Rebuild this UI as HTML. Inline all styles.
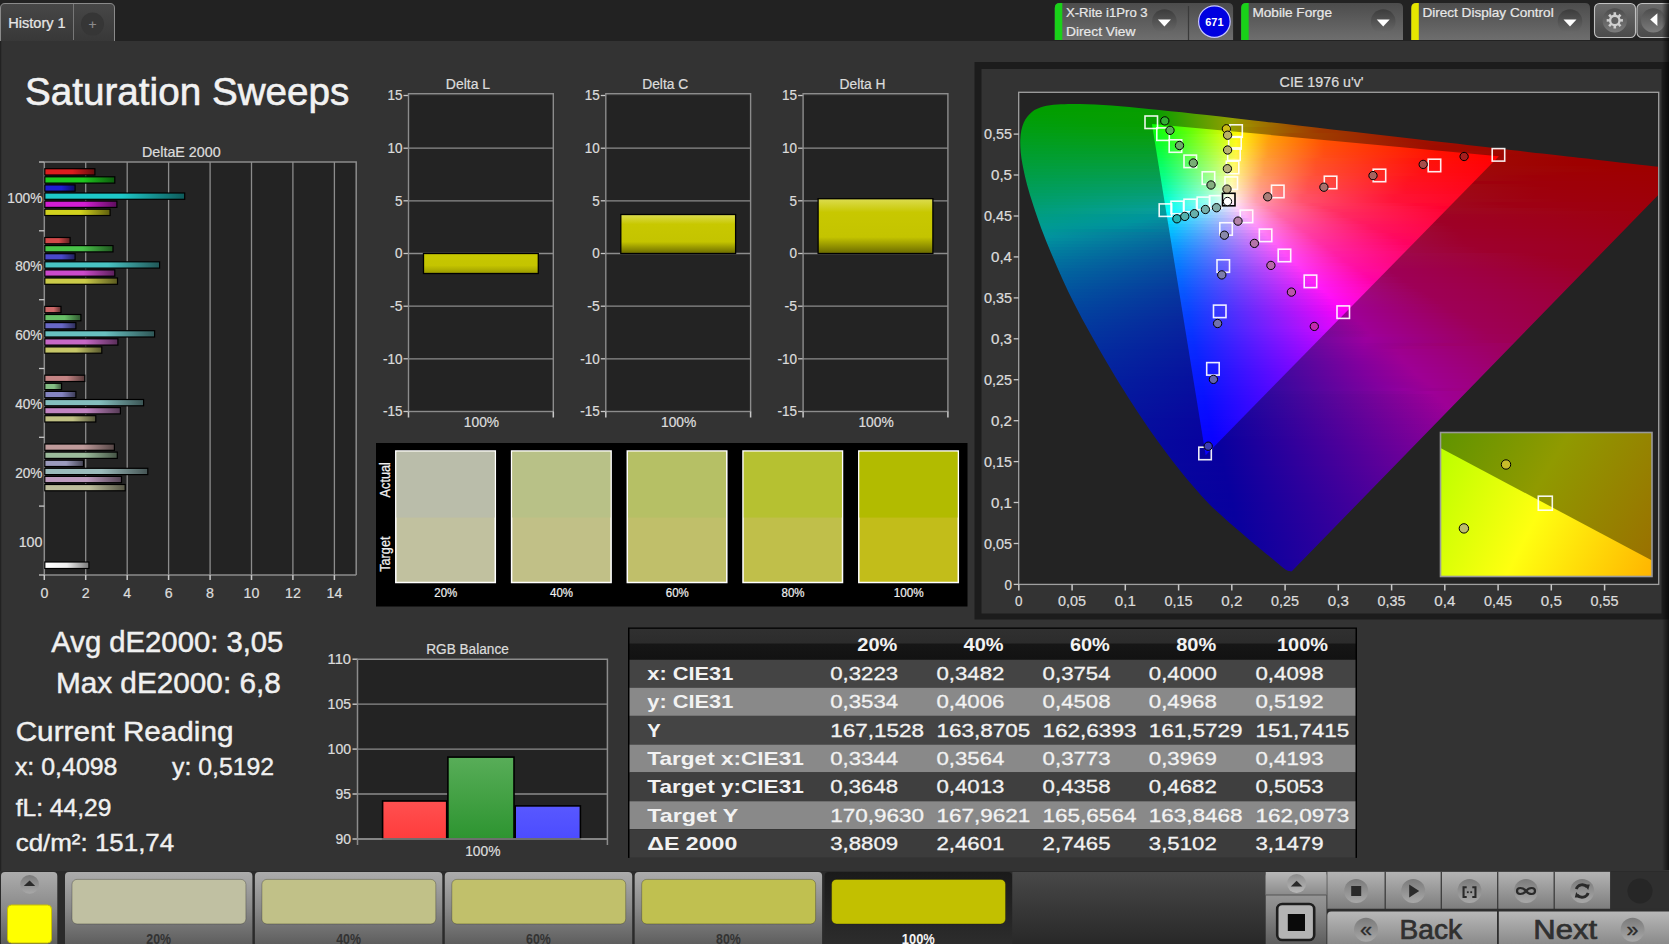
<!DOCTYPE html><html><head><meta charset="utf-8"><style>
html,body{margin:0;padding:0;background:#333;overflow:hidden}
svg{display:block;font-family:"Liberation Sans", sans-serif}
</style></head><body><svg width="1669" height="944" viewBox="0 0 1669 944"><rect x="0" y="0" width="1669" height="944" fill="#333333"/><rect x="0" y="0" width="1669" height="41" fill="#222222"/><rect x="0" y="41" width="1.2" height="830" fill="#222222"/><defs><linearGradient id="tabg" x1="0" y1="0" x2="0" y2="1"><stop offset="0" stop-color="#474747"/><stop offset="1" stop-color="#383838"/></linearGradient><radialGradient id="plusg" cx="0.5" cy="0.4" r="0.6"><stop offset="0" stop-color="#3a3a3a"/><stop offset="1" stop-color="#404040"/></radialGradient></defs><path d="M0.5 41 V8 Q0.5 3.5 5 3.5 H110 Q114.5 3.5 114.5 8 V41 Z" fill="url(#tabg)"/><path d="M0.5 41 V8 Q0.5 3.5 5 3.5 H110 Q114.5 3.5 114.5 8 V41" fill="none" stroke="#8a8a8a" stroke-width="1"/><line x1="73.5" y1="4" x2="73.5" y2="40" stroke="#777" stroke-width="1"/><circle cx="92.5" cy="24" r="11.5" fill="#363636"/><text x="88.5" y="28.5" font-size="13.0" textLength="8.0" lengthAdjust="spacingAndGlyphs" fill="#8a8a8a" stroke="#8a8a8a" stroke-width="0.21">+</text><text x="8.3" y="27.6" font-size="14.2" textLength="57.4" lengthAdjust="spacingAndGlyphs" fill="#e6e6e6" stroke="#e6e6e6" stroke-width="0.23">History 1</text><defs><linearGradient id="wg" x1="0" y1="0" x2="0" y2="1"><stop offset="0" stop-color="#4c4c4c"/><stop offset="1" stop-color="#6e6e6e"/></linearGradient><radialGradient id="ddg" cx="0.5" cy="0.5" r="0.5"><stop offset="0" stop-color="#5a5a5a"/><stop offset="0.8" stop-color="#555"/><stop offset="1" stop-color="#4a4a4a"/></radialGradient><linearGradient id="ddg2" x1="0" y1="0" x2="0" y2="1"><stop offset="0" stop-color="#3c3c3c"/><stop offset="1" stop-color="#6a6a6a"/></linearGradient></defs><path d="M1054.8 40 V8 Q1054.8 3 1059.8 3 H1228.1 Q1233.1 3 1233.1 8 V40 Z" fill="url(#wg)"/><path d="M1054.8 40 V8 Q1054.8 3 1059.8 3 H1062.3 V40 Z" fill="#19d119"/><line x1="1188.5" y1="6" x2="1188.5" y2="40" stroke="#3a3a3a" stroke-width="1.2"/><circle cx="1164.4" cy="21.5" r="12.3" fill="url(#ddg2)"/><path d="M1157.9 19.5 H1170.9 L1164.4 26.5 Z" fill="#fff"/><circle cx="1214.4" cy="21.6" r="15.8" fill="#0000e0" stroke="#c8c8ff" stroke-width="1.2"/><text x="1205.2" y="25.8" font-size="11.4" textLength="18.3" lengthAdjust="spacingAndGlyphs" fill="#ffffff" font-weight="bold">671</text><text x="1065.9" y="17.1" font-size="12.4" textLength="81.8" lengthAdjust="spacingAndGlyphs" fill="#e8e8e8" stroke="#e8e8e8" stroke-width="0.20">X-Rite i1Pro 3</text><text x="1066.0" y="35.7" font-size="12.4" textLength="69.5" lengthAdjust="spacingAndGlyphs" fill="#e8e8e8" stroke="#e8e8e8" stroke-width="0.20">Direct View</text><path d="M1241.2 40 V8 Q1241.2 3 1246.2 3 H1398 Q1403 3 1403 8 V40 Z" fill="url(#wg)"/><path d="M1241.2 40 V8 Q1241.2 3 1246.2 3 H1248.7 V40 Z" fill="#19d119"/><circle cx="1383.2" cy="21.5" r="12.3" fill="url(#ddg2)"/><path d="M1376.7 19.5 H1389.7 L1383.2 26.5 Z" fill="#fff"/><text x="1252.4" y="16.8" font-size="12.4" textLength="79.6" lengthAdjust="spacingAndGlyphs" fill="#e8e8e8" stroke="#e8e8e8" stroke-width="0.20">Mobile Forge</text><path d="M1411.3 40 V8 Q1411.3 3 1416.3 3 H1585 Q1590 3 1590 8 V40 Z" fill="url(#wg)"/><path d="M1411.3 40 V8 Q1411.3 3 1416.3 3 H1418.8 V40 Z" fill="#e6e600"/><circle cx="1570" cy="21.5" r="12.3" fill="url(#ddg2)"/><path d="M1563.5 19.5 H1576.5 L1570 26.5 Z" fill="#fff"/><text x="1422.4" y="16.6" font-size="12.4" textLength="131.3" lengthAdjust="spacingAndGlyphs" fill="#e8e8e8" stroke="#e8e8e8" stroke-width="0.20">Direct Display Control</text><defs><linearGradient id="gbg" x1="0" y1="0" x2="0" y2="1"><stop offset="0" stop-color="#6a6a6a"/><stop offset="1" stop-color="#4a4a4a"/></linearGradient><linearGradient id="gcirc" x1="0" y1="0" x2="0" y2="1"><stop offset="0" stop-color="#4c4c4c"/><stop offset="1" stop-color="#7c7c7c"/></linearGradient></defs><rect x="1594.5" y="3.5" width="41" height="34" rx="5" fill="url(#gbg)" stroke="#c0c0c0" stroke-width="1.1"/><circle cx="1614.8" cy="20.4" r="12.2" fill="url(#gcirc)"/><path d="M1620.58 19.19 L1622.89 19.05 L1622.89 21.75 L1620.58 21.61 L1619.74 23.63 L1621.47 25.17 L1619.57 27.07 L1618.03 25.34 L1616.01 26.18 L1616.15 28.49 L1613.45 28.49 L1613.59 26.18 L1611.57 25.34 L1610.03 27.07 L1608.13 25.17 L1609.86 23.63 L1609.02 21.61 L1606.71 21.75 L1606.71 19.05 L1609.02 19.19 L1609.86 17.17 L1608.13 15.63 L1610.03 13.73 L1611.57 15.46 L1613.59 14.62 L1613.45 12.31 L1616.15 12.31 L1616.01 14.62 L1618.03 15.46 L1619.57 13.73 L1621.47 15.63 L1619.74 17.17Z" fill="#d0d0d0"/><circle cx="1614.8" cy="20.4" r="3.5" fill="#606060"/><rect x="1637" y="3.5" width="40" height="34" rx="5" fill="url(#gbg)" stroke="#c0c0c0" stroke-width="1.1"/><circle cx="1653.3" cy="20.4" r="12.2" fill="url(#gcirc)"/><path d="M1650.2 19.6 L1657.4 13.2 V26 Z" fill="#fff"/><defs><linearGradient id="redge" x1="0" y1="0" x2="1" y2="0"><stop offset="0" stop-color="#000" stop-opacity="0"/><stop offset="1" stop-color="#000" stop-opacity="0.65"/></linearGradient></defs><text x="25.0" y="105.3" font-size="39.6" textLength="324.4" lengthAdjust="spacingAndGlyphs" fill="#f2f2f2" stroke="#f2f2f2" stroke-width="0.63">Saturation Sweeps</text><rect x="44.3" y="162" width="311.7" height="413" fill="#232323"/><line x1="85.7" y1="162" x2="85.7" y2="575" stroke="#8c8c8c" stroke-width="1.3"/><line x1="127.2" y1="162" x2="127.2" y2="575" stroke="#8c8c8c" stroke-width="1.3"/><line x1="168.6" y1="162" x2="168.6" y2="575" stroke="#8c8c8c" stroke-width="1.3"/><line x1="210.1" y1="162" x2="210.1" y2="575" stroke="#8c8c8c" stroke-width="1.3"/><line x1="251.5" y1="162" x2="251.5" y2="575" stroke="#8c8c8c" stroke-width="1.3"/><line x1="292.9" y1="162" x2="292.9" y2="575" stroke="#8c8c8c" stroke-width="1.3"/><line x1="334.4" y1="162" x2="334.4" y2="575" stroke="#8c8c8c" stroke-width="1.3"/><path d="M44.3 162 H356.2 V575" fill="none" stroke="#8c8c8c" stroke-width="1.5"/><path d="M44.3 162 V575 H356.2" fill="none" stroke="#8c8c8c" stroke-width="1.5"/><line x1="39" y1="162.0" x2="44.3" y2="162.0" stroke="#c8c8c8" stroke-width="1.3"/><line x1="39" y1="230.8" x2="44.3" y2="230.8" stroke="#c8c8c8" stroke-width="1.3"/><line x1="39" y1="299.7" x2="44.3" y2="299.7" stroke="#c8c8c8" stroke-width="1.3"/><line x1="39" y1="368.5" x2="44.3" y2="368.5" stroke="#c8c8c8" stroke-width="1.3"/><line x1="39" y1="437.3" x2="44.3" y2="437.3" stroke="#c8c8c8" stroke-width="1.3"/><line x1="39" y1="506.1" x2="44.3" y2="506.1" stroke="#c8c8c8" stroke-width="1.3"/><line x1="39" y1="575.0" x2="44.3" y2="575.0" stroke="#c8c8c8" stroke-width="1.3"/><line x1="44.3" y1="575" x2="44.3" y2="580" stroke="#c8c8c8" stroke-width="1.5"/><text x="40.4" y="597.5" font-size="14.2" textLength="7.9" lengthAdjust="spacingAndGlyphs" fill="#dcdcdc" stroke="#dcdcdc" stroke-width="0.23">0</text><line x1="85.7" y1="575" x2="85.7" y2="580" stroke="#c8c8c8" stroke-width="1.5"/><text x="81.8" y="597.5" font-size="14.2" textLength="7.9" lengthAdjust="spacingAndGlyphs" fill="#dcdcdc" stroke="#dcdcdc" stroke-width="0.23">2</text><line x1="127.2" y1="575" x2="127.2" y2="580" stroke="#c8c8c8" stroke-width="1.5"/><text x="123.2" y="597.5" font-size="14.2" textLength="7.9" lengthAdjust="spacingAndGlyphs" fill="#dcdcdc" stroke="#dcdcdc" stroke-width="0.23">4</text><line x1="168.6" y1="575" x2="168.6" y2="580" stroke="#c8c8c8" stroke-width="1.5"/><text x="164.7" y="597.5" font-size="14.2" textLength="7.9" lengthAdjust="spacingAndGlyphs" fill="#dcdcdc" stroke="#dcdcdc" stroke-width="0.23">6</text><line x1="210.1" y1="575" x2="210.1" y2="580" stroke="#c8c8c8" stroke-width="1.5"/><text x="206.1" y="597.5" font-size="14.2" textLength="7.9" lengthAdjust="spacingAndGlyphs" fill="#dcdcdc" stroke="#dcdcdc" stroke-width="0.23">8</text><line x1="251.5" y1="575" x2="251.5" y2="580" stroke="#c8c8c8" stroke-width="1.5"/><text x="243.6" y="597.5" font-size="14.2" textLength="15.8" lengthAdjust="spacingAndGlyphs" fill="#dcdcdc" stroke="#dcdcdc" stroke-width="0.23">10</text><line x1="292.9" y1="575" x2="292.9" y2="580" stroke="#c8c8c8" stroke-width="1.5"/><text x="285.1" y="597.5" font-size="14.2" textLength="15.8" lengthAdjust="spacingAndGlyphs" fill="#dcdcdc" stroke="#dcdcdc" stroke-width="0.23">12</text><line x1="334.4" y1="575" x2="334.4" y2="580" stroke="#c8c8c8" stroke-width="1.5"/><text x="326.5" y="597.5" font-size="14.2" textLength="15.8" lengthAdjust="spacingAndGlyphs" fill="#dcdcdc" stroke="#dcdcdc" stroke-width="0.23">14</text><text x="142.0" y="157.0" font-size="14.2" textLength="78.6" lengthAdjust="spacingAndGlyphs" fill="#dcdcdc" stroke="#dcdcdc" stroke-width="0.23">DeltaE 2000</text><text x="7.3" y="202.6" font-size="15.3" textLength="35.2" lengthAdjust="spacingAndGlyphs" fill="#dcdcdc" stroke="#dcdcdc" stroke-width="0.24">100%</text><text x="15.2" y="271.4" font-size="15.3" textLength="27.3" lengthAdjust="spacingAndGlyphs" fill="#dcdcdc" stroke="#dcdcdc" stroke-width="0.24">80%</text><text x="15.2" y="340.3" font-size="15.3" textLength="27.3" lengthAdjust="spacingAndGlyphs" fill="#dcdcdc" stroke="#dcdcdc" stroke-width="0.24">60%</text><text x="15.2" y="409.1" font-size="15.3" textLength="27.3" lengthAdjust="spacingAndGlyphs" fill="#dcdcdc" stroke="#dcdcdc" stroke-width="0.24">40%</text><text x="15.2" y="477.9" font-size="15.3" textLength="27.3" lengthAdjust="spacingAndGlyphs" fill="#dcdcdc" stroke="#dcdcdc" stroke-width="0.24">20%</text><text x="18.7" y="546.8" font-size="15.3" textLength="23.8" lengthAdjust="spacingAndGlyphs" fill="#dcdcdc" stroke="#dcdcdc" stroke-width="0.24">100</text><rect x="44.8" y="168.7" width="50.1" height="6.3" fill="url(#db0)" stroke="#000" stroke-width="1.2"/><rect x="44.8" y="176.8" width="70.0" height="6.3" fill="url(#db1)" stroke="#000" stroke-width="1.2"/><rect x="44.8" y="184.9" width="30.3" height="6.3" fill="url(#db2)" stroke="#000" stroke-width="1.2"/><rect x="44.8" y="193.0" width="139.9" height="6.3" fill="url(#db3)" stroke="#000" stroke-width="1.2"/><rect x="44.8" y="201.1" width="72.1" height="6.3" fill="url(#db4)" stroke="#000" stroke-width="1.2"/><rect x="44.8" y="209.2" width="65.3" height="6.3" fill="url(#db5)" stroke="#000" stroke-width="1.2"/><rect x="44.8" y="237.5" width="25.3" height="6.3" fill="url(#db6)" stroke="#000" stroke-width="1.2"/><rect x="44.8" y="245.6" width="68.2" height="6.3" fill="url(#db7)" stroke="#000" stroke-width="1.2"/><rect x="44.8" y="253.7" width="30.3" height="6.3" fill="url(#db8)" stroke="#000" stroke-width="1.2"/><rect x="44.8" y="261.8" width="114.8" height="6.3" fill="url(#db9)" stroke="#000" stroke-width="1.2"/><rect x="44.8" y="269.9" width="70.0" height="6.3" fill="url(#db10)" stroke="#000" stroke-width="1.2"/><rect x="44.8" y="278.0" width="72.7" height="6.3" fill="url(#db11)" stroke="#000" stroke-width="1.2"/><rect x="44.8" y="306.4" width="16.2" height="6.3" fill="url(#db12)" stroke="#000" stroke-width="1.2"/><rect x="44.8" y="314.5" width="36.1" height="6.3" fill="url(#db13)" stroke="#000" stroke-width="1.2"/><rect x="44.8" y="322.6" width="31.1" height="6.3" fill="url(#db14)" stroke="#000" stroke-width="1.2"/><rect x="44.8" y="330.7" width="109.8" height="6.3" fill="url(#db15)" stroke="#000" stroke-width="1.2"/><rect x="44.8" y="338.8" width="73.1" height="6.3" fill="url(#db16)" stroke="#000" stroke-width="1.2"/><rect x="44.8" y="346.9" width="57.0" height="6.3" fill="url(#db17)" stroke="#000" stroke-width="1.2"/><rect x="44.8" y="375.2" width="40.0" height="6.3" fill="url(#db18)" stroke="#000" stroke-width="1.2"/><rect x="44.8" y="383.3" width="16.8" height="6.3" fill="url(#db19)" stroke="#000" stroke-width="1.2"/><rect x="44.8" y="391.4" width="31.1" height="6.3" fill="url(#db20)" stroke="#000" stroke-width="1.2"/><rect x="44.8" y="399.5" width="98.8" height="6.3" fill="url(#db21)" stroke="#000" stroke-width="1.2"/><rect x="44.8" y="407.6" width="75.6" height="6.3" fill="url(#db22)" stroke="#000" stroke-width="1.2"/><rect x="44.8" y="415.7" width="51.0" height="6.3" fill="url(#db23)" stroke="#000" stroke-width="1.2"/><rect x="44.8" y="444.0" width="69.6" height="6.3" fill="url(#db24)" stroke="#000" stroke-width="1.2"/><rect x="44.8" y="452.1" width="72.5" height="6.3" fill="url(#db25)" stroke="#000" stroke-width="1.2"/><rect x="44.8" y="460.2" width="38.7" height="6.3" fill="url(#db26)" stroke="#000" stroke-width="1.2"/><rect x="44.8" y="468.3" width="103.0" height="6.3" fill="url(#db27)" stroke="#000" stroke-width="1.2"/><rect x="44.8" y="476.4" width="76.7" height="6.3" fill="url(#db28)" stroke="#000" stroke-width="1.2"/><rect x="44.8" y="484.5" width="80.4" height="6.3" fill="url(#db29)" stroke="#000" stroke-width="1.2"/><rect x="44.8" y="562" width="44.1" height="6.5" fill="url(#dbw)" stroke="#000" stroke-width="1.2"/><defs><linearGradient id="db0" x1="0" x2="1" y1="0" y2="0"><stop offset="0" stop-color="rgb(220, 30, 30)"/><stop offset="0.55" stop-color="rgb(220, 30, 30)"/><stop offset="1" stop-color="rgb(99, 13, 13)"/></linearGradient><linearGradient id="db1" x1="0" x2="1" y1="0" y2="0"><stop offset="0" stop-color="rgb(30, 200, 30)"/><stop offset="0.55" stop-color="rgb(30, 200, 30)"/><stop offset="1" stop-color="rgb(13, 90, 13)"/></linearGradient><linearGradient id="db2" x1="0" x2="1" y1="0" y2="0"><stop offset="0" stop-color="rgb(30, 30, 210)"/><stop offset="0.55" stop-color="rgb(30, 30, 210)"/><stop offset="1" stop-color="rgb(13, 13, 94)"/></linearGradient><linearGradient id="db3" x1="0" x2="1" y1="0" y2="0"><stop offset="0" stop-color="rgb(30, 200, 200)"/><stop offset="0.55" stop-color="rgb(30, 200, 200)"/><stop offset="1" stop-color="rgb(13, 90, 90)"/></linearGradient><linearGradient id="db4" x1="0" x2="1" y1="0" y2="0"><stop offset="0" stop-color="rgb(210, 30, 210)"/><stop offset="0.55" stop-color="rgb(210, 30, 210)"/><stop offset="1" stop-color="rgb(94, 13, 94)"/></linearGradient><linearGradient id="db5" x1="0" x2="1" y1="0" y2="0"><stop offset="0" stop-color="rgb(210, 210, 30)"/><stop offset="0.55" stop-color="rgb(210, 210, 30)"/><stop offset="1" stop-color="rgb(94, 94, 13)"/></linearGradient><linearGradient id="db6" x1="0" x2="1" y1="0" y2="0"><stop offset="0" stop-color="rgb(210, 73, 73)"/><stop offset="0.55" stop-color="rgb(210, 73, 73)"/><stop offset="1" stop-color="rgb(94, 32, 32)"/></linearGradient><linearGradient id="db7" x1="0" x2="1" y1="0" y2="0"><stop offset="0" stop-color="rgb(73, 195, 73)"/><stop offset="0.55" stop-color="rgb(73, 195, 73)"/><stop offset="1" stop-color="rgb(32, 87, 32)"/></linearGradient><linearGradient id="db8" x1="0" x2="1" y1="0" y2="0"><stop offset="0" stop-color="rgb(73, 73, 203)"/><stop offset="0.55" stop-color="rgb(73, 73, 203)"/><stop offset="1" stop-color="rgb(32, 32, 91)"/></linearGradient><linearGradient id="db9" x1="0" x2="1" y1="0" y2="0"><stop offset="0" stop-color="rgb(73, 195, 195)"/><stop offset="0.55" stop-color="rgb(73, 195, 195)"/><stop offset="1" stop-color="rgb(32, 87, 87)"/></linearGradient><linearGradient id="db10" x1="0" x2="1" y1="0" y2="0"><stop offset="0" stop-color="rgb(203, 73, 203)"/><stop offset="0.55" stop-color="rgb(203, 73, 203)"/><stop offset="1" stop-color="rgb(91, 32, 91)"/></linearGradient><linearGradient id="db11" x1="0" x2="1" y1="0" y2="0"><stop offset="0" stop-color="rgb(203, 203, 73)"/><stop offset="0.55" stop-color="rgb(203, 203, 73)"/><stop offset="1" stop-color="rgb(91, 91, 32)"/></linearGradient><linearGradient id="db12" x1="0" x2="1" y1="0" y2="0"><stop offset="0" stop-color="rgb(203, 104, 104)"/><stop offset="0.55" stop-color="rgb(203, 104, 104)"/><stop offset="1" stop-color="rgb(91, 46, 46)"/></linearGradient><linearGradient id="db13" x1="0" x2="1" y1="0" y2="0"><stop offset="0" stop-color="rgb(104, 192, 104)"/><stop offset="0.55" stop-color="rgb(104, 192, 104)"/><stop offset="1" stop-color="rgb(46, 86, 46)"/></linearGradient><linearGradient id="db14" x1="0" x2="1" y1="0" y2="0"><stop offset="0" stop-color="rgb(104, 104, 198)"/><stop offset="0.55" stop-color="rgb(104, 104, 198)"/><stop offset="1" stop-color="rgb(46, 46, 89)"/></linearGradient><linearGradient id="db15" x1="0" x2="1" y1="0" y2="0"><stop offset="0" stop-color="rgb(104, 192, 192)"/><stop offset="0.55" stop-color="rgb(104, 192, 192)"/><stop offset="1" stop-color="rgb(46, 86, 86)"/></linearGradient><linearGradient id="db16" x1="0" x2="1" y1="0" y2="0"><stop offset="0" stop-color="rgb(198, 104, 198)"/><stop offset="0.55" stop-color="rgb(198, 104, 198)"/><stop offset="1" stop-color="rgb(89, 46, 89)"/></linearGradient><linearGradient id="db17" x1="0" x2="1" y1="0" y2="0"><stop offset="0" stop-color="rgb(198, 198, 104)"/><stop offset="0.55" stop-color="rgb(198, 198, 104)"/><stop offset="1" stop-color="rgb(89, 89, 46)"/></linearGradient><linearGradient id="db18" x1="0" x2="1" y1="0" y2="0"><stop offset="0" stop-color="rgb(196, 132, 132)"/><stop offset="0.55" stop-color="rgb(196, 132, 132)"/><stop offset="1" stop-color="rgb(88, 59, 59)"/></linearGradient><linearGradient id="db19" x1="0" x2="1" y1="0" y2="0"><stop offset="0" stop-color="rgb(132, 190, 132)"/><stop offset="0.55" stop-color="rgb(132, 190, 132)"/><stop offset="1" stop-color="rgb(59, 85, 59)"/></linearGradient><linearGradient id="db20" x1="0" x2="1" y1="0" y2="0"><stop offset="0" stop-color="rgb(132, 132, 193)"/><stop offset="0.55" stop-color="rgb(132, 132, 193)"/><stop offset="1" stop-color="rgb(59, 59, 86)"/></linearGradient><linearGradient id="db21" x1="0" x2="1" y1="0" y2="0"><stop offset="0" stop-color="rgb(132, 190, 190)"/><stop offset="0.55" stop-color="rgb(132, 190, 190)"/><stop offset="1" stop-color="rgb(59, 85, 85)"/></linearGradient><linearGradient id="db22" x1="0" x2="1" y1="0" y2="0"><stop offset="0" stop-color="rgb(193, 132, 193)"/><stop offset="0.55" stop-color="rgb(193, 132, 193)"/><stop offset="1" stop-color="rgb(86, 59, 86)"/></linearGradient><linearGradient id="db23" x1="0" x2="1" y1="0" y2="0"><stop offset="0" stop-color="rgb(193, 193, 132)"/><stop offset="0.55" stop-color="rgb(193, 193, 132)"/><stop offset="1" stop-color="rgb(86, 86, 59)"/></linearGradient><linearGradient id="db24" x1="0" x2="1" y1="0" y2="0"><stop offset="0" stop-color="rgb(191, 155, 155)"/><stop offset="0.55" stop-color="rgb(191, 155, 155)"/><stop offset="1" stop-color="rgb(85, 69, 69)"/></linearGradient><linearGradient id="db25" x1="0" x2="1" y1="0" y2="0"><stop offset="0" stop-color="rgb(155, 187, 155)"/><stop offset="0.55" stop-color="rgb(155, 187, 155)"/><stop offset="1" stop-color="rgb(69, 84, 69)"/></linearGradient><linearGradient id="db26" x1="0" x2="1" y1="0" y2="0"><stop offset="0" stop-color="rgb(155, 155, 189)"/><stop offset="0.55" stop-color="rgb(155, 155, 189)"/><stop offset="1" stop-color="rgb(69, 69, 85)"/></linearGradient><linearGradient id="db27" x1="0" x2="1" y1="0" y2="0"><stop offset="0" stop-color="rgb(155, 187, 187)"/><stop offset="0.55" stop-color="rgb(155, 187, 187)"/><stop offset="1" stop-color="rgb(69, 84, 84)"/></linearGradient><linearGradient id="db28" x1="0" x2="1" y1="0" y2="0"><stop offset="0" stop-color="rgb(189, 155, 189)"/><stop offset="0.55" stop-color="rgb(189, 155, 189)"/><stop offset="1" stop-color="rgb(85, 69, 85)"/></linearGradient><linearGradient id="db29" x1="0" x2="1" y1="0" y2="0"><stop offset="0" stop-color="rgb(189, 189, 155)"/><stop offset="0.55" stop-color="rgb(189, 189, 155)"/><stop offset="1" stop-color="rgb(85, 85, 69)"/></linearGradient><linearGradient id="dbw" x1="0" x2="1" y1="0" y2="0"><stop offset="0" stop-color="#fff"/><stop offset="0.5" stop-color="#eee"/><stop offset="1" stop-color="#777"/></linearGradient></defs><defs><linearGradient id="ybar" x1="0" y1="0" x2="0" y2="1"><stop offset="0" stop-color="#dcdc50"/><stop offset="0.25" stop-color="#c8c800"/><stop offset="0.7" stop-color="#c4c400"/><stop offset="1" stop-color="#6a6a00"/></linearGradient><linearGradient id="ybarL" x1="0" y1="0" x2="0" y2="1"><stop offset="0" stop-color="#c8c800"/><stop offset="0.6" stop-color="#c4c400"/><stop offset="1" stop-color="#9a9a00"/></linearGradient></defs><rect x="408.5" y="95.5" width="144.79999999999995" height="316.0" fill="#232323"/><line x1="408.5" y1="358.8" x2="553.3" y2="358.8" stroke="#8c8c8c" stroke-width="1.3"/><line x1="403.5" y1="358.8" x2="408.5" y2="358.8" stroke="#c8c8c8" stroke-width="1.3"/><line x1="408.5" y1="306.2" x2="553.3" y2="306.2" stroke="#8c8c8c" stroke-width="1.3"/><line x1="403.5" y1="306.2" x2="408.5" y2="306.2" stroke="#c8c8c8" stroke-width="1.3"/><line x1="408.5" y1="253.5" x2="553.3" y2="253.5" stroke="#8c8c8c" stroke-width="1.3"/><line x1="403.5" y1="253.5" x2="408.5" y2="253.5" stroke="#c8c8c8" stroke-width="1.3"/><line x1="408.5" y1="200.8" x2="553.3" y2="200.8" stroke="#8c8c8c" stroke-width="1.3"/><line x1="403.5" y1="200.8" x2="408.5" y2="200.8" stroke="#c8c8c8" stroke-width="1.3"/><line x1="408.5" y1="148.2" x2="553.3" y2="148.2" stroke="#8c8c8c" stroke-width="1.3"/><line x1="403.5" y1="148.2" x2="408.5" y2="148.2" stroke="#c8c8c8" stroke-width="1.3"/><line x1="403.5" y1="95.5" x2="408.5" y2="95.5" stroke="#c8c8c8" stroke-width="1.3"/><line x1="403.5" y1="411.5" x2="408.5" y2="411.5" stroke="#c8c8c8" stroke-width="1.3"/><rect x="408.5" y="93.7" width="144.79999999999995" height="317.8" fill="none" stroke="#8c8c8c" stroke-width="1.4"/><line x1="408.5" y1="411.5" x2="408.5" y2="417.5" stroke="#c8c8c8" stroke-width="1.5"/><line x1="553.3" y1="411.5" x2="553.3" y2="417.5" stroke="#c8c8c8" stroke-width="1.5"/><text x="383.0" y="416.3" font-size="14.0" textLength="19.5" lengthAdjust="spacingAndGlyphs" fill="#dcdcdc" stroke="#dcdcdc" stroke-width="0.22">-15</text><text x="383.0" y="363.6" font-size="14.0" textLength="19.5" lengthAdjust="spacingAndGlyphs" fill="#dcdcdc" stroke="#dcdcdc" stroke-width="0.22">-10</text><text x="390.0" y="311.0" font-size="14.0" textLength="12.5" lengthAdjust="spacingAndGlyphs" fill="#dcdcdc" stroke="#dcdcdc" stroke-width="0.22">-5</text><text x="395.0" y="258.3" font-size="14.0" textLength="7.5" lengthAdjust="spacingAndGlyphs" fill="#dcdcdc" stroke="#dcdcdc" stroke-width="0.22">0</text><text x="395.0" y="205.6" font-size="14.0" textLength="7.5" lengthAdjust="spacingAndGlyphs" fill="#dcdcdc" stroke="#dcdcdc" stroke-width="0.22">5</text><text x="387.5" y="153.0" font-size="14.0" textLength="15.0" lengthAdjust="spacingAndGlyphs" fill="#dcdcdc" stroke="#dcdcdc" stroke-width="0.22">10</text><text x="387.5" y="100.3" font-size="14.0" textLength="15.0" lengthAdjust="spacingAndGlyphs" fill="#dcdcdc" stroke="#dcdcdc" stroke-width="0.22">15</text><text x="445.8" y="88.9" font-size="14.0" textLength="44.3" lengthAdjust="spacingAndGlyphs" fill="#dcdcdc" stroke="#dcdcdc" stroke-width="0.22">Delta L</text><text x="463.8" y="426.9" font-size="14.0" textLength="35.3" lengthAdjust="spacingAndGlyphs" fill="#dcdcdc" stroke="#dcdcdc" stroke-width="0.22">100%</text><rect x="423.5" y="253.5" width="114.8" height="20.0" fill="url(#ybarL)" stroke="#000" stroke-width="1.3"/><rect x="605.8" y="95.5" width="144.79999999999995" height="316.0" fill="#232323"/><line x1="605.8" y1="358.8" x2="750.5999999999999" y2="358.8" stroke="#8c8c8c" stroke-width="1.3"/><line x1="600.8" y1="358.8" x2="605.8" y2="358.8" stroke="#c8c8c8" stroke-width="1.3"/><line x1="605.8" y1="306.2" x2="750.5999999999999" y2="306.2" stroke="#8c8c8c" stroke-width="1.3"/><line x1="600.8" y1="306.2" x2="605.8" y2="306.2" stroke="#c8c8c8" stroke-width="1.3"/><line x1="605.8" y1="253.5" x2="750.5999999999999" y2="253.5" stroke="#8c8c8c" stroke-width="1.3"/><line x1="600.8" y1="253.5" x2="605.8" y2="253.5" stroke="#c8c8c8" stroke-width="1.3"/><line x1="605.8" y1="200.8" x2="750.5999999999999" y2="200.8" stroke="#8c8c8c" stroke-width="1.3"/><line x1="600.8" y1="200.8" x2="605.8" y2="200.8" stroke="#c8c8c8" stroke-width="1.3"/><line x1="605.8" y1="148.2" x2="750.5999999999999" y2="148.2" stroke="#8c8c8c" stroke-width="1.3"/><line x1="600.8" y1="148.2" x2="605.8" y2="148.2" stroke="#c8c8c8" stroke-width="1.3"/><line x1="600.8" y1="95.5" x2="605.8" y2="95.5" stroke="#c8c8c8" stroke-width="1.3"/><line x1="600.8" y1="411.5" x2="605.8" y2="411.5" stroke="#c8c8c8" stroke-width="1.3"/><rect x="605.8" y="93.7" width="144.79999999999995" height="317.8" fill="none" stroke="#8c8c8c" stroke-width="1.4"/><line x1="605.8" y1="411.5" x2="605.8" y2="417.5" stroke="#c8c8c8" stroke-width="1.5"/><line x1="750.5999999999999" y1="411.5" x2="750.5999999999999" y2="417.5" stroke="#c8c8c8" stroke-width="1.5"/><text x="580.3" y="416.3" font-size="14.0" textLength="19.5" lengthAdjust="spacingAndGlyphs" fill="#dcdcdc" stroke="#dcdcdc" stroke-width="0.22">-15</text><text x="580.3" y="363.6" font-size="14.0" textLength="19.5" lengthAdjust="spacingAndGlyphs" fill="#dcdcdc" stroke="#dcdcdc" stroke-width="0.22">-10</text><text x="587.3" y="311.0" font-size="14.0" textLength="12.5" lengthAdjust="spacingAndGlyphs" fill="#dcdcdc" stroke="#dcdcdc" stroke-width="0.22">-5</text><text x="592.3" y="258.3" font-size="14.0" textLength="7.5" lengthAdjust="spacingAndGlyphs" fill="#dcdcdc" stroke="#dcdcdc" stroke-width="0.22">0</text><text x="592.3" y="205.6" font-size="14.0" textLength="7.5" lengthAdjust="spacingAndGlyphs" fill="#dcdcdc" stroke="#dcdcdc" stroke-width="0.22">5</text><text x="584.8" y="153.0" font-size="14.0" textLength="15.0" lengthAdjust="spacingAndGlyphs" fill="#dcdcdc" stroke="#dcdcdc" stroke-width="0.22">10</text><text x="584.8" y="100.3" font-size="14.0" textLength="15.0" lengthAdjust="spacingAndGlyphs" fill="#dcdcdc" stroke="#dcdcdc" stroke-width="0.22">15</text><text x="642.2" y="88.9" font-size="14.0" textLength="46.0" lengthAdjust="spacingAndGlyphs" fill="#dcdcdc" stroke="#dcdcdc" stroke-width="0.22">Delta C</text><text x="661.0" y="426.9" font-size="14.0" textLength="35.3" lengthAdjust="spacingAndGlyphs" fill="#dcdcdc" stroke="#dcdcdc" stroke-width="0.22">100%</text><rect x="620.8" y="214.5" width="114.8" height="39.0" fill="url(#ybar)" stroke="#000" stroke-width="1.3"/><rect x="803.1" y="95.5" width="144.79999999999995" height="316.0" fill="#232323"/><line x1="803.1" y1="358.8" x2="947.9" y2="358.8" stroke="#8c8c8c" stroke-width="1.3"/><line x1="798.1" y1="358.8" x2="803.1" y2="358.8" stroke="#c8c8c8" stroke-width="1.3"/><line x1="803.1" y1="306.2" x2="947.9" y2="306.2" stroke="#8c8c8c" stroke-width="1.3"/><line x1="798.1" y1="306.2" x2="803.1" y2="306.2" stroke="#c8c8c8" stroke-width="1.3"/><line x1="803.1" y1="253.5" x2="947.9" y2="253.5" stroke="#8c8c8c" stroke-width="1.3"/><line x1="798.1" y1="253.5" x2="803.1" y2="253.5" stroke="#c8c8c8" stroke-width="1.3"/><line x1="803.1" y1="200.8" x2="947.9" y2="200.8" stroke="#8c8c8c" stroke-width="1.3"/><line x1="798.1" y1="200.8" x2="803.1" y2="200.8" stroke="#c8c8c8" stroke-width="1.3"/><line x1="803.1" y1="148.2" x2="947.9" y2="148.2" stroke="#8c8c8c" stroke-width="1.3"/><line x1="798.1" y1="148.2" x2="803.1" y2="148.2" stroke="#c8c8c8" stroke-width="1.3"/><line x1="798.1" y1="95.5" x2="803.1" y2="95.5" stroke="#c8c8c8" stroke-width="1.3"/><line x1="798.1" y1="411.5" x2="803.1" y2="411.5" stroke="#c8c8c8" stroke-width="1.3"/><rect x="803.1" y="93.7" width="144.79999999999995" height="317.8" fill="none" stroke="#8c8c8c" stroke-width="1.4"/><line x1="803.1" y1="411.5" x2="803.1" y2="417.5" stroke="#c8c8c8" stroke-width="1.5"/><line x1="947.9" y1="411.5" x2="947.9" y2="417.5" stroke="#c8c8c8" stroke-width="1.5"/><text x="777.6" y="416.3" font-size="14.0" textLength="19.5" lengthAdjust="spacingAndGlyphs" fill="#dcdcdc" stroke="#dcdcdc" stroke-width="0.22">-15</text><text x="777.6" y="363.6" font-size="14.0" textLength="19.5" lengthAdjust="spacingAndGlyphs" fill="#dcdcdc" stroke="#dcdcdc" stroke-width="0.22">-10</text><text x="784.6" y="311.0" font-size="14.0" textLength="12.5" lengthAdjust="spacingAndGlyphs" fill="#dcdcdc" stroke="#dcdcdc" stroke-width="0.22">-5</text><text x="789.6" y="258.3" font-size="14.0" textLength="7.5" lengthAdjust="spacingAndGlyphs" fill="#dcdcdc" stroke="#dcdcdc" stroke-width="0.22">0</text><text x="789.6" y="205.6" font-size="14.0" textLength="7.5" lengthAdjust="spacingAndGlyphs" fill="#dcdcdc" stroke="#dcdcdc" stroke-width="0.22">5</text><text x="782.1" y="153.0" font-size="14.0" textLength="15.0" lengthAdjust="spacingAndGlyphs" fill="#dcdcdc" stroke="#dcdcdc" stroke-width="0.22">10</text><text x="782.1" y="100.3" font-size="14.0" textLength="15.0" lengthAdjust="spacingAndGlyphs" fill="#dcdcdc" stroke="#dcdcdc" stroke-width="0.22">15</text><text x="839.5" y="88.9" font-size="14.0" textLength="46.0" lengthAdjust="spacingAndGlyphs" fill="#dcdcdc" stroke="#dcdcdc" stroke-width="0.22">Delta H</text><text x="858.4" y="426.9" font-size="14.0" textLength="35.3" lengthAdjust="spacingAndGlyphs" fill="#dcdcdc" stroke="#dcdcdc" stroke-width="0.22">100%</text><rect x="818.1" y="198.7" width="114.8" height="54.8" fill="url(#ybar)" stroke="#000" stroke-width="1.3"/><rect x="376" y="443" width="591.5" height="163.5" fill="#000"/><rect x="395.8" y="451" width="99.5" height="131.5" fill="#c1c19f" stroke="#fff" stroke-width="1.5"/><rect x="396.6" y="451.75" width="98" height="65.8" fill="#babdaa"/><text x="434.3" y="597.3" font-size="12.5" textLength="23.0" lengthAdjust="spacingAndGlyphs" fill="#f0f0f0" stroke="#f0f0f0" stroke-width="0.20">20%</text><rect x="511.6" y="451" width="99.5" height="131.5" fill="#c1c087" stroke="#fff" stroke-width="1.5"/><rect x="512.3" y="451.75" width="98" height="65.8" fill="#b8c187"/><text x="550.0" y="597.3" font-size="12.5" textLength="23.0" lengthAdjust="spacingAndGlyphs" fill="#f0f0f0" stroke="#f0f0f0" stroke-width="0.20">40%</text><rect x="627.3" y="451" width="99.5" height="131.5" fill="#c0bf6a" stroke="#fff" stroke-width="1.5"/><rect x="628.0" y="451.75" width="98" height="65.8" fill="#b6c065"/><text x="665.8" y="597.3" font-size="12.5" textLength="23.0" lengthAdjust="spacingAndGlyphs" fill="#f0f0f0" stroke="#f0f0f0" stroke-width="0.20">60%</text><rect x="743.0" y="451" width="99.5" height="131.5" fill="#c0bf4a" stroke="#fff" stroke-width="1.5"/><rect x="743.8" y="451.75" width="98" height="65.8" fill="#b6c131"/><text x="781.5" y="597.3" font-size="12.5" textLength="23.0" lengthAdjust="spacingAndGlyphs" fill="#f0f0f0" stroke="#f0f0f0" stroke-width="0.20">80%</text><rect x="858.8" y="451" width="99.5" height="131.5" fill="#c2bd1a" stroke="#fff" stroke-width="1.5"/><rect x="859.5" y="451.75" width="98" height="65.8" fill="#b2bb00"/><text x="893.8" y="597.3" font-size="12.5" textLength="30.0" lengthAdjust="spacingAndGlyphs" fill="#f0f0f0" stroke="#f0f0f0" stroke-width="0.20">100%</text><g transform="translate(390.3,479.8) rotate(-90)"><text x="-17.6" y="0.0" font-size="14.8" textLength="35.2" lengthAdjust="spacingAndGlyphs" fill="#f0f0f0" stroke="#f0f0f0" stroke-width="0.24">Actual</text></g><g transform="translate(390.3,554.2) rotate(-90)"><text x="-17.6" y="0.0" font-size="14.8" textLength="35.3" lengthAdjust="spacingAndGlyphs" fill="#f0f0f0" stroke="#f0f0f0" stroke-width="0.24">Target</text></g><rect x="974.5" y="62" width="694.5" height="557.5" fill="#1c1c1c"/><rect x="981.5" y="69" width="680" height="544.5" fill="#333333"/><rect x="1018.7" y="92.3" width="640" height="492.1" fill="#232323"/><defs><linearGradient id="o0" gradientUnits="userSpaceOnUse" x1="1018" x2="1659" y1="0" y2="0"><stop offset="0.000" stop-color="#009e00"/><stop offset="0.212" stop-color="#089e00"/><stop offset="0.337" stop-color="#939e00"/><stop offset="0.371" stop-color="#9e7e00"/><stop offset="0.474" stop-color="#9e3d00"/><stop offset="0.718" stop-color="#9e0a00"/><stop offset="0.998" stop-color="#9e0000"/></linearGradient><linearGradient id="o1" gradientUnits="userSpaceOnUse" x1="1018" x2="1659" y1="0" y2="0"><stop offset="0.000" stop-color="#009e00"/><stop offset="0.212" stop-color="#079e00"/><stop offset="0.337" stop-color="#949e00"/><stop offset="0.378" stop-color="#9e7700"/><stop offset="0.487" stop-color="#9e3700"/><stop offset="0.749" stop-color="#9e0700"/><stop offset="0.998" stop-color="#9e0000"/></linearGradient><linearGradient id="o2" gradientUnits="userSpaceOnUse" x1="1018" x2="1659" y1="0" y2="0"><stop offset="0.000" stop-color="#009e00"/><stop offset="0.212" stop-color="#079e00"/><stop offset="0.334" stop-color="#909e00"/><stop offset="0.356" stop-color="#9e8e00"/><stop offset="0.443" stop-color="#9e4900"/><stop offset="0.637" stop-color="#9e1400"/><stop offset="0.952" stop-color="#9e0000"/><stop offset="0.998" stop-color="#9e0000"/></linearGradient><linearGradient id="o3" gradientUnits="userSpaceOnUse" x1="1018" x2="1659" y1="0" y2="0"><stop offset="0.000" stop-color="#009e00"/><stop offset="0.212" stop-color="#069e00"/><stop offset="0.334" stop-color="#909e00"/><stop offset="0.356" stop-color="#9e8d00"/><stop offset="0.443" stop-color="#9e4800"/><stop offset="0.637" stop-color="#9e1300"/><stop offset="0.949" stop-color="#9e0000"/><stop offset="0.998" stop-color="#9e0000"/></linearGradient><linearGradient id="o4" gradientUnits="userSpaceOnUse" x1="1018" x2="1659" y1="0" y2="0"><stop offset="0.000" stop-color="#009e02"/><stop offset="0.215" stop-color="#089e00"/><stop offset="0.337" stop-color="#969e00"/><stop offset="0.427" stop-color="#9e5000"/><stop offset="0.599" stop-color="#9e1900"/><stop offset="0.914" stop-color="#9e0000"/><stop offset="0.998" stop-color="#9e0000"/></linearGradient><linearGradient id="o5" gradientUnits="userSpaceOnUse" x1="1018" x2="1659" y1="0" y2="0"><stop offset="0.000" stop-color="#009e05"/><stop offset="0.215" stop-color="#089e00"/><stop offset="0.334" stop-color="#929e00"/><stop offset="0.359" stop-color="#9e8800"/><stop offset="0.449" stop-color="#9e4400"/><stop offset="0.655" stop-color="#9e1000"/><stop offset="0.967" stop-color="#9e0000"/><stop offset="0.998" stop-color="#9e0000"/></linearGradient><linearGradient id="o6" gradientUnits="userSpaceOnUse" x1="1018" x2="1659" y1="0" y2="0"><stop offset="0.000" stop-color="#009e08"/><stop offset="0.215" stop-color="#079e00"/><stop offset="0.334" stop-color="#929e00"/><stop offset="0.359" stop-color="#9e8700"/><stop offset="0.449" stop-color="#9e4400"/><stop offset="0.655" stop-color="#9e0f00"/><stop offset="0.970" stop-color="#9e0000"/><stop offset="0.998" stop-color="#9e0000"/></linearGradient><linearGradient id="o7" gradientUnits="userSpaceOnUse" x1="1018" x2="1659" y1="0" y2="0"><stop offset="0.000" stop-color="#009e0b"/><stop offset="0.215" stop-color="#069e00"/><stop offset="0.334" stop-color="#939e00"/><stop offset="0.362" stop-color="#9e8300"/><stop offset="0.456" stop-color="#9e4000"/><stop offset="0.671" stop-color="#9e0d00"/><stop offset="0.998" stop-color="#9e0000"/></linearGradient><linearGradient id="o8" gradientUnits="userSpaceOnUse" x1="1018" x2="1659" y1="0" y2="0"><stop offset="0.000" stop-color="#009e0e"/><stop offset="0.215" stop-color="#069e02"/><stop offset="0.331" stop-color="#8f9e00"/><stop offset="0.353" stop-color="#9e8e00"/><stop offset="0.437" stop-color="#9e4800"/><stop offset="0.624" stop-color="#9e1300"/><stop offset="0.920" stop-color="#9e0000"/><stop offset="0.998" stop-color="#9e0000"/></linearGradient><linearGradient id="o9" gradientUnits="userSpaceOnUse" x1="1018" x2="1659" y1="0" y2="0"><stop offset="0.000" stop-color="#009e11"/><stop offset="0.218" stop-color="#089e06"/><stop offset="0.334" stop-color="#949e00"/><stop offset="0.374" stop-color="#9e7400"/><stop offset="0.480" stop-color="#9e3500"/><stop offset="0.736" stop-color="#9e0500"/><stop offset="0.998" stop-color="#9e0000"/></linearGradient><linearGradient id="o10" gradientUnits="userSpaceOnUse" x1="1018" x2="1659" y1="0" y2="0"><stop offset="0.000" stop-color="#009e14"/><stop offset="0.218" stop-color="#079e0a"/><stop offset="0.334" stop-color="#949e00"/><stop offset="0.368" stop-color="#9e7a00"/><stop offset="0.468" stop-color="#9e3900"/><stop offset="0.705" stop-color="#9e0800"/><stop offset="0.998" stop-color="#9e0000"/></linearGradient><linearGradient id="o11" gradientUnits="userSpaceOnUse" x1="1018" x2="1659" y1="0" y2="0"><stop offset="0.000" stop-color="#009e18"/><stop offset="0.218" stop-color="#079e0e"/><stop offset="0.331" stop-color="#909e06"/><stop offset="0.349" stop-color="#9e9004"/><stop offset="0.427" stop-color="#9e4b00"/><stop offset="0.602" stop-color="#9e1500"/><stop offset="0.892" stop-color="#9e0000"/><stop offset="0.998" stop-color="#9e0000"/></linearGradient><linearGradient id="o12" gradientUnits="userSpaceOnUse" x1="1018" x2="1659" y1="0" y2="0"><stop offset="0.000" stop-color="#009e1b"/><stop offset="0.218" stop-color="#069e13"/><stop offset="0.331" stop-color="#919e0b"/><stop offset="0.353" stop-color="#9e8b08"/><stop offset="0.434" stop-color="#9e4700"/><stop offset="0.618" stop-color="#9e1200"/><stop offset="0.905" stop-color="#9e0000"/><stop offset="0.998" stop-color="#9e0000"/></linearGradient><linearGradient id="o13" gradientUnits="userSpaceOnUse" x1="1018" x2="1659" y1="0" y2="0"><stop offset="0.000" stop-color="#009e1e"/><stop offset="0.222" stop-color="#089e17"/><stop offset="0.331" stop-color="#919e11"/><stop offset="0.353" stop-color="#9e8a0d"/><stop offset="0.434" stop-color="#9e4603"/><stop offset="0.618" stop-color="#9e1200"/><stop offset="0.902" stop-color="#9e0000"/><stop offset="0.998" stop-color="#9e0000"/></linearGradient><linearGradient id="o14" gradientUnits="userSpaceOnUse" x1="1018" x2="1659" y1="0" y2="0"><stop offset="0.000" stop-color="#009e21"/><stop offset="0.222" stop-color="#089e1b"/><stop offset="0.331" stop-color="#929e16"/><stop offset="0.356" stop-color="#9e8512"/><stop offset="0.440" stop-color="#9e4306"/><stop offset="0.633" stop-color="#9e0f00"/><stop offset="0.930" stop-color="#9e0000"/><stop offset="0.998" stop-color="#9e0000"/></linearGradient><linearGradient id="o15" gradientUnits="userSpaceOnUse" x1="1018" x2="1659" y1="0" y2="0"><stop offset="0.000" stop-color="#009e25"/><stop offset="0.222" stop-color="#079e20"/><stop offset="0.331" stop-color="#929e1c"/><stop offset="0.359" stop-color="#9e8116"/><stop offset="0.446" stop-color="#9e3f08"/><stop offset="0.649" stop-color="#9e0c00"/><stop offset="0.989" stop-color="#9e0000"/><stop offset="0.998" stop-color="#9e0000"/></linearGradient><linearGradient id="o16" gradientUnits="userSpaceOnUse" x1="1018" x2="1659" y1="0" y2="0"><stop offset="0.000" stop-color="#009e28"/><stop offset="0.222" stop-color="#069e25"/><stop offset="0.331" stop-color="#939e22"/><stop offset="0.359" stop-color="#9e801b"/><stop offset="0.446" stop-color="#9e3e0b"/><stop offset="0.649" stop-color="#9e0c00"/><stop offset="0.998" stop-color="#9e0000"/></linearGradient><linearGradient id="o17" gradientUnits="userSpaceOnUse" x1="1018" x2="1659" y1="0" y2="0"><stop offset="0.000" stop-color="#009e2b"/><stop offset="0.222" stop-color="#059e2a"/><stop offset="0.328" stop-color="#8e9e28"/><stop offset="0.346" stop-color="#9e9024"/><stop offset="0.421" stop-color="#9e4b12"/><stop offset="0.587" stop-color="#9e1504"/><stop offset="0.861" stop-color="#9e0000"/><stop offset="0.998" stop-color="#9e0000"/></linearGradient><linearGradient id="o18" gradientUnits="userSpaceOnUse" x1="1018" x2="1659" y1="0" y2="0"><stop offset="0.000" stop-color="#009e2f"/><stop offset="0.225" stop-color="#089e2e"/><stop offset="0.331" stop-color="#949e2e"/><stop offset="0.362" stop-color="#9e7b24"/><stop offset="0.452" stop-color="#9e3a11"/><stop offset="0.668" stop-color="#9e0802"/><stop offset="0.998" stop-color="#9e0000"/></linearGradient><linearGradient id="o19" gradientUnits="userSpaceOnUse" x1="1018" x2="1659" y1="0" y2="0"><stop offset="0.000" stop-color="#009e32"/><stop offset="0.225" stop-color="#079e33"/><stop offset="0.328" stop-color="#909e34"/><stop offset="0.346" stop-color="#9e8e2f"/><stop offset="0.421" stop-color="#9e4919"/><stop offset="0.587" stop-color="#9e1407"/><stop offset="0.855" stop-color="#9e0000"/><stop offset="0.998" stop-color="#9e0000"/></linearGradient><linearGradient id="o20" gradientUnits="userSpaceOnUse" x1="1018" x2="1659" y1="0" y2="0"><stop offset="0.000" stop-color="#009e36"/><stop offset="0.225" stop-color="#079e38"/><stop offset="0.328" stop-color="#909e3b"/><stop offset="0.349" stop-color="#9e8933"/><stop offset="0.427" stop-color="#9e451b"/><stop offset="0.602" stop-color="#9e1108"/><stop offset="0.871" stop-color="#9e0000"/><stop offset="0.998" stop-color="#9e0000"/></linearGradient><linearGradient id="o21" gradientUnits="userSpaceOnUse" x1="1018" x2="1659" y1="0" y2="0"><stop offset="0.000" stop-color="#009e39"/><stop offset="0.225" stop-color="#069e3e"/><stop offset="0.328" stop-color="#919e41"/><stop offset="0.349" stop-color="#9e8839"/><stop offset="0.427" stop-color="#9e441e"/><stop offset="0.602" stop-color="#9e100a"/><stop offset="0.871" stop-color="#9e0000"/><stop offset="0.998" stop-color="#9e0000"/></linearGradient><linearGradient id="o22" gradientUnits="userSpaceOnUse" x1="1018" x2="1659" y1="0" y2="0"><stop offset="0.000" stop-color="#009e3d"/><stop offset="0.225" stop-color="#059e43"/><stop offset="0.328" stop-color="#919e48"/><stop offset="0.353" stop-color="#9e833d"/><stop offset="0.434" stop-color="#9e4020"/><stop offset="0.621" stop-color="#9e0d0b"/><stop offset="0.920" stop-color="#9e0000"/><stop offset="0.998" stop-color="#9e0000"/></linearGradient><linearGradient id="o23" gradientUnits="userSpaceOnUse" x1="1018" x2="1659" y1="0" y2="0"><stop offset="0.000" stop-color="#009e41"/><stop offset="0.228" stop-color="#089e48"/><stop offset="0.328" stop-color="#929e4e"/><stop offset="0.353" stop-color="#9e8242"/><stop offset="0.434" stop-color="#9e3f24"/><stop offset="0.621" stop-color="#9e0c0d"/><stop offset="0.933" stop-color="#9e0001"/><stop offset="0.998" stop-color="#9e0000"/></linearGradient><linearGradient id="o24" gradientUnits="userSpaceOnUse" x1="1018" x2="1659" y1="0" y2="0"><stop offset="0.000" stop-color="#009e44"/><stop offset="0.228" stop-color="#079e4e"/><stop offset="0.328" stop-color="#939e55"/><stop offset="0.349" stop-color="#9e864a"/><stop offset="0.424" stop-color="#9e432a"/><stop offset="0.596" stop-color="#9e1010"/><stop offset="0.858" stop-color="#9e0004"/><stop offset="0.998" stop-color="#9e0001"/></linearGradient><linearGradient id="o25" gradientUnits="userSpaceOnUse" x1="1018" x2="1659" y1="0" y2="0"><stop offset="0.000" stop-color="#009e48"/><stop offset="0.228" stop-color="#069e53"/><stop offset="0.324" stop-color="#8e9e5c"/><stop offset="0.340" stop-color="#9e9357"/><stop offset="0.406" stop-color="#9e4e33"/><stop offset="0.549" stop-color="#9e1817"/><stop offset="0.805" stop-color="#9e0007"/><stop offset="0.998" stop-color="#9e0002"/></linearGradient><linearGradient id="o26" gradientUnits="userSpaceOnUse" x1="1018" x2="1659" y1="0" y2="0"><stop offset="0.000" stop-color="#009e4c"/><stop offset="0.228" stop-color="#059e59"/><stop offset="0.324" stop-color="#8e9e63"/><stop offset="0.343" stop-color="#9e8d5b"/><stop offset="0.412" stop-color="#9e4935"/><stop offset="0.565" stop-color="#9e1417"/><stop offset="0.814" stop-color="#9e0008"/><stop offset="0.998" stop-color="#9e0002"/></linearGradient><linearGradient id="o27" gradientUnits="userSpaceOnUse" x1="1018" x2="1659" y1="0" y2="0"><stop offset="0.000" stop-color="#009e50"/><stop offset="0.231" stop-color="#089e5f"/><stop offset="0.328" stop-color="#959e6b"/><stop offset="0.368" stop-color="#9e6c4e"/><stop offset="0.465" stop-color="#9e2e29"/><stop offset="0.708" stop-color="#9e000e"/><stop offset="0.998" stop-color="#9e0003"/></linearGradient><linearGradient id="o28" gradientUnits="userSpaceOnUse" x1="1018" x2="1659" y1="0" y2="0"><stop offset="0.000" stop-color="#009e54"/><stop offset="0.231" stop-color="#079e65"/><stop offset="0.324" stop-color="#909e72"/><stop offset="0.343" stop-color="#9e8b68"/><stop offset="0.412" stop-color="#9e483d"/><stop offset="0.565" stop-color="#9e131b"/><stop offset="0.808" stop-color="#9e000a"/><stop offset="0.998" stop-color="#9e0004"/></linearGradient><linearGradient id="o29" gradientUnits="userSpaceOnUse" x1="1018" x2="1659" y1="0" y2="0"><stop offset="0.000" stop-color="#009e58"/><stop offset="0.231" stop-color="#079e6b"/><stop offset="0.324" stop-color="#909e7a"/><stop offset="0.346" stop-color="#9e866b"/><stop offset="0.418" stop-color="#9e433e"/><stop offset="0.583" stop-color="#9e0f1b"/><stop offset="0.836" stop-color="#9e000a"/><stop offset="0.998" stop-color="#9e0005"/></linearGradient><linearGradient id="o30" gradientUnits="userSpaceOnUse" x1="1018" x2="1659" y1="0" y2="0"><stop offset="0.000" stop-color="#009e5c"/><stop offset="0.231" stop-color="#069e71"/><stop offset="0.324" stop-color="#919e82"/><stop offset="0.343" stop-color="#9e8a75"/><stop offset="0.412" stop-color="#9e4645"/><stop offset="0.568" stop-color="#9e111f"/><stop offset="0.808" stop-color="#9e000d"/><stop offset="0.998" stop-color="#9e0006"/></linearGradient><linearGradient id="o31" gradientUnits="userSpaceOnUse" x1="1018" x2="1659" y1="0" y2="0"><stop offset="0.000" stop-color="#009e60"/><stop offset="0.231" stop-color="#059e78"/><stop offset="0.324" stop-color="#929e8a"/><stop offset="0.343" stop-color="#9e897c"/><stop offset="0.412" stop-color="#9e4549"/><stop offset="0.568" stop-color="#9e1121"/><stop offset="0.808" stop-color="#9e000e"/><stop offset="0.998" stop-color="#9e0007"/></linearGradient><linearGradient id="o32" gradientUnits="userSpaceOnUse" x1="1018" x2="1659" y1="0" y2="0"><stop offset="0.000" stop-color="#009e64"/><stop offset="0.234" stop-color="#089e7f"/><stop offset="0.324" stop-color="#929e92"/><stop offset="0.343" stop-color="#9e8882"/><stop offset="0.412" stop-color="#9e444d"/><stop offset="0.568" stop-color="#9e1023"/><stop offset="0.805" stop-color="#9e000f"/><stop offset="0.998" stop-color="#9e0008"/></linearGradient><linearGradient id="o33" gradientUnits="userSpaceOnUse" x1="1018" x2="1659" y1="0" y2="0"><stop offset="0.000" stop-color="#009e68"/><stop offset="0.234" stop-color="#079e85"/><stop offset="0.324" stop-color="#939e9b"/><stop offset="0.346" stop-color="#9e8285"/><stop offset="0.418" stop-color="#9e404e"/><stop offset="0.583" stop-color="#9e0d23"/><stop offset="0.849" stop-color="#9e000e"/><stop offset="0.998" stop-color="#9e0009"/></linearGradient><linearGradient id="o34" gradientUnits="userSpaceOnUse" x1="1018" x2="1659" y1="0" y2="0"><stop offset="0.000" stop-color="#009e6c"/><stop offset="0.234" stop-color="#069e8c"/><stop offset="0.334" stop-color="#9e969e"/><stop offset="0.393" stop-color="#9e4f60"/><stop offset="0.521" stop-color="#9e1930"/><stop offset="0.752" stop-color="#9e0015"/><stop offset="0.998" stop-color="#9e000a"/></linearGradient><linearGradient id="o35" gradientUnits="userSpaceOnUse" x1="1018" x2="1659" y1="0" y2="0"><stop offset="0.000" stop-color="#009e71"/><stop offset="0.234" stop-color="#059e93"/><stop offset="0.337" stop-color="#9b8d9e"/><stop offset="0.406" stop-color="#9e465d"/><stop offset="0.552" stop-color="#9e112c"/><stop offset="0.780" stop-color="#9e0014"/><stop offset="0.998" stop-color="#9e000b"/></linearGradient><linearGradient id="o36" gradientUnits="userSpaceOnUse" x1="1018" x2="1659" y1="0" y2="0"><stop offset="0.000" stop-color="#009e75"/><stop offset="0.237" stop-color="#089e9b"/><stop offset="0.346" stop-color="#9e7f9a"/><stop offset="0.418" stop-color="#9e3d5a"/><stop offset="0.583" stop-color="#9e0b29"/><stop offset="0.899" stop-color="#9e000f"/><stop offset="0.998" stop-color="#9e000b"/></linearGradient><linearGradient id="o37" gradientUnits="userSpaceOnUse" x1="1018" x2="1659" y1="0" y2="0"><stop offset="0.000" stop-color="#009e79"/><stop offset="0.237" stop-color="#079a9e"/><stop offset="0.353" stop-color="#9e7598"/><stop offset="0.427" stop-color="#9e3759"/><stop offset="0.608" stop-color="#9e0727"/><stop offset="0.998" stop-color="#9e000c"/></linearGradient><linearGradient id="o38" gradientUnits="userSpaceOnUse" x1="1018" x2="1659" y1="0" y2="0"><stop offset="0.000" stop-color="#009e7e"/><stop offset="0.231" stop-color="#00959e"/><stop offset="0.359" stop-color="#9e6c96"/><stop offset="0.440" stop-color="#9e3056"/><stop offset="0.637" stop-color="#9e0326"/><stop offset="0.998" stop-color="#9e000d"/></linearGradient><linearGradient id="o39" gradientUnits="userSpaceOnUse" x1="1018" x2="1659" y1="0" y2="0"><stop offset="0.000" stop-color="#009e82"/><stop offset="0.209" stop-color="#00949e"/><stop offset="0.243" stop-color="#0c8c9e"/><stop offset="0.362" stop-color="#9e6898"/><stop offset="0.443" stop-color="#9e2e58"/><stop offset="0.637" stop-color="#9e0227"/><stop offset="0.998" stop-color="#9e000e"/></linearGradient><linearGradient id="o40" gradientUnits="userSpaceOnUse" x1="1018" x2="1659" y1="0" y2="0"><stop offset="0.000" stop-color="#009e87"/><stop offset="0.184" stop-color="#00949e"/><stop offset="0.240" stop-color="#07869e"/><stop offset="0.368" stop-color="#9e6096"/><stop offset="0.452" stop-color="#9e2957"/><stop offset="0.655" stop-color="#9e0027"/><stop offset="0.998" stop-color="#9e000f"/></linearGradient><linearGradient id="o41" gradientUnits="userSpaceOnUse" x1="1018" x2="1659" y1="0" y2="0"><stop offset="0.000" stop-color="#009e8c"/><stop offset="0.165" stop-color="#00929e"/><stop offset="0.240" stop-color="#06819e"/><stop offset="0.371" stop-color="#9e5c99"/><stop offset="0.459" stop-color="#9e2658"/><stop offset="0.668" stop-color="#9e0027"/><stop offset="0.998" stop-color="#9e0010"/></linearGradient><linearGradient id="o42" gradientUnits="userSpaceOnUse" x1="1018" x2="1659" y1="0" y2="0"><stop offset="0.000" stop-color="#009e90"/><stop offset="0.156" stop-color="#008f9e"/><stop offset="0.243" stop-color="#097b9e"/><stop offset="0.378" stop-color="#9e5597"/><stop offset="0.468" stop-color="#9e2257"/><stop offset="0.680" stop-color="#9e0027"/><stop offset="0.998" stop-color="#9e0011"/></linearGradient><linearGradient id="o43" gradientUnits="userSpaceOnUse" x1="1018" x2="1659" y1="0" y2="0"><stop offset="0.000" stop-color="#009e95"/><stop offset="0.206" stop-color="#007f9e"/><stop offset="0.246" stop-color="#0b759e"/><stop offset="0.381" stop-color="#9e5199"/><stop offset="0.471" stop-color="#9e2059"/><stop offset="0.680" stop-color="#9e0029"/><stop offset="0.998" stop-color="#9e0012"/></linearGradient><linearGradient id="o44" gradientUnits="userSpaceOnUse" x1="1018" x2="1659" y1="0" y2="0"><stop offset="0.000" stop-color="#009e9a"/><stop offset="0.243" stop-color="#07719e"/><stop offset="0.387" stop-color="#9e4a97"/><stop offset="0.484" stop-color="#9e1b57"/><stop offset="0.690" stop-color="#9e0029"/><stop offset="0.998" stop-color="#9e0013"/></linearGradient><linearGradient id="o45" gradientUnits="userSpaceOnUse" x1="1018" x2="1659" y1="0" y2="0"><stop offset="0.000" stop-color="#009d9e"/><stop offset="0.243" stop-color="#066d9e"/><stop offset="0.393" stop-color="#9e4596"/><stop offset="0.493" stop-color="#9e1856"/><stop offset="0.693" stop-color="#9e002a"/><stop offset="0.998" stop-color="#9e0014"/></linearGradient><linearGradient id="o46" gradientUnits="userSpaceOnUse" x1="1018" x2="1659" y1="0" y2="0"><stop offset="0.000" stop-color="#00999e"/><stop offset="0.246" stop-color="#08689e"/><stop offset="0.396" stop-color="#9e4198"/><stop offset="0.496" stop-color="#9e1658"/><stop offset="0.693" stop-color="#9e002c"/><stop offset="0.998" stop-color="#9e0015"/></linearGradient><linearGradient id="o47" gradientUnits="userSpaceOnUse" x1="1018" x2="1659" y1="0" y2="0"><stop offset="0.000" stop-color="#00949e"/><stop offset="0.246" stop-color="#07649e"/><stop offset="0.402" stop-color="#9e3c96"/><stop offset="0.505" stop-color="#9e1357"/><stop offset="0.696" stop-color="#9e002d"/><stop offset="0.998" stop-color="#9e0016"/></linearGradient><linearGradient id="o48" gradientUnits="userSpaceOnUse" x1="1018" x2="1659" y1="0" y2="0"><stop offset="0.000" stop-color="#00909e"/><stop offset="0.246" stop-color="#06619e"/><stop offset="0.406" stop-color="#9e3998"/><stop offset="0.512" stop-color="#9e1157"/><stop offset="0.702" stop-color="#9e002e"/><stop offset="0.998" stop-color="#9e0017"/></linearGradient><linearGradient id="o49" gradientUnits="userSpaceOnUse" x1="1018" x2="1659" y1="0" y2="0"><stop offset="0.000" stop-color="#008b9e"/><stop offset="0.250" stop-color="#085c9e"/><stop offset="0.412" stop-color="#9e3597"/><stop offset="0.521" stop-color="#9e0e57"/><stop offset="0.721" stop-color="#9e002d"/><stop offset="0.998" stop-color="#9e0017"/></linearGradient><linearGradient id="o50" gradientUnits="userSpaceOnUse" x1="1018" x2="1659" y1="0" y2="0"><stop offset="0.000" stop-color="#00879e"/><stop offset="0.250" stop-color="#07599e"/><stop offset="0.415" stop-color="#9e3298"/><stop offset="0.524" stop-color="#9e0d58"/><stop offset="0.733" stop-color="#9e002d"/><stop offset="0.998" stop-color="#9e0018"/></linearGradient><linearGradient id="o51" gradientUnits="userSpaceOnUse" x1="1018" x2="1659" y1="0" y2="0"><stop offset="0.000" stop-color="#00849e"/><stop offset="0.250" stop-color="#06569e"/><stop offset="0.421" stop-color="#9e2d97"/><stop offset="0.537" stop-color="#9e0a57"/><stop offset="0.811" stop-color="#9e0026"/><stop offset="0.998" stop-color="#9e0019"/></linearGradient><linearGradient id="o52" gradientUnits="userSpaceOnUse" x1="1018" x2="1659" y1="0" y2="0"><stop offset="0.000" stop-color="#00809e"/><stop offset="0.253" stop-color="#08529e"/><stop offset="0.427" stop-color="#9e2996"/><stop offset="0.546" stop-color="#9e0756"/><stop offset="0.833" stop-color="#9e0025"/><stop offset="0.998" stop-color="#9e001a"/></linearGradient><linearGradient id="o53" gradientUnits="userSpaceOnUse" x1="1018" x2="1659" y1="0" y2="0"><stop offset="0.000" stop-color="#007c9e"/><stop offset="0.253" stop-color="#074f9e"/><stop offset="0.431" stop-color="#9e2798"/><stop offset="0.549" stop-color="#9e0657"/><stop offset="0.833" stop-color="#9e0027"/><stop offset="0.998" stop-color="#9e001b"/></linearGradient><linearGradient id="o54" gradientUnits="userSpaceOnUse" x1="1018" x2="1659" y1="0" y2="0"><stop offset="0.000" stop-color="#00799e"/><stop offset="0.253" stop-color="#074c9e"/><stop offset="0.437" stop-color="#9e2396"/><stop offset="0.559" stop-color="#9e0457"/><stop offset="0.852" stop-color="#9e0026"/><stop offset="0.998" stop-color="#9e001c"/></linearGradient><linearGradient id="o55" gradientUnits="userSpaceOnUse" x1="1018" x2="1659" y1="0" y2="0"><stop offset="0.000" stop-color="#00769e"/><stop offset="0.256" stop-color="#08499e"/><stop offset="0.440" stop-color="#9e2198"/><stop offset="0.565" stop-color="#9e0257"/><stop offset="0.864" stop-color="#9e0026"/><stop offset="0.998" stop-color="#9e001d"/></linearGradient><linearGradient id="o56" gradientUnits="userSpaceOnUse" x1="1018" x2="1659" y1="0" y2="0"><stop offset="0.000" stop-color="#00729e"/><stop offset="0.256" stop-color="#08479e"/><stop offset="0.446" stop-color="#9e1e97"/><stop offset="0.574" stop-color="#9e0057"/><stop offset="0.883" stop-color="#9e0026"/><stop offset="0.998" stop-color="#9e001e"/></linearGradient><linearGradient id="o57" gradientUnits="userSpaceOnUse" x1="1018" x2="1659" y1="0" y2="0"><stop offset="0.000" stop-color="#006f9e"/><stop offset="0.256" stop-color="#07449e"/><stop offset="0.452" stop-color="#9e1b96"/><stop offset="0.583" stop-color="#9e0056"/><stop offset="0.902" stop-color="#9e0026"/><stop offset="0.998" stop-color="#9e001f"/></linearGradient><linearGradient id="o58" gradientUnits="userSpaceOnUse" x1="1018" x2="1659" y1="0" y2="0"><stop offset="0.000" stop-color="#006d9e"/><stop offset="0.256" stop-color="#06429e"/><stop offset="0.456" stop-color="#9e1997"/><stop offset="0.590" stop-color="#9e0056"/><stop offset="0.911" stop-color="#9e0026"/><stop offset="0.998" stop-color="#9e0020"/></linearGradient><linearGradient id="o59" gradientUnits="userSpaceOnUse" x1="1018" x2="1659" y1="0" y2="0"><stop offset="0.000" stop-color="#006a9e"/><stop offset="0.259" stop-color="#083f9e"/><stop offset="0.462" stop-color="#9e1696"/><stop offset="0.599" stop-color="#9e0056"/><stop offset="0.930" stop-color="#9e0026"/><stop offset="0.998" stop-color="#9e0021"/></linearGradient><linearGradient id="o60" gradientUnits="userSpaceOnUse" x1="1018" x2="1659" y1="0" y2="0"><stop offset="0.000" stop-color="#00679e"/><stop offset="0.259" stop-color="#073d9e"/><stop offset="0.465" stop-color="#9e1497"/><stop offset="0.602" stop-color="#9e0057"/><stop offset="0.933" stop-color="#9e0026"/><stop offset="0.998" stop-color="#9e0022"/></linearGradient><linearGradient id="o61" gradientUnits="userSpaceOnUse" x1="1018" x2="1659" y1="0" y2="0"><stop offset="0.000" stop-color="#00649e"/><stop offset="0.259" stop-color="#063b9e"/><stop offset="0.471" stop-color="#9e1196"/><stop offset="0.612" stop-color="#9e0057"/><stop offset="0.952" stop-color="#9e0026"/><stop offset="0.998" stop-color="#9e0023"/></linearGradient><linearGradient id="o62" gradientUnits="userSpaceOnUse" x1="1018" x2="1659" y1="0" y2="0"><stop offset="0.000" stop-color="#00629e"/><stop offset="0.262" stop-color="#08389e"/><stop offset="0.474" stop-color="#9e0f98"/><stop offset="0.618" stop-color="#9e0057"/><stop offset="0.961" stop-color="#9e0026"/><stop offset="0.998" stop-color="#9e0024"/></linearGradient><linearGradient id="o63" gradientUnits="userSpaceOnUse" x1="1018" x2="1659" y1="0" y2="0"><stop offset="0.000" stop-color="#005f9e"/><stop offset="0.262" stop-color="#07369e"/><stop offset="0.480" stop-color="#9e0d97"/><stop offset="0.627" stop-color="#9e0057"/><stop offset="0.980" stop-color="#9e0026"/><stop offset="0.998" stop-color="#9e0025"/></linearGradient><linearGradient id="o64" gradientUnits="userSpaceOnUse" x1="1018" x2="1659" y1="0" y2="0"><stop offset="0.000" stop-color="#005d9e"/><stop offset="0.262" stop-color="#07349e"/><stop offset="0.487" stop-color="#9e0a96"/><stop offset="0.637" stop-color="#9e0056"/><stop offset="0.998" stop-color="#9e0026"/></linearGradient><linearGradient id="o65" gradientUnits="userSpaceOnUse" x1="1018" x2="1659" y1="0" y2="0"><stop offset="0.000" stop-color="#005b9e"/><stop offset="0.265" stop-color="#08329e"/><stop offset="0.490" stop-color="#9e0997"/><stop offset="0.643" stop-color="#9e0056"/><stop offset="0.998" stop-color="#9e0027"/></linearGradient><linearGradient id="o66" gradientUnits="userSpaceOnUse" x1="1018" x2="1659" y1="0" y2="0"><stop offset="0.000" stop-color="#00599e"/><stop offset="0.265" stop-color="#07309e"/><stop offset="0.496" stop-color="#9e0796"/><stop offset="0.652" stop-color="#9e0056"/><stop offset="0.998" stop-color="#9e0028"/></linearGradient><linearGradient id="o67" gradientUnits="userSpaceOnUse" x1="1018" x2="1659" y1="0" y2="0"><stop offset="0.000" stop-color="#00569e"/><stop offset="0.265" stop-color="#072f9e"/><stop offset="0.499" stop-color="#9e0597"/><stop offset="0.655" stop-color="#9e0057"/><stop offset="0.998" stop-color="#9e0029"/></linearGradient><linearGradient id="o68" gradientUnits="userSpaceOnUse" x1="1018" x2="1659" y1="0" y2="0"><stop offset="0.000" stop-color="#00549e"/><stop offset="0.268" stop-color="#082d9e"/><stop offset="0.505" stop-color="#9e0396"/><stop offset="0.665" stop-color="#9e0057"/><stop offset="0.998" stop-color="#9e002a"/></linearGradient><linearGradient id="o69" gradientUnits="userSpaceOnUse" x1="1018" x2="1659" y1="0" y2="0"><stop offset="0.000" stop-color="#00529e"/><stop offset="0.268" stop-color="#082b9e"/><stop offset="0.509" stop-color="#9e0297"/><stop offset="0.671" stop-color="#9e0057"/><stop offset="0.998" stop-color="#9e002a"/></linearGradient><linearGradient id="o70" gradientUnits="userSpaceOnUse" x1="1018" x2="1659" y1="0" y2="0"><stop offset="0.000" stop-color="#00509e"/><stop offset="0.268" stop-color="#072a9e"/><stop offset="0.515" stop-color="#9e0097"/><stop offset="0.680" stop-color="#9e0056"/><stop offset="0.998" stop-color="#9e002b"/></linearGradient><linearGradient id="o71" gradientUnits="userSpaceOnUse" x1="1018" x2="1659" y1="0" y2="0"><stop offset="0.000" stop-color="#004e9e"/><stop offset="0.271" stop-color="#08289e"/><stop offset="0.521" stop-color="#9e0096"/><stop offset="0.690" stop-color="#9e0056"/><stop offset="0.998" stop-color="#9e002c"/></linearGradient><linearGradient id="o72" gradientUnits="userSpaceOnUse" x1="1018" x2="1659" y1="0" y2="0"><stop offset="0.000" stop-color="#004d9e"/><stop offset="0.271" stop-color="#08269e"/><stop offset="0.524" stop-color="#9e0097"/><stop offset="0.696" stop-color="#9e0056"/><stop offset="0.998" stop-color="#9e002d"/></linearGradient><linearGradient id="o73" gradientUnits="userSpaceOnUse" x1="1018" x2="1659" y1="0" y2="0"><stop offset="0.000" stop-color="#004b9e"/><stop offset="0.271" stop-color="#07259e"/><stop offset="0.530" stop-color="#9e0096"/><stop offset="0.705" stop-color="#9e0056"/><stop offset="0.998" stop-color="#9e002e"/></linearGradient><linearGradient id="o74" gradientUnits="userSpaceOnUse" x1="1018" x2="1659" y1="0" y2="0"><stop offset="0.000" stop-color="#00499e"/><stop offset="0.275" stop-color="#08239e"/><stop offset="0.534" stop-color="#9e0097"/><stop offset="0.708" stop-color="#9e0057"/><stop offset="0.998" stop-color="#9e002f"/></linearGradient><linearGradient id="o75" gradientUnits="userSpaceOnUse" x1="1018" x2="1659" y1="0" y2="0"><stop offset="0.000" stop-color="#00479e"/><stop offset="0.275" stop-color="#08229e"/><stop offset="0.540" stop-color="#9e0096"/><stop offset="0.718" stop-color="#9e0056"/><stop offset="0.998" stop-color="#9e0030"/></linearGradient><linearGradient id="o76" gradientUnits="userSpaceOnUse" x1="1018" x2="1659" y1="0" y2="0"><stop offset="0.000" stop-color="#00469e"/><stop offset="0.275" stop-color="#07219e"/><stop offset="0.543" stop-color="#9e0097"/><stop offset="0.724" stop-color="#9e0057"/><stop offset="0.998" stop-color="#9e0031"/></linearGradient><linearGradient id="o77" gradientUnits="userSpaceOnUse" x1="1018" x2="1659" y1="0" y2="0"><stop offset="0.000" stop-color="#00449e"/><stop offset="0.278" stop-color="#081f9e"/><stop offset="0.549" stop-color="#9e0096"/><stop offset="0.733" stop-color="#9e0056"/><stop offset="0.998" stop-color="#9e0032"/></linearGradient><linearGradient id="o78" gradientUnits="userSpaceOnUse" x1="1018" x2="1659" y1="0" y2="0"><stop offset="0.000" stop-color="#00439e"/><stop offset="0.278" stop-color="#081e9e"/><stop offset="0.549" stop-color="#9e0099"/><stop offset="0.730" stop-color="#9e0059"/><stop offset="0.998" stop-color="#9e0033"/></linearGradient><linearGradient id="o79" gradientUnits="userSpaceOnUse" x1="1018" x2="1659" y1="0" y2="0"><stop offset="0.000" stop-color="#00419e"/><stop offset="0.278" stop-color="#071d9e"/><stop offset="0.543" stop-color="#9c009e"/><stop offset="0.730" stop-color="#9e005a"/><stop offset="0.998" stop-color="#9e0034"/></linearGradient><linearGradient id="o80" gradientUnits="userSpaceOnUse" x1="1018" x2="1659" y1="0" y2="0"><stop offset="0.000" stop-color="#00409e"/><stop offset="0.281" stop-color="#091b9e"/><stop offset="0.543" stop-color="#9a009e"/><stop offset="0.752" stop-color="#9e0057"/><stop offset="0.998" stop-color="#9e0035"/></linearGradient><linearGradient id="o81" gradientUnits="userSpaceOnUse" x1="1018" x2="1659" y1="0" y2="0"><stop offset="0.000" stop-color="#003e9e"/><stop offset="0.281" stop-color="#081a9e"/><stop offset="0.540" stop-color="#95009e"/><stop offset="0.665" stop-color="#9e006f"/><stop offset="0.980" stop-color="#9e0038"/><stop offset="0.998" stop-color="#9e0036"/></linearGradient><linearGradient id="o82" gradientUnits="userSpaceOnUse" x1="1018" x2="1659" y1="0" y2="0"><stop offset="0.000" stop-color="#003d9e"/><stop offset="0.281" stop-color="#08199e"/><stop offset="0.540" stop-color="#92009e"/><stop offset="0.608" stop-color="#9e0086"/><stop offset="0.846" stop-color="#9e0049"/><stop offset="0.998" stop-color="#9e0037"/></linearGradient><linearGradient id="o83" gradientUnits="userSpaceOnUse" x1="1018" x2="1659" y1="0" y2="0"><stop offset="0.000" stop-color="#003b9e"/><stop offset="0.281" stop-color="#07189e"/><stop offset="0.537" stop-color="#8e009e"/><stop offset="0.590" stop-color="#9e0091"/><stop offset="0.802" stop-color="#9e0052"/><stop offset="0.998" stop-color="#9e0038"/></linearGradient><linearGradient id="o84" gradientUnits="userSpaceOnUse" x1="1018" x2="1659" y1="0" y2="0"><stop offset="0.000" stop-color="#003a9e"/><stop offset="0.284" stop-color="#08179e"/><stop offset="0.537" stop-color="#8c009e"/><stop offset="0.596" stop-color="#9e0090"/><stop offset="0.814" stop-color="#9e0051"/><stop offset="0.998" stop-color="#9e0039"/></linearGradient><linearGradient id="o85" gradientUnits="userSpaceOnUse" x1="1018" x2="1659" y1="0" y2="0"><stop offset="0.000" stop-color="#00399e"/><stop offset="0.284" stop-color="#08169e"/><stop offset="0.534" stop-color="#88009e"/><stop offset="0.596" stop-color="#9e0093"/><stop offset="0.811" stop-color="#9e0053"/><stop offset="0.998" stop-color="#9e003a"/></linearGradient><linearGradient id="o86" gradientUnits="userSpaceOnUse" x1="1018" x2="1659" y1="0" y2="0"><stop offset="0.000" stop-color="#00389e"/><stop offset="0.284" stop-color="#07159e"/><stop offset="0.534" stop-color="#85009e"/><stop offset="0.599" stop-color="#9e0094"/><stop offset="0.814" stop-color="#9e0054"/><stop offset="0.998" stop-color="#9e003b"/></linearGradient><linearGradient id="o87" gradientUnits="userSpaceOnUse" x1="1018" x2="1659" y1="0" y2="0"><stop offset="0.000" stop-color="#00369e"/><stop offset="0.287" stop-color="#08149e"/><stop offset="0.534" stop-color="#83009e"/><stop offset="0.602" stop-color="#9e0094"/><stop offset="0.817" stop-color="#9e0055"/><stop offset="0.998" stop-color="#9e003c"/></linearGradient><linearGradient id="o88" gradientUnits="userSpaceOnUse" x1="1018" x2="1659" y1="0" y2="0"><stop offset="0.000" stop-color="#00359e"/><stop offset="0.287" stop-color="#08139e"/><stop offset="0.534" stop-color="#81009e"/><stop offset="0.608" stop-color="#9e0094"/><stop offset="0.827" stop-color="#9e0054"/><stop offset="0.998" stop-color="#9e003d"/></linearGradient><linearGradient id="o89" gradientUnits="userSpaceOnUse" x1="1018" x2="1659" y1="0" y2="0"><stop offset="0.000" stop-color="#00349e"/><stop offset="0.287" stop-color="#07129e"/><stop offset="0.537" stop-color="#81009e"/><stop offset="0.612" stop-color="#9e0095"/><stop offset="0.833" stop-color="#9e0055"/><stop offset="0.998" stop-color="#9e003e"/></linearGradient><linearGradient id="o90" gradientUnits="userSpaceOnUse" x1="1018" x2="1659" y1="0" y2="0"><stop offset="0.000" stop-color="#00339e"/><stop offset="0.290" stop-color="#08119e"/><stop offset="0.537" stop-color="#7e009e"/><stop offset="0.618" stop-color="#9e0094"/><stop offset="0.842" stop-color="#9e0054"/><stop offset="0.998" stop-color="#9e003f"/></linearGradient><linearGradient id="o91" gradientUnits="userSpaceOnUse" x1="1018" x2="1659" y1="0" y2="0"><stop offset="0.000" stop-color="#00329e"/><stop offset="0.290" stop-color="#08109e"/><stop offset="0.543" stop-color="#80009e"/><stop offset="0.621" stop-color="#9e0095"/><stop offset="0.846" stop-color="#9e0055"/><stop offset="0.998" stop-color="#9e0040"/></linearGradient><linearGradient id="o92" gradientUnits="userSpaceOnUse" x1="1018" x2="1659" y1="0" y2="0"><stop offset="0.000" stop-color="#00319e"/><stop offset="0.290" stop-color="#070f9e"/><stop offset="0.543" stop-color="#7e009e"/><stop offset="0.627" stop-color="#9e0094"/><stop offset="0.858" stop-color="#9e0054"/><stop offset="0.998" stop-color="#9e0041"/></linearGradient><linearGradient id="o93" gradientUnits="userSpaceOnUse" x1="1018" x2="1659" y1="0" y2="0"><stop offset="0.000" stop-color="#002f9e"/><stop offset="0.293" stop-color="#080e9e"/><stop offset="0.555" stop-color="#82009e"/><stop offset="0.633" stop-color="#9e0094"/><stop offset="0.867" stop-color="#9e0054"/><stop offset="0.998" stop-color="#9e0042"/></linearGradient><linearGradient id="o94" gradientUnits="userSpaceOnUse" x1="1018" x2="1659" y1="0" y2="0"><stop offset="0.000" stop-color="#002e9e"/><stop offset="0.293" stop-color="#080d9e"/><stop offset="0.562" stop-color="#83009e"/><stop offset="0.640" stop-color="#9e0093"/><stop offset="0.877" stop-color="#9e0054"/><stop offset="0.998" stop-color="#9e0043"/></linearGradient><linearGradient id="o95" gradientUnits="userSpaceOnUse" x1="1018" x2="1659" y1="0" y2="0"><stop offset="0.000" stop-color="#002d9e"/><stop offset="0.293" stop-color="#080d9e"/><stop offset="0.577" stop-color="#88009e"/><stop offset="0.646" stop-color="#9e0093"/><stop offset="0.889" stop-color="#9e0053"/><stop offset="0.998" stop-color="#9e0044"/></linearGradient><linearGradient id="o96" gradientUnits="userSpaceOnUse" x1="1018" x2="1659" y1="0" y2="0"><stop offset="0.000" stop-color="#002c9e"/><stop offset="0.296" stop-color="#080c9e"/><stop offset="0.602" stop-color="#93009e"/><stop offset="0.680" stop-color="#9e0087"/><stop offset="0.958" stop-color="#9e004a"/><stop offset="0.998" stop-color="#9e0045"/></linearGradient><linearGradient id="o97" gradientUnits="userSpaceOnUse" x1="1018" x2="1659" y1="0" y2="0"><stop offset="0.000" stop-color="#002b9e"/><stop offset="0.296" stop-color="#080b9e"/><stop offset="0.640" stop-color="#9e009a"/><stop offset="0.871" stop-color="#9e0059"/><stop offset="0.998" stop-color="#9e0046"/></linearGradient><linearGradient id="o98" gradientUnits="userSpaceOnUse" x1="1018" x2="1659" y1="0" y2="0"><stop offset="0.000" stop-color="#002a9e"/><stop offset="0.296" stop-color="#080a9e"/><stop offset="0.652" stop-color="#9e0096"/><stop offset="0.892" stop-color="#9e0056"/><stop offset="0.998" stop-color="#9e0048"/></linearGradient><linearGradient id="o99" gradientUnits="userSpaceOnUse" x1="1018" x2="1659" y1="0" y2="0"><stop offset="0.000" stop-color="#00299e"/><stop offset="0.300" stop-color="#09099e"/><stop offset="0.658" stop-color="#9e0096"/><stop offset="0.902" stop-color="#9e0056"/><stop offset="0.998" stop-color="#9e0049"/></linearGradient><linearGradient id="o100" gradientUnits="userSpaceOnUse" x1="1018" x2="1659" y1="0" y2="0"><stop offset="0.000" stop-color="#00299e"/><stop offset="0.300" stop-color="#08099e"/><stop offset="0.661" stop-color="#9e0097"/><stop offset="0.908" stop-color="#9e0056"/><stop offset="0.998" stop-color="#9e004a"/></linearGradient><linearGradient id="o101" gradientUnits="userSpaceOnUse" x1="1018" x2="1659" y1="0" y2="0"><stop offset="0.000" stop-color="#00289e"/><stop offset="0.300" stop-color="#08089e"/><stop offset="0.668" stop-color="#9e0096"/><stop offset="0.917" stop-color="#9e0056"/><stop offset="0.998" stop-color="#9e004b"/></linearGradient><linearGradient id="o102" gradientUnits="userSpaceOnUse" x1="1018" x2="1659" y1="0" y2="0"><stop offset="0.000" stop-color="#00279e"/><stop offset="0.303" stop-color="#09079e"/><stop offset="0.671" stop-color="#9e0097"/><stop offset="0.920" stop-color="#9e0057"/><stop offset="0.998" stop-color="#9e004c"/></linearGradient><linearGradient id="o103" gradientUnits="userSpaceOnUse" x1="1018" x2="1659" y1="0" y2="0"><stop offset="0.000" stop-color="#00269e"/><stop offset="0.303" stop-color="#08079e"/><stop offset="0.677" stop-color="#9e0096"/><stop offset="0.933" stop-color="#9e0056"/><stop offset="0.998" stop-color="#9e004d"/></linearGradient><linearGradient id="o104" gradientUnits="userSpaceOnUse" x1="1018" x2="1659" y1="0" y2="0"><stop offset="0.000" stop-color="#00259e"/><stop offset="0.303" stop-color="#08069e"/><stop offset="0.683" stop-color="#9e0096"/><stop offset="0.942" stop-color="#9e0056"/><stop offset="0.998" stop-color="#9e004e"/></linearGradient><linearGradient id="o105" gradientUnits="userSpaceOnUse" x1="1018" x2="1659" y1="0" y2="0"><stop offset="0.000" stop-color="#00249e"/><stop offset="0.306" stop-color="#09059e"/><stop offset="0.686" stop-color="#9e0096"/><stop offset="0.945" stop-color="#9e0056"/><stop offset="0.998" stop-color="#9e004f"/></linearGradient><linearGradient id="o106" gradientUnits="userSpaceOnUse" x1="1018" x2="1659" y1="0" y2="0"><stop offset="0.000" stop-color="#00239e"/><stop offset="0.306" stop-color="#08049e"/><stop offset="0.693" stop-color="#9e0096"/><stop offset="0.955" stop-color="#9e0056"/><stop offset="0.998" stop-color="#9e0050"/></linearGradient><linearGradient id="o107" gradientUnits="userSpaceOnUse" x1="1018" x2="1659" y1="0" y2="0"><stop offset="0.000" stop-color="#00239e"/><stop offset="0.306" stop-color="#08049e"/><stop offset="0.696" stop-color="#9e0097"/><stop offset="0.961" stop-color="#9e0056"/><stop offset="0.998" stop-color="#9e0051"/></linearGradient><linearGradient id="o108" gradientUnits="userSpaceOnUse" x1="1018" x2="1659" y1="0" y2="0"><stop offset="0.000" stop-color="#00229e"/><stop offset="0.309" stop-color="#09039e"/><stop offset="0.702" stop-color="#9e0096"/><stop offset="0.970" stop-color="#9e0056"/><stop offset="0.998" stop-color="#9e0052"/></linearGradient><linearGradient id="o109" gradientUnits="userSpaceOnUse" x1="1018" x2="1659" y1="0" y2="0"><stop offset="0.000" stop-color="#00219e"/><stop offset="0.309" stop-color="#08039e"/><stop offset="0.705" stop-color="#9e0097"/><stop offset="0.973" stop-color="#9e0057"/><stop offset="0.998" stop-color="#9e0053"/></linearGradient><linearGradient id="o110" gradientUnits="userSpaceOnUse" x1="1018" x2="1659" y1="0" y2="0"><stop offset="0.000" stop-color="#00209e"/><stop offset="0.309" stop-color="#08029e"/><stop offset="0.711" stop-color="#9e0096"/><stop offset="0.986" stop-color="#9e0056"/><stop offset="0.998" stop-color="#9e0054"/></linearGradient><linearGradient id="o111" gradientUnits="userSpaceOnUse" x1="1018" x2="1659" y1="0" y2="0"><stop offset="0.000" stop-color="#001f9e"/><stop offset="0.309" stop-color="#08029e"/><stop offset="0.718" stop-color="#9e0096"/><stop offset="0.995" stop-color="#9e0056"/><stop offset="0.998" stop-color="#9e0055"/></linearGradient><linearGradient id="o112" gradientUnits="userSpaceOnUse" x1="1018" x2="1659" y1="0" y2="0"><stop offset="0.000" stop-color="#001f9e"/><stop offset="0.312" stop-color="#08019e"/><stop offset="0.721" stop-color="#9e0096"/><stop offset="0.998" stop-color="#9e0056"/></linearGradient><linearGradient id="o113" gradientUnits="userSpaceOnUse" x1="1018" x2="1659" y1="0" y2="0"><stop offset="0.000" stop-color="#001e9e"/><stop offset="0.312" stop-color="#08009e"/><stop offset="0.727" stop-color="#9e0096"/><stop offset="0.998" stop-color="#9e0057"/></linearGradient><linearGradient id="o114" gradientUnits="userSpaceOnUse" x1="1018" x2="1659" y1="0" y2="0"><stop offset="0.000" stop-color="#001d9e"/><stop offset="0.312" stop-color="#08009e"/><stop offset="0.730" stop-color="#9e0097"/><stop offset="0.998" stop-color="#9e0058"/></linearGradient><linearGradient id="o115" gradientUnits="userSpaceOnUse" x1="1018" x2="1659" y1="0" y2="0"><stop offset="0.000" stop-color="#001d9e"/><stop offset="0.315" stop-color="#08009e"/><stop offset="0.736" stop-color="#9e0096"/><stop offset="0.998" stop-color="#9e0059"/></linearGradient><linearGradient id="o116" gradientUnits="userSpaceOnUse" x1="1018" x2="1659" y1="0" y2="0"><stop offset="0.000" stop-color="#001c9e"/><stop offset="0.315" stop-color="#08009e"/><stop offset="0.739" stop-color="#9e0097"/><stop offset="0.998" stop-color="#9e005a"/></linearGradient><linearGradient id="o117" gradientUnits="userSpaceOnUse" x1="1018" x2="1659" y1="0" y2="0"><stop offset="0.000" stop-color="#001b9e"/><stop offset="0.315" stop-color="#08009e"/><stop offset="0.746" stop-color="#9e0096"/><stop offset="0.998" stop-color="#9e005c"/></linearGradient><linearGradient id="o118" gradientUnits="userSpaceOnUse" x1="1018" x2="1659" y1="0" y2="0"><stop offset="0.000" stop-color="#001b9e"/><stop offset="0.318" stop-color="#08009e"/><stop offset="0.752" stop-color="#9e0096"/><stop offset="0.998" stop-color="#9e005d"/></linearGradient><linearGradient id="o119" gradientUnits="userSpaceOnUse" x1="1018" x2="1659" y1="0" y2="0"><stop offset="0.000" stop-color="#001a9e"/><stop offset="0.318" stop-color="#08009e"/><stop offset="0.755" stop-color="#9e0096"/><stop offset="0.998" stop-color="#9e005e"/></linearGradient><linearGradient id="o120" gradientUnits="userSpaceOnUse" x1="1018" x2="1659" y1="0" y2="0"><stop offset="0.000" stop-color="#00199e"/><stop offset="0.318" stop-color="#08009e"/><stop offset="0.761" stop-color="#9e0096"/><stop offset="0.998" stop-color="#9e005f"/></linearGradient><linearGradient id="o121" gradientUnits="userSpaceOnUse" x1="1018" x2="1659" y1="0" y2="0"><stop offset="0.000" stop-color="#00199e"/><stop offset="0.321" stop-color="#09009e"/><stop offset="0.764" stop-color="#9e0096"/><stop offset="0.998" stop-color="#9e0060"/></linearGradient><linearGradient id="o122" gradientUnits="userSpaceOnUse" x1="1018" x2="1659" y1="0" y2="0"><stop offset="0.000" stop-color="#00189e"/><stop offset="0.321" stop-color="#08009e"/><stop offset="0.771" stop-color="#9e0096"/><stop offset="0.998" stop-color="#9e0061"/></linearGradient><linearGradient id="o123" gradientUnits="userSpaceOnUse" x1="1018" x2="1659" y1="0" y2="0"><stop offset="0.000" stop-color="#00189e"/><stop offset="0.321" stop-color="#08009e"/><stop offset="0.774" stop-color="#9e0097"/><stop offset="0.998" stop-color="#9e0062"/></linearGradient><linearGradient id="o124" gradientUnits="userSpaceOnUse" x1="1018" x2="1659" y1="0" y2="0"><stop offset="0.000" stop-color="#00179e"/><stop offset="0.324" stop-color="#09009e"/><stop offset="0.780" stop-color="#9e0096"/><stop offset="0.998" stop-color="#9e0063"/></linearGradient><linearGradient id="o125" gradientUnits="userSpaceOnUse" x1="1018" x2="1659" y1="0" y2="0"><stop offset="0.000" stop-color="#00169e"/><stop offset="0.324" stop-color="#08009e"/><stop offset="0.786" stop-color="#9e0096"/><stop offset="0.998" stop-color="#9e0064"/></linearGradient><linearGradient id="o126" gradientUnits="userSpaceOnUse" x1="1018" x2="1659" y1="0" y2="0"><stop offset="0.000" stop-color="#00169e"/><stop offset="0.324" stop-color="#08009e"/><stop offset="0.789" stop-color="#9e0096"/><stop offset="0.998" stop-color="#9e0065"/></linearGradient><linearGradient id="o127" gradientUnits="userSpaceOnUse" x1="1018" x2="1659" y1="0" y2="0"><stop offset="0.000" stop-color="#00159e"/><stop offset="0.328" stop-color="#09009e"/><stop offset="0.796" stop-color="#9e0096"/><stop offset="0.998" stop-color="#9e0066"/></linearGradient><linearGradient id="o128" gradientUnits="userSpaceOnUse" x1="1018" x2="1659" y1="0" y2="0"><stop offset="0.000" stop-color="#00159e"/><stop offset="0.328" stop-color="#08009e"/><stop offset="0.799" stop-color="#9e0096"/><stop offset="0.998" stop-color="#9e0067"/></linearGradient><linearGradient id="o129" gradientUnits="userSpaceOnUse" x1="1018" x2="1659" y1="0" y2="0"><stop offset="0.000" stop-color="#00149e"/><stop offset="0.328" stop-color="#08009e"/><stop offset="0.805" stop-color="#9e0096"/><stop offset="0.998" stop-color="#9e0069"/></linearGradient><linearGradient id="o130" gradientUnits="userSpaceOnUse" x1="1018" x2="1659" y1="0" y2="0"><stop offset="0.000" stop-color="#00149e"/><stop offset="0.331" stop-color="#09009e"/><stop offset="0.808" stop-color="#9e0097"/><stop offset="0.998" stop-color="#9e006a"/></linearGradient><linearGradient id="o131" gradientUnits="userSpaceOnUse" x1="1018" x2="1659" y1="0" y2="0"><stop offset="0.000" stop-color="#00139e"/><stop offset="0.331" stop-color="#08009e"/><stop offset="0.814" stop-color="#9e0096"/><stop offset="0.998" stop-color="#9e006b"/></linearGradient><linearGradient id="o132" gradientUnits="userSpaceOnUse" x1="1018" x2="1659" y1="0" y2="0"><stop offset="0.000" stop-color="#00139e"/><stop offset="0.331" stop-color="#08009e"/><stop offset="0.821" stop-color="#9e0096"/><stop offset="0.998" stop-color="#9e006c"/></linearGradient><linearGradient id="o133" gradientUnits="userSpaceOnUse" x1="1018" x2="1659" y1="0" y2="0"><stop offset="0.000" stop-color="#00129e"/><stop offset="0.334" stop-color="#09009e"/><stop offset="0.824" stop-color="#9e0096"/><stop offset="0.998" stop-color="#9e006d"/></linearGradient><linearGradient id="o134" gradientUnits="userSpaceOnUse" x1="1018" x2="1659" y1="0" y2="0"><stop offset="0.000" stop-color="#00129e"/><stop offset="0.334" stop-color="#08009e"/><stop offset="0.830" stop-color="#9e0096"/><stop offset="0.998" stop-color="#9e006e"/></linearGradient><linearGradient id="o135" gradientUnits="userSpaceOnUse" x1="1018" x2="1659" y1="0" y2="0"><stop offset="0.000" stop-color="#00119e"/><stop offset="0.334" stop-color="#08009e"/><stop offset="0.833" stop-color="#9e0096"/><stop offset="0.998" stop-color="#9e006f"/></linearGradient><linearGradient id="o136" gradientUnits="userSpaceOnUse" x1="1018" x2="1659" y1="0" y2="0"><stop offset="0.000" stop-color="#00119e"/><stop offset="0.337" stop-color="#09009e"/><stop offset="0.839" stop-color="#9e0096"/><stop offset="0.998" stop-color="#9e0070"/></linearGradient><linearGradient id="o137" gradientUnits="userSpaceOnUse" x1="1018" x2="1659" y1="0" y2="0"><stop offset="0.000" stop-color="#00109e"/><stop offset="0.337" stop-color="#08009e"/><stop offset="0.842" stop-color="#9e0097"/><stop offset="0.998" stop-color="#9e0071"/></linearGradient><linearGradient id="o138" gradientUnits="userSpaceOnUse" x1="1018" x2="1659" y1="0" y2="0"><stop offset="0.000" stop-color="#00109e"/><stop offset="0.337" stop-color="#08009e"/><stop offset="0.849" stop-color="#9e0096"/><stop offset="0.998" stop-color="#9e0073"/></linearGradient><linearGradient id="o139" gradientUnits="userSpaceOnUse" x1="1018" x2="1659" y1="0" y2="0"><stop offset="0.000" stop-color="#000f9e"/><stop offset="0.340" stop-color="#09009e"/><stop offset="0.855" stop-color="#9e0096"/><stop offset="0.998" stop-color="#9e0074"/></linearGradient><linearGradient id="o140" gradientUnits="userSpaceOnUse" x1="1018" x2="1659" y1="0" y2="0"><stop offset="0.000" stop-color="#000f9e"/><stop offset="0.340" stop-color="#09009e"/><stop offset="0.858" stop-color="#9e0096"/><stop offset="0.998" stop-color="#9e0075"/></linearGradient><linearGradient id="o141" gradientUnits="userSpaceOnUse" x1="1018" x2="1659" y1="0" y2="0"><stop offset="0.000" stop-color="#000e9e"/><stop offset="0.340" stop-color="#08009e"/><stop offset="0.864" stop-color="#9e0096"/><stop offset="0.998" stop-color="#9e0076"/></linearGradient><linearGradient id="o142" gradientUnits="userSpaceOnUse" x1="1018" x2="1659" y1="0" y2="0"><stop offset="0.000" stop-color="#000e9e"/><stop offset="0.343" stop-color="#09009e"/><stop offset="0.867" stop-color="#9e0096"/><stop offset="0.998" stop-color="#9e0077"/></linearGradient><linearGradient id="o143" gradientUnits="userSpaceOnUse" x1="1018" x2="1659" y1="0" y2="0"><stop offset="0.000" stop-color="#000d9e"/><stop offset="0.343" stop-color="#09009e"/><stop offset="0.874" stop-color="#9e0096"/><stop offset="0.998" stop-color="#9e0078"/></linearGradient><linearGradient id="o144" gradientUnits="userSpaceOnUse" x1="1018" x2="1659" y1="0" y2="0"><stop offset="0.000" stop-color="#000d9e"/><stop offset="0.343" stop-color="#08009e"/><stop offset="0.877" stop-color="#9e0097"/><stop offset="0.998" stop-color="#9e0079"/></linearGradient><linearGradient id="o145" gradientUnits="userSpaceOnUse" x1="1018" x2="1659" y1="0" y2="0"><stop offset="0.000" stop-color="#000c9e"/><stop offset="0.346" stop-color="#09009e"/><stop offset="0.883" stop-color="#9e0096"/><stop offset="0.998" stop-color="#9e007b"/></linearGradient><linearGradient id="o146" gradientUnits="userSpaceOnUse" x1="1018" x2="1659" y1="0" y2="0"><stop offset="0.000" stop-color="#000c9e"/><stop offset="0.346" stop-color="#09009e"/><stop offset="0.889" stop-color="#9e0096"/><stop offset="0.998" stop-color="#9e007c"/></linearGradient><linearGradient id="o147" gradientUnits="userSpaceOnUse" x1="1018" x2="1659" y1="0" y2="0"><stop offset="0.000" stop-color="#000c9e"/><stop offset="0.346" stop-color="#08009e"/><stop offset="0.892" stop-color="#9e0096"/><stop offset="0.998" stop-color="#9e007d"/></linearGradient><linearGradient id="o148" gradientUnits="userSpaceOnUse" x1="1018" x2="1659" y1="0" y2="0"><stop offset="0.000" stop-color="#000b9e"/><stop offset="0.346" stop-color="#08009e"/><stop offset="0.899" stop-color="#9e0096"/><stop offset="0.998" stop-color="#9e007e"/></linearGradient><linearGradient id="o149" gradientUnits="userSpaceOnUse" x1="1018" x2="1659" y1="0" y2="0"><stop offset="0.000" stop-color="#000b9e"/><stop offset="0.349" stop-color="#09009e"/><stop offset="0.902" stop-color="#9e0096"/><stop offset="0.998" stop-color="#9e007f"/></linearGradient><linearGradient id="o150" gradientUnits="userSpaceOnUse" x1="1018" x2="1659" y1="0" y2="0"><stop offset="0.000" stop-color="#000a9e"/><stop offset="0.349" stop-color="#08009e"/><stop offset="0.908" stop-color="#9e0096"/><stop offset="0.998" stop-color="#9e0080"/></linearGradient><linearGradient id="o151" gradientUnits="userSpaceOnUse" x1="1018" x2="1659" y1="0" y2="0"><stop offset="0.000" stop-color="#000a9e"/><stop offset="0.353" stop-color="#09009e"/><stop offset="0.914" stop-color="#9e0096"/><stop offset="0.998" stop-color="#9e0081"/></linearGradient><linearGradient id="o152" gradientUnits="userSpaceOnUse" x1="1018" x2="1659" y1="0" y2="0"><stop offset="0.000" stop-color="#000a9e"/><stop offset="0.353" stop-color="#09009e"/><stop offset="0.917" stop-color="#9e0096"/><stop offset="0.998" stop-color="#9e0083"/></linearGradient><linearGradient id="o153" gradientUnits="userSpaceOnUse" x1="1018" x2="1659" y1="0" y2="0"><stop offset="0.000" stop-color="#00099e"/><stop offset="0.353" stop-color="#08009e"/><stop offset="0.924" stop-color="#9e0096"/><stop offset="0.998" stop-color="#9e0084"/></linearGradient><linearGradient id="o154" gradientUnits="userSpaceOnUse" x1="1018" x2="1659" y1="0" y2="0"><stop offset="0.000" stop-color="#00099e"/><stop offset="0.353" stop-color="#08009e"/><stop offset="0.927" stop-color="#9e0096"/><stop offset="0.998" stop-color="#9e0085"/></linearGradient><linearGradient id="o155" gradientUnits="userSpaceOnUse" x1="1018" x2="1659" y1="0" y2="0"><stop offset="0.000" stop-color="#00089e"/><stop offset="0.356" stop-color="#09009e"/><stop offset="0.933" stop-color="#9e0096"/><stop offset="0.998" stop-color="#9e0086"/></linearGradient><linearGradient id="o156" gradientUnits="userSpaceOnUse" x1="1018" x2="1659" y1="0" y2="0"><stop offset="0.000" stop-color="#00089e"/><stop offset="0.356" stop-color="#08009e"/><stop offset="0.936" stop-color="#9e0096"/><stop offset="0.998" stop-color="#9e0087"/></linearGradient><linearGradient id="o157" gradientUnits="userSpaceOnUse" x1="1018" x2="1659" y1="0" y2="0"><stop offset="0.000" stop-color="#00089e"/><stop offset="0.356" stop-color="#08009e"/><stop offset="0.942" stop-color="#9e0096"/><stop offset="0.998" stop-color="#9e0088"/></linearGradient><linearGradient id="o158" gradientUnits="userSpaceOnUse" x1="1018" x2="1659" y1="0" y2="0"><stop offset="0.000" stop-color="#00079e"/><stop offset="0.359" stop-color="#09009e"/><stop offset="0.949" stop-color="#9e0096"/><stop offset="0.998" stop-color="#9e008a"/></linearGradient><linearGradient id="i0" gradientUnits="userSpaceOnUse" x1="1150" x2="1500" y1="0" y2="0"><stop offset="0.000" stop-color="#00ff00"/><stop offset="0.154" stop-color="#8dff00"/><stop offset="0.251" stop-color="#fffa00"/><stop offset="0.349" stop-color="#ff9f00"/><stop offset="0.520" stop-color="#ff5100"/><stop offset="0.863" stop-color="#ff1300"/><stop offset="1.000" stop-color="#ff0700"/></linearGradient><linearGradient id="i1" gradientUnits="userSpaceOnUse" x1="1150" x2="1500" y1="0" y2="0"><stop offset="0.000" stop-color="#00ff06"/><stop offset="0.143" stop-color="#80ff00"/><stop offset="0.251" stop-color="#fff900"/><stop offset="0.349" stop-color="#ff9e00"/><stop offset="0.520" stop-color="#ff5000"/><stop offset="0.863" stop-color="#ff1300"/><stop offset="1.000" stop-color="#ff0600"/></linearGradient><linearGradient id="i2" gradientUnits="userSpaceOnUse" x1="1150" x2="1500" y1="0" y2="0"><stop offset="0.000" stop-color="#00ff0d"/><stop offset="0.131" stop-color="#74ff04"/><stop offset="0.251" stop-color="#fff800"/><stop offset="0.349" stop-color="#ff9c00"/><stop offset="0.520" stop-color="#ff4f00"/><stop offset="0.869" stop-color="#ff1100"/><stop offset="1.000" stop-color="#ff0500"/></linearGradient><linearGradient id="i3" gradientUnits="userSpaceOnUse" x1="1150" x2="1500" y1="0" y2="0"><stop offset="0.000" stop-color="#00ff13"/><stop offset="0.103" stop-color="#56ff0d"/><stop offset="0.251" stop-color="#fff702"/><stop offset="0.349" stop-color="#ff9b00"/><stop offset="0.520" stop-color="#ff4e00"/><stop offset="0.869" stop-color="#ff1100"/><stop offset="1.000" stop-color="#ff0500"/></linearGradient><linearGradient id="i4" gradientUnits="userSpaceOnUse" x1="1150" x2="1500" y1="0" y2="0"><stop offset="0.000" stop-color="#00ff1a"/><stop offset="0.063" stop-color="#2eff17"/><stop offset="0.223" stop-color="#e1ff0d"/><stop offset="0.251" stop-color="#fff60a"/><stop offset="0.349" stop-color="#ff9a01"/><stop offset="0.520" stop-color="#ff4d00"/><stop offset="0.869" stop-color="#ff1000"/><stop offset="1.000" stop-color="#ff0400"/></linearGradient><linearGradient id="i5" gradientUnits="userSpaceOnUse" x1="1150" x2="1500" y1="0" y2="0"><stop offset="0.000" stop-color="#00ff21"/><stop offset="0.051" stop-color="#23ff1f"/><stop offset="0.211" stop-color="#d3ff16"/><stop offset="0.251" stop-color="#fff513"/><stop offset="0.349" stop-color="#ff9907"/><stop offset="0.520" stop-color="#ff4c00"/><stop offset="0.869" stop-color="#ff0f00"/><stop offset="1.000" stop-color="#ff0400"/></linearGradient><linearGradient id="i6" gradientUnits="userSpaceOnUse" x1="1150" x2="1500" y1="0" y2="0"><stop offset="0.000" stop-color="#00ff28"/><stop offset="0.046" stop-color="#1dff27"/><stop offset="0.206" stop-color="#ccff1f"/><stop offset="0.246" stop-color="#fffb1d"/><stop offset="0.337" stop-color="#ffa00e"/><stop offset="0.497" stop-color="#ff5202"/><stop offset="0.817" stop-color="#ff1400"/><stop offset="1.000" stop-color="#ff0300"/></linearGradient><linearGradient id="i7" gradientUnits="userSpaceOnUse" x1="1150" x2="1500" y1="0" y2="0"><stop offset="0.000" stop-color="#00ff30"/><stop offset="0.040" stop-color="#16ff2e"/><stop offset="0.200" stop-color="#c5ff28"/><stop offset="0.246" stop-color="#fffa26"/><stop offset="0.337" stop-color="#ff9e15"/><stop offset="0.497" stop-color="#ff5106"/><stop offset="0.817" stop-color="#ff1400"/><stop offset="1.000" stop-color="#ff0200"/></linearGradient><linearGradient id="i8" gradientUnits="userSpaceOnUse" x1="1150" x2="1500" y1="0" y2="0"><stop offset="0.000" stop-color="#00ff37"/><stop offset="0.034" stop-color="#10ff36"/><stop offset="0.194" stop-color="#beff32"/><stop offset="0.246" stop-color="#fff92f"/><stop offset="0.337" stop-color="#ff9d1b"/><stop offset="0.497" stop-color="#ff500b"/><stop offset="0.823" stop-color="#ff1200"/><stop offset="1.000" stop-color="#ff0200"/></linearGradient><linearGradient id="i9" gradientUnits="userSpaceOnUse" x1="1150" x2="1500" y1="0" y2="0"><stop offset="0.000" stop-color="#00ff3e"/><stop offset="0.034" stop-color="#0fff3e"/><stop offset="0.194" stop-color="#beff3b"/><stop offset="0.246" stop-color="#fff838"/><stop offset="0.337" stop-color="#ff9c22"/><stop offset="0.497" stop-color="#ff4f0f"/><stop offset="0.823" stop-color="#ff1100"/><stop offset="1.000" stop-color="#ff0100"/></linearGradient><linearGradient id="i10" gradientUnits="userSpaceOnUse" x1="1150" x2="1500" y1="0" y2="0"><stop offset="0.000" stop-color="#00ff46"/><stop offset="0.034" stop-color="#0eff46"/><stop offset="0.194" stop-color="#bfff44"/><stop offset="0.246" stop-color="#fff741"/><stop offset="0.337" stop-color="#ff9b28"/><stop offset="0.497" stop-color="#ff4e13"/><stop offset="0.823" stop-color="#ff1102"/><stop offset="1.000" stop-color="#ff0000"/></linearGradient><linearGradient id="i11" gradientUnits="userSpaceOnUse" x1="1150" x2="1500" y1="0" y2="0"><stop offset="0.000" stop-color="#00ff4d"/><stop offset="0.034" stop-color="#0dff4d"/><stop offset="0.189" stop-color="#b8ff4e"/><stop offset="0.246" stop-color="#fff54b"/><stop offset="0.337" stop-color="#ff992f"/><stop offset="0.497" stop-color="#ff4d18"/><stop offset="0.823" stop-color="#ff1005"/><stop offset="1.000" stop-color="#ff0000"/></linearGradient><linearGradient id="i12" gradientUnits="userSpaceOnUse" x1="1150" x2="1500" y1="0" y2="0"><stop offset="0.000" stop-color="#00ff55"/><stop offset="0.034" stop-color="#0bff56"/><stop offset="0.189" stop-color="#b8ff57"/><stop offset="0.240" stop-color="#fffc57"/><stop offset="0.326" stop-color="#ffa038"/><stop offset="0.474" stop-color="#ff541e"/><stop offset="0.771" stop-color="#ff150a"/><stop offset="1.000" stop-color="#ff0002"/></linearGradient><linearGradient id="i13" gradientUnits="userSpaceOnUse" x1="1150" x2="1500" y1="0" y2="0"><stop offset="0.000" stop-color="#00ff5d"/><stop offset="0.034" stop-color="#0aff5e"/><stop offset="0.189" stop-color="#b9ff61"/><stop offset="0.240" stop-color="#fffb61"/><stop offset="0.326" stop-color="#ff9f3f"/><stop offset="0.474" stop-color="#ff5223"/><stop offset="0.771" stop-color="#ff140c"/><stop offset="1.000" stop-color="#ff0004"/></linearGradient><linearGradient id="i14" gradientUnits="userSpaceOnUse" x1="1150" x2="1500" y1="0" y2="0"><stop offset="0.000" stop-color="#00ff65"/><stop offset="0.034" stop-color="#09ff66"/><stop offset="0.189" stop-color="#b9ff6b"/><stop offset="0.240" stop-color="#fffa6b"/><stop offset="0.326" stop-color="#ff9e46"/><stop offset="0.474" stop-color="#ff5128"/><stop offset="0.777" stop-color="#ff130f"/><stop offset="1.000" stop-color="#ff0006"/></linearGradient><linearGradient id="i15" gradientUnits="userSpaceOnUse" x1="1150" x2="1500" y1="0" y2="0"><stop offset="0.000" stop-color="#00ff6d"/><stop offset="0.040" stop-color="#0dff6f"/><stop offset="0.189" stop-color="#b9ff75"/><stop offset="0.240" stop-color="#fff975"/><stop offset="0.326" stop-color="#ff9c4d"/><stop offset="0.474" stop-color="#ff502c"/><stop offset="0.777" stop-color="#ff1212"/><stop offset="1.000" stop-color="#ff0008"/></linearGradient><linearGradient id="i16" gradientUnits="userSpaceOnUse" x1="1150" x2="1500" y1="0" y2="0"><stop offset="0.000" stop-color="#00ff76"/><stop offset="0.040" stop-color="#0cff78"/><stop offset="0.189" stop-color="#baff80"/><stop offset="0.240" stop-color="#fff780"/><stop offset="0.326" stop-color="#ff9b55"/><stop offset="0.474" stop-color="#ff4f31"/><stop offset="0.777" stop-color="#ff1114"/><stop offset="1.000" stop-color="#ff000b"/></linearGradient><linearGradient id="i17" gradientUnits="userSpaceOnUse" x1="1150" x2="1500" y1="0" y2="0"><stop offset="0.000" stop-color="#00ff7e"/><stop offset="0.040" stop-color="#0bff81"/><stop offset="0.189" stop-color="#baff8b"/><stop offset="0.240" stop-color="#fff68a"/><stop offset="0.326" stop-color="#ff9a5c"/><stop offset="0.474" stop-color="#ff4e36"/><stop offset="0.777" stop-color="#ff1117"/><stop offset="1.000" stop-color="#ff000d"/></linearGradient><linearGradient id="i18" gradientUnits="userSpaceOnUse" x1="1150" x2="1500" y1="0" y2="0"><stop offset="0.000" stop-color="#00ff87"/><stop offset="0.040" stop-color="#09ff8a"/><stop offset="0.183" stop-color="#b3ff95"/><stop offset="0.234" stop-color="#fffe9a"/><stop offset="0.314" stop-color="#ffa268"/><stop offset="0.457" stop-color="#ff533e"/><stop offset="0.743" stop-color="#ff141c"/><stop offset="1.000" stop-color="#ff000f"/></linearGradient><linearGradient id="i19" gradientUnits="userSpaceOnUse" x1="1150" x2="1500" y1="0" y2="0"><stop offset="0.000" stop-color="#00ff90"/><stop offset="0.040" stop-color="#08ff93"/><stop offset="0.183" stop-color="#b3ffa0"/><stop offset="0.234" stop-color="#fffca5"/><stop offset="0.314" stop-color="#ffa070"/><stop offset="0.457" stop-color="#ff5243"/><stop offset="0.743" stop-color="#ff131f"/><stop offset="1.000" stop-color="#ff0011"/></linearGradient><linearGradient id="i20" gradientUnits="userSpaceOnUse" x1="1150" x2="1500" y1="0" y2="0"><stop offset="0.000" stop-color="#00ff99"/><stop offset="0.040" stop-color="#07ff9c"/><stop offset="0.183" stop-color="#b3ffac"/><stop offset="0.234" stop-color="#fffbb0"/><stop offset="0.314" stop-color="#ff9f78"/><stop offset="0.451" stop-color="#ff5349"/><stop offset="0.731" stop-color="#ff1423"/><stop offset="1.000" stop-color="#ff0013"/></linearGradient><linearGradient id="i21" gradientUnits="userSpaceOnUse" x1="1150" x2="1500" y1="0" y2="0"><stop offset="0.000" stop-color="#00ffa2"/><stop offset="0.040" stop-color="#06ffa6"/><stop offset="0.183" stop-color="#b4ffb7"/><stop offset="0.234" stop-color="#fffabb"/><stop offset="0.314" stop-color="#ff9d7f"/><stop offset="0.451" stop-color="#ff514e"/><stop offset="0.731" stop-color="#ff1326"/><stop offset="1.000" stop-color="#ff0015"/></linearGradient><linearGradient id="i22" gradientUnits="userSpaceOnUse" x1="1150" x2="1500" y1="0" y2="0"><stop offset="0.000" stop-color="#00ffab"/><stop offset="0.046" stop-color="#0affb0"/><stop offset="0.183" stop-color="#b4ffc3"/><stop offset="0.234" stop-color="#fff8c7"/><stop offset="0.314" stop-color="#ff9c87"/><stop offset="0.451" stop-color="#ff5053"/><stop offset="0.731" stop-color="#ff1229"/><stop offset="1.000" stop-color="#ff0017"/></linearGradient><linearGradient id="i23" gradientUnits="userSpaceOnUse" x1="1150" x2="1500" y1="0" y2="0"><stop offset="0.000" stop-color="#00ffb5"/><stop offset="0.046" stop-color="#09ffba"/><stop offset="0.183" stop-color="#b4ffcf"/><stop offset="0.234" stop-color="#fff7d3"/><stop offset="0.314" stop-color="#ff9a8f"/><stop offset="0.451" stop-color="#ff4f59"/><stop offset="0.731" stop-color="#ff112c"/><stop offset="1.000" stop-color="#ff0019"/></linearGradient><linearGradient id="i24" gradientUnits="userSpaceOnUse" x1="1150" x2="1500" y1="0" y2="0"><stop offset="0.000" stop-color="#00ffbe"/><stop offset="0.046" stop-color="#07ffc5"/><stop offset="0.183" stop-color="#b5ffdc"/><stop offset="0.229" stop-color="#ffffe6"/><stop offset="0.303" stop-color="#ffa39f"/><stop offset="0.434" stop-color="#ff5463"/><stop offset="0.697" stop-color="#ff1533"/><stop offset="1.000" stop-color="#ff001c"/></linearGradient><linearGradient id="i25" gradientUnits="userSpaceOnUse" x1="1150" x2="1500" y1="0" y2="0"><stop offset="0.000" stop-color="#00ffc8"/><stop offset="0.046" stop-color="#06ffcf"/><stop offset="0.183" stop-color="#b5ffe9"/><stop offset="0.229" stop-color="#fffef2"/><stop offset="0.303" stop-color="#ffa1a8"/><stop offset="0.434" stop-color="#ff5368"/><stop offset="0.697" stop-color="#ff1436"/><stop offset="0.994" stop-color="#ff001e"/><stop offset="1.000" stop-color="#ff001e"/></linearGradient><linearGradient id="i26" gradientUnits="userSpaceOnUse" x1="1150" x2="1500" y1="0" y2="0"><stop offset="0.000" stop-color="#00ffd2"/><stop offset="0.046" stop-color="#05ffda"/><stop offset="0.177" stop-color="#adfff4"/><stop offset="0.229" stop-color="#fffcff"/><stop offset="0.303" stop-color="#ffa0b0"/><stop offset="0.434" stop-color="#ff526e"/><stop offset="0.697" stop-color="#ff1339"/><stop offset="0.989" stop-color="#ff0021"/><stop offset="1.000" stop-color="#ff0020"/></linearGradient><linearGradient id="i27" gradientUnits="userSpaceOnUse" x1="1150" x2="1500" y1="0" y2="0"><stop offset="0.000" stop-color="#00ffdd"/><stop offset="0.051" stop-color="#09ffe6"/><stop offset="0.206" stop-color="#d3f5ff"/><stop offset="0.240" stop-color="#ffe8fb"/><stop offset="0.320" stop-color="#ff90ac"/><stop offset="0.463" stop-color="#ff466a"/><stop offset="0.760" stop-color="#ff0a35"/><stop offset="1.000" stop-color="#ff0022"/></linearGradient><linearGradient id="i28" gradientUnits="userSpaceOnUse" x1="1150" x2="1500" y1="0" y2="0"><stop offset="0.000" stop-color="#00ffe7"/><stop offset="0.051" stop-color="#08fff1"/><stop offset="0.177" stop-color="#a3f0ff"/><stop offset="0.251" stop-color="#ffd6f8"/><stop offset="0.337" stop-color="#ff82a9"/><stop offset="0.497" stop-color="#ff3a65"/><stop offset="0.840" stop-color="#ff0130"/><stop offset="1.000" stop-color="#ff0024"/></linearGradient><linearGradient id="i29" gradientUnits="userSpaceOnUse" x1="1150" x2="1500" y1="0" y2="0"><stop offset="0.000" stop-color="#00fff2"/><stop offset="0.051" stop-color="#06fffc"/><stop offset="0.257" stop-color="#ffcdfc"/><stop offset="0.349" stop-color="#ff79a9"/><stop offset="0.520" stop-color="#ff3264"/><stop offset="0.863" stop-color="#ff0031"/><stop offset="1.000" stop-color="#ff0026"/></linearGradient><linearGradient id="i30" gradientUnits="userSpaceOnUse" x1="1150" x2="1500" y1="0" y2="0"><stop offset="0.000" stop-color="#00fffd"/><stop offset="0.051" stop-color="#05f6ff"/><stop offset="0.269" stop-color="#ffbdf8"/><stop offset="0.366" stop-color="#ff6da6"/><stop offset="0.549" stop-color="#ff2a61"/><stop offset="0.880" stop-color="#ff0032"/><stop offset="1.000" stop-color="#ff0029"/></linearGradient><linearGradient id="i31" gradientUnits="userSpaceOnUse" x1="1150" x2="1500" y1="0" y2="0"><stop offset="0.000" stop-color="#00f7ff"/><stop offset="0.057" stop-color="#09eaff"/><stop offset="0.274" stop-color="#ffb4fc"/><stop offset="0.371" stop-color="#ff68a9"/><stop offset="0.554" stop-color="#ff2864"/><stop offset="0.880" stop-color="#ff0034"/><stop offset="1.000" stop-color="#ff002b"/></linearGradient><linearGradient id="i32" gradientUnits="userSpaceOnUse" x1="1150" x2="1500" y1="0" y2="0"><stop offset="0.000" stop-color="#00ecff"/><stop offset="0.057" stop-color="#07e0ff"/><stop offset="0.286" stop-color="#ffa7f9"/><stop offset="0.389" stop-color="#ff5ea6"/><stop offset="0.583" stop-color="#ff2162"/><stop offset="0.891" stop-color="#ff0036"/><stop offset="1.000" stop-color="#ff002d"/></linearGradient><linearGradient id="i33" gradientUnits="userSpaceOnUse" x1="1150" x2="1500" y1="0" y2="0"><stop offset="0.000" stop-color="#00e3ff"/><stop offset="0.057" stop-color="#06d7ff"/><stop offset="0.291" stop-color="#ff9ffc"/><stop offset="0.400" stop-color="#ff57a7"/><stop offset="0.600" stop-color="#ff1c62"/><stop offset="0.891" stop-color="#ff0038"/><stop offset="1.000" stop-color="#ff002f"/></linearGradient><linearGradient id="i34" gradientUnits="userSpaceOnUse" x1="1150" x2="1500" y1="0" y2="0"><stop offset="0.000" stop-color="#00daff"/><stop offset="0.057" stop-color="#04ceff"/><stop offset="0.303" stop-color="#ff93f9"/><stop offset="0.417" stop-color="#ff4ea4"/><stop offset="0.629" stop-color="#ff1660"/><stop offset="0.897" stop-color="#ff003a"/><stop offset="1.000" stop-color="#ff0031"/></linearGradient><linearGradient id="i35" gradientUnits="userSpaceOnUse" x1="1150" x2="1500" y1="0" y2="0"><stop offset="0.000" stop-color="#00d2ff"/><stop offset="0.063" stop-color="#08c5ff"/><stop offset="0.309" stop-color="#ff8cfd"/><stop offset="0.423" stop-color="#ff4aa7"/><stop offset="0.634" stop-color="#ff1462"/><stop offset="0.897" stop-color="#ff003d"/><stop offset="1.000" stop-color="#ff0034"/></linearGradient><linearGradient id="i36" gradientUnits="userSpaceOnUse" x1="1150" x2="1500" y1="0" y2="0"><stop offset="0.000" stop-color="#00caff"/><stop offset="0.063" stop-color="#07bdff"/><stop offset="0.320" stop-color="#ff82fa"/><stop offset="0.440" stop-color="#ff42a5"/><stop offset="0.663" stop-color="#ff0f60"/><stop offset="0.931" stop-color="#ff003c"/><stop offset="1.000" stop-color="#ff0036"/></linearGradient><linearGradient id="i37" gradientUnits="userSpaceOnUse" x1="1150" x2="1500" y1="0" y2="0"><stop offset="0.000" stop-color="#00c2ff"/><stop offset="0.063" stop-color="#05b6ff"/><stop offset="0.331" stop-color="#ff78f7"/><stop offset="0.457" stop-color="#ff3ba3"/><stop offset="0.691" stop-color="#ff0a5e"/><stop offset="1.000" stop-color="#ff0038"/></linearGradient><linearGradient id="i38" gradientUnits="userSpaceOnUse" x1="1150" x2="1500" y1="0" y2="0"><stop offset="0.000" stop-color="#00bbff"/><stop offset="0.069" stop-color="#09aeff"/><stop offset="0.337" stop-color="#ff72fa"/><stop offset="0.463" stop-color="#ff38a5"/><stop offset="0.697" stop-color="#ff0861"/><stop offset="1.000" stop-color="#ff003a"/></linearGradient><linearGradient id="i39" gradientUnits="userSpaceOnUse" x1="1150" x2="1500" y1="0" y2="0"><stop offset="0.000" stop-color="#00b4ff"/><stop offset="0.069" stop-color="#08a7ff"/><stop offset="0.349" stop-color="#ff69f8"/><stop offset="0.480" stop-color="#ff31a3"/><stop offset="0.726" stop-color="#ff045f"/><stop offset="1.000" stop-color="#ff003d"/></linearGradient><linearGradient id="i40" gradientUnits="userSpaceOnUse" x1="1150" x2="1500" y1="0" y2="0"><stop offset="0.000" stop-color="#00aeff"/><stop offset="0.069" stop-color="#06a1ff"/><stop offset="0.354" stop-color="#ff64fa"/><stop offset="0.486" stop-color="#ff2ea6"/><stop offset="0.731" stop-color="#ff0261"/><stop offset="1.000" stop-color="#ff003f"/></linearGradient><linearGradient id="i41" gradientUnits="userSpaceOnUse" x1="1150" x2="1500" y1="0" y2="0"><stop offset="0.000" stop-color="#00a7ff"/><stop offset="0.074" stop-color="#099aff"/><stop offset="0.366" stop-color="#ff5cf8"/><stop offset="0.503" stop-color="#ff28a4"/><stop offset="0.760" stop-color="#ff005f"/><stop offset="1.000" stop-color="#ff0041"/></linearGradient><linearGradient id="i42" gradientUnits="userSpaceOnUse" x1="1150" x2="1500" y1="0" y2="0"><stop offset="0.000" stop-color="#00a2ff"/><stop offset="0.074" stop-color="#0894ff"/><stop offset="0.371" stop-color="#ff57fb"/><stop offset="0.509" stop-color="#ff26a7"/><stop offset="0.766" stop-color="#ff0061"/><stop offset="1.000" stop-color="#ff0043"/></linearGradient><linearGradient id="i43" gradientUnits="userSpaceOnUse" x1="1150" x2="1500" y1="0" y2="0"><stop offset="0.000" stop-color="#009cff"/><stop offset="0.074" stop-color="#078fff"/><stop offset="0.383" stop-color="#ff50f8"/><stop offset="0.526" stop-color="#ff20a4"/><stop offset="0.789" stop-color="#ff0061"/><stop offset="1.000" stop-color="#ff0046"/></linearGradient><linearGradient id="i44" gradientUnits="userSpaceOnUse" x1="1150" x2="1500" y1="0" y2="0"><stop offset="0.000" stop-color="#0097ff"/><stop offset="0.080" stop-color="#0a89ff"/><stop offset="0.389" stop-color="#ff4bfb"/><stop offset="0.531" stop-color="#ff1ea7"/><stop offset="0.783" stop-color="#ff0065"/><stop offset="1.000" stop-color="#ff0048"/></linearGradient><linearGradient id="i45" gradientUnits="userSpaceOnUse" x1="1150" x2="1500" y1="0" y2="0"><stop offset="0.000" stop-color="#0092ff"/><stop offset="0.080" stop-color="#0984ff"/><stop offset="0.400" stop-color="#ff45f9"/><stop offset="0.549" stop-color="#ff19a5"/><stop offset="0.783" stop-color="#ff0068"/><stop offset="1.000" stop-color="#ff004a"/></linearGradient><linearGradient id="i46" gradientUnits="userSpaceOnUse" x1="1150" x2="1500" y1="0" y2="0"><stop offset="0.000" stop-color="#008dff"/><stop offset="0.080" stop-color="#087fff"/><stop offset="0.406" stop-color="#ff41fb"/><stop offset="0.554" stop-color="#ff16a7"/><stop offset="0.783" stop-color="#ff006b"/><stop offset="1.000" stop-color="#ff004d"/></linearGradient><linearGradient id="i47" gradientUnits="userSpaceOnUse" x1="1150" x2="1500" y1="0" y2="0"><stop offset="0.000" stop-color="#0088ff"/><stop offset="0.080" stop-color="#067bff"/><stop offset="0.417" stop-color="#ff3bf9"/><stop offset="0.571" stop-color="#ff12a6"/><stop offset="0.789" stop-color="#ff006d"/><stop offset="1.000" stop-color="#ff004f"/></linearGradient><linearGradient id="i48" gradientUnits="userSpaceOnUse" x1="1150" x2="1500" y1="0" y2="0"><stop offset="0.000" stop-color="#0084ff"/><stop offset="0.086" stop-color="#0976ff"/><stop offset="0.429" stop-color="#ff35f7"/><stop offset="0.589" stop-color="#ff0ea4"/><stop offset="0.817" stop-color="#ff006b"/><stop offset="1.000" stop-color="#ff0051"/></linearGradient><linearGradient id="i49" gradientUnits="userSpaceOnUse" x1="1150" x2="1500" y1="0" y2="0"><stop offset="0.000" stop-color="#007fff"/><stop offset="0.086" stop-color="#0871ff"/><stop offset="0.434" stop-color="#ff31f9"/><stop offset="0.594" stop-color="#ff0ca6"/><stop offset="0.863" stop-color="#ff0066"/><stop offset="1.000" stop-color="#ff0054"/></linearGradient><linearGradient id="i50" gradientUnits="userSpaceOnUse" x1="1150" x2="1500" y1="0" y2="0"><stop offset="0.000" stop-color="#007bff"/><stop offset="0.086" stop-color="#076eff"/><stop offset="0.446" stop-color="#ff2cf7"/><stop offset="0.611" stop-color="#ff08a4"/><stop offset="0.926" stop-color="#ff005f"/><stop offset="1.000" stop-color="#ff0056"/></linearGradient><linearGradient id="i51" gradientUnits="userSpaceOnUse" x1="1150" x2="1500" y1="0" y2="0"><stop offset="0.000" stop-color="#0077ff"/><stop offset="0.091" stop-color="#0a69ff"/><stop offset="0.451" stop-color="#ff29fa"/><stop offset="0.623" stop-color="#ff05a4"/><stop offset="0.943" stop-color="#ff0060"/><stop offset="1.000" stop-color="#ff0058"/></linearGradient><linearGradient id="i52" gradientUnits="userSpaceOnUse" x1="1150" x2="1500" y1="0" y2="0"><stop offset="0.000" stop-color="#0074ff"/><stop offset="0.091" stop-color="#0965ff"/><stop offset="0.463" stop-color="#ff24f8"/><stop offset="0.634" stop-color="#ff02a5"/><stop offset="0.960" stop-color="#ff0060"/><stop offset="1.000" stop-color="#ff005b"/></linearGradient><linearGradient id="i53" gradientUnits="userSpaceOnUse" x1="1150" x2="1500" y1="0" y2="0"><stop offset="0.000" stop-color="#0070ff"/><stop offset="0.091" stop-color="#0862ff"/><stop offset="0.469" stop-color="#ff21fa"/><stop offset="0.646" stop-color="#ff00a5"/><stop offset="0.977" stop-color="#ff0060"/><stop offset="1.000" stop-color="#ff005d"/></linearGradient><linearGradient id="i54" gradientUnits="userSpaceOnUse" x1="1150" x2="1500" y1="0" y2="0"><stop offset="0.000" stop-color="#006cff"/><stop offset="0.091" stop-color="#075fff"/><stop offset="0.480" stop-color="#ff1cf8"/><stop offset="0.663" stop-color="#ff00a3"/><stop offset="1.000" stop-color="#ff005f"/></linearGradient><linearGradient id="i55" gradientUnits="userSpaceOnUse" x1="1150" x2="1500" y1="0" y2="0"><stop offset="0.000" stop-color="#0069ff"/><stop offset="0.097" stop-color="#095aff"/><stop offset="0.486" stop-color="#ff1afa"/><stop offset="0.669" stop-color="#ff00a5"/><stop offset="1.000" stop-color="#ff0062"/></linearGradient><linearGradient id="i56" gradientUnits="userSpaceOnUse" x1="1150" x2="1500" y1="0" y2="0"><stop offset="0.000" stop-color="#0066ff"/><stop offset="0.097" stop-color="#0857ff"/><stop offset="0.497" stop-color="#ff15f8"/><stop offset="0.686" stop-color="#ff00a4"/><stop offset="1.000" stop-color="#ff0064"/></linearGradient><linearGradient id="i57" gradientUnits="userSpaceOnUse" x1="1150" x2="1500" y1="0" y2="0"><stop offset="0.000" stop-color="#0063ff"/><stop offset="0.097" stop-color="#0754ff"/><stop offset="0.509" stop-color="#ff12f7"/><stop offset="0.697" stop-color="#ff00a4"/><stop offset="1.000" stop-color="#ff0066"/></linearGradient><linearGradient id="i58" gradientUnits="userSpaceOnUse" x1="1150" x2="1500" y1="0" y2="0"><stop offset="0.000" stop-color="#0060ff"/><stop offset="0.103" stop-color="#0951ff"/><stop offset="0.514" stop-color="#ff0ff9"/><stop offset="0.703" stop-color="#ff00a6"/><stop offset="1.000" stop-color="#ff0069"/></linearGradient><linearGradient id="i59" gradientUnits="userSpaceOnUse" x1="1150" x2="1500" y1="0" y2="0"><stop offset="0.000" stop-color="#005dff"/><stop offset="0.103" stop-color="#094eff"/><stop offset="0.526" stop-color="#ff0bf7"/><stop offset="0.726" stop-color="#ff00a3"/><stop offset="1.000" stop-color="#ff006b"/></linearGradient><linearGradient id="i60" gradientUnits="userSpaceOnUse" x1="1150" x2="1500" y1="0" y2="0"><stop offset="0.000" stop-color="#005aff"/><stop offset="0.103" stop-color="#084bff"/><stop offset="0.531" stop-color="#ff09f9"/><stop offset="0.731" stop-color="#ff00a5"/><stop offset="1.000" stop-color="#ff006e"/></linearGradient><linearGradient id="i61" gradientUnits="userSpaceOnUse" x1="1150" x2="1500" y1="0" y2="0"><stop offset="0.000" stop-color="#0057ff"/><stop offset="0.109" stop-color="#0a48ff"/><stop offset="0.543" stop-color="#ff05f7"/><stop offset="0.749" stop-color="#ff00a3"/><stop offset="1.000" stop-color="#ff0070"/></linearGradient><linearGradient id="i62" gradientUnits="userSpaceOnUse" x1="1150" x2="1500" y1="0" y2="0"><stop offset="0.000" stop-color="#0054ff"/><stop offset="0.109" stop-color="#0946ff"/><stop offset="0.549" stop-color="#ff03f9"/><stop offset="0.754" stop-color="#ff00a5"/><stop offset="1.000" stop-color="#ff0072"/></linearGradient><linearGradient id="i63" gradientUnits="userSpaceOnUse" x1="1150" x2="1500" y1="0" y2="0"><stop offset="0.000" stop-color="#0052ff"/><stop offset="0.109" stop-color="#0843ff"/><stop offset="0.560" stop-color="#ff00f8"/><stop offset="0.771" stop-color="#ff00a4"/><stop offset="1.000" stop-color="#ff0075"/></linearGradient><linearGradient id="i64" gradientUnits="userSpaceOnUse" x1="1150" x2="1500" y1="0" y2="0"><stop offset="0.000" stop-color="#004fff"/><stop offset="0.109" stop-color="#0741ff"/><stop offset="0.566" stop-color="#ff00fa"/><stop offset="0.777" stop-color="#ff00a5"/><stop offset="1.000" stop-color="#ff0077"/></linearGradient><linearGradient id="i65" gradientUnits="userSpaceOnUse" x1="1150" x2="1500" y1="0" y2="0"><stop offset="0.000" stop-color="#004dff"/><stop offset="0.114" stop-color="#093eff"/><stop offset="0.577" stop-color="#ff00f8"/><stop offset="0.794" stop-color="#ff00a4"/><stop offset="1.000" stop-color="#ff007a"/></linearGradient><linearGradient id="i66" gradientUnits="userSpaceOnUse" x1="1150" x2="1500" y1="0" y2="0"><stop offset="0.000" stop-color="#004bff"/><stop offset="0.114" stop-color="#083cff"/><stop offset="0.583" stop-color="#ff00fa"/><stop offset="0.800" stop-color="#ff00a6"/><stop offset="1.000" stop-color="#ff007c"/></linearGradient><linearGradient id="i67" gradientUnits="userSpaceOnUse" x1="1150" x2="1500" y1="0" y2="0"><stop offset="0.000" stop-color="#0048ff"/><stop offset="0.114" stop-color="#083aff"/><stop offset="0.589" stop-color="#ff00fb"/><stop offset="0.811" stop-color="#ff00a6"/><stop offset="1.000" stop-color="#ff007f"/></linearGradient><linearGradient id="i68" gradientUnits="userSpaceOnUse" x1="1150" x2="1500" y1="0" y2="0"><stop offset="0.000" stop-color="#0046ff"/><stop offset="0.120" stop-color="#0a37ff"/><stop offset="0.583" stop-color="#fa00ff"/><stop offset="0.840" stop-color="#ff00a2"/><stop offset="1.000" stop-color="#ff0081"/></linearGradient><linearGradient id="i69" gradientUnits="userSpaceOnUse" x1="1150" x2="1500" y1="0" y2="0"><stop offset="0.000" stop-color="#0044ff"/><stop offset="0.120" stop-color="#0935ff"/><stop offset="0.577" stop-color="#f300ff"/><stop offset="0.640" stop-color="#ff00ea"/><stop offset="0.891" stop-color="#ff0099"/><stop offset="1.000" stop-color="#ff0083"/></linearGradient><linearGradient id="i70" gradientUnits="userSpaceOnUse" x1="1150" x2="1500" y1="0" y2="0"><stop offset="0.000" stop-color="#0042ff"/><stop offset="0.120" stop-color="#0833ff"/><stop offset="0.571" stop-color="#eb00ff"/><stop offset="0.634" stop-color="#ff00f1"/><stop offset="0.880" stop-color="#ff009e"/><stop offset="1.000" stop-color="#ff0086"/></linearGradient><linearGradient id="i71" gradientUnits="userSpaceOnUse" x1="1150" x2="1500" y1="0" y2="0"><stop offset="0.000" stop-color="#0040ff"/><stop offset="0.120" stop-color="#0731ff"/><stop offset="0.560" stop-color="#e100ff"/><stop offset="0.634" stop-color="#ff00f6"/><stop offset="0.874" stop-color="#ff00a2"/><stop offset="1.000" stop-color="#ff0088"/></linearGradient><linearGradient id="i72" gradientUnits="userSpaceOnUse" x1="1150" x2="1500" y1="0" y2="0"><stop offset="0.000" stop-color="#003eff"/><stop offset="0.126" stop-color="#092fff"/><stop offset="0.554" stop-color="#da00ff"/><stop offset="0.640" stop-color="#ff00f7"/><stop offset="0.880" stop-color="#ff00a4"/><stop offset="1.000" stop-color="#ff008b"/></linearGradient><linearGradient id="i73" gradientUnits="userSpaceOnUse" x1="1150" x2="1500" y1="0" y2="0"><stop offset="0.000" stop-color="#003cff"/><stop offset="0.126" stop-color="#082dff"/><stop offset="0.549" stop-color="#d300ff"/><stop offset="0.651" stop-color="#ff00f6"/><stop offset="0.897" stop-color="#ff00a3"/><stop offset="1.000" stop-color="#ff008d"/></linearGradient><linearGradient id="i74" gradientUnits="userSpaceOnUse" x1="1150" x2="1500" y1="0" y2="0"><stop offset="0.000" stop-color="#003aff"/><stop offset="0.126" stop-color="#082bff"/><stop offset="0.543" stop-color="#cc00ff"/><stop offset="0.657" stop-color="#ff00f8"/><stop offset="0.909" stop-color="#ff00a3"/><stop offset="1.000" stop-color="#ff0090"/></linearGradient><linearGradient id="i75" gradientUnits="userSpaceOnUse" x1="1150" x2="1500" y1="0" y2="0"><stop offset="0.000" stop-color="#0038ff"/><stop offset="0.131" stop-color="#0929ff"/><stop offset="0.537" stop-color="#c600ff"/><stop offset="0.669" stop-color="#ff00f6"/><stop offset="0.926" stop-color="#ff00a2"/><stop offset="1.000" stop-color="#ff0092"/></linearGradient><linearGradient id="i76" gradientUnits="userSpaceOnUse" x1="1150" x2="1500" y1="0" y2="0"><stop offset="0.000" stop-color="#0037ff"/><stop offset="0.131" stop-color="#0927ff"/><stop offset="0.531" stop-color="#bf00ff"/><stop offset="0.674" stop-color="#ff00f8"/><stop offset="0.931" stop-color="#ff00a3"/><stop offset="1.000" stop-color="#ff0095"/></linearGradient><linearGradient id="i77" gradientUnits="userSpaceOnUse" x1="1150" x2="1500" y1="0" y2="0"><stop offset="0.000" stop-color="#0035ff"/><stop offset="0.131" stop-color="#0826ff"/><stop offset="0.520" stop-color="#b700ff"/><stop offset="0.686" stop-color="#ff00f7"/><stop offset="0.949" stop-color="#ff00a2"/><stop offset="1.000" stop-color="#ff0097"/></linearGradient><linearGradient id="i78" gradientUnits="userSpaceOnUse" x1="1150" x2="1500" y1="0" y2="0"><stop offset="0.000" stop-color="#0033ff"/><stop offset="0.137" stop-color="#0a24ff"/><stop offset="0.520" stop-color="#b300ff"/><stop offset="0.691" stop-color="#ff00f8"/><stop offset="0.954" stop-color="#ff00a4"/><stop offset="1.000" stop-color="#ff009a"/></linearGradient><linearGradient id="i79" gradientUnits="userSpaceOnUse" x1="1150" x2="1500" y1="0" y2="0"><stop offset="0.000" stop-color="#0032ff"/><stop offset="0.137" stop-color="#0922ff"/><stop offset="0.509" stop-color="#ab00ff"/><stop offset="0.703" stop-color="#ff00f7"/><stop offset="0.971" stop-color="#ff00a3"/><stop offset="1.000" stop-color="#ff009d"/></linearGradient><linearGradient id="i80" gradientUnits="userSpaceOnUse" x1="1150" x2="1500" y1="0" y2="0"><stop offset="0.000" stop-color="#0030ff"/><stop offset="0.137" stop-color="#0821ff"/><stop offset="0.503" stop-color="#a600ff"/><stop offset="0.709" stop-color="#ff00f8"/><stop offset="0.977" stop-color="#ff00a4"/><stop offset="1.000" stop-color="#ff009f"/></linearGradient><linearGradient id="i81" gradientUnits="userSpaceOnUse" x1="1150" x2="1500" y1="0" y2="0"><stop offset="0.000" stop-color="#002eff"/><stop offset="0.137" stop-color="#081fff"/><stop offset="0.497" stop-color="#a000ff"/><stop offset="0.720" stop-color="#ff00f7"/><stop offset="0.994" stop-color="#ff00a3"/><stop offset="1.000" stop-color="#ff00a2"/></linearGradient><linearGradient id="i82" gradientUnits="userSpaceOnUse" x1="1150" x2="1500" y1="0" y2="0"><stop offset="0.000" stop-color="#002dff"/><stop offset="0.143" stop-color="#091dff"/><stop offset="0.491" stop-color="#9b00ff"/><stop offset="0.726" stop-color="#ff00f9"/><stop offset="1.000" stop-color="#ff00a4"/></linearGradient><linearGradient id="i83" gradientUnits="userSpaceOnUse" x1="1150" x2="1500" y1="0" y2="0"><stop offset="0.000" stop-color="#002bff"/><stop offset="0.143" stop-color="#091cff"/><stop offset="0.486" stop-color="#9600ff"/><stop offset="0.737" stop-color="#ff00f7"/><stop offset="1.000" stop-color="#ff00a7"/></linearGradient><linearGradient id="i84" gradientUnits="userSpaceOnUse" x1="1150" x2="1500" y1="0" y2="0"><stop offset="0.000" stop-color="#002aff"/><stop offset="0.143" stop-color="#081bff"/><stop offset="0.480" stop-color="#9100ff"/><stop offset="0.749" stop-color="#ff00f6"/><stop offset="1.000" stop-color="#ff00a9"/></linearGradient><linearGradient id="i85" gradientUnits="userSpaceOnUse" x1="1150" x2="1500" y1="0" y2="0"><stop offset="0.000" stop-color="#0029ff"/><stop offset="0.149" stop-color="#0a19ff"/><stop offset="0.480" stop-color="#8f00ff"/><stop offset="0.754" stop-color="#ff00f8"/><stop offset="1.000" stop-color="#ff00ac"/></linearGradient><linearGradient id="i86" gradientUnits="userSpaceOnUse" x1="1150" x2="1500" y1="0" y2="0"><stop offset="0.000" stop-color="#0027ff"/><stop offset="0.149" stop-color="#0918ff"/><stop offset="0.474" stop-color="#8a00ff"/><stop offset="0.766" stop-color="#ff00f7"/><stop offset="1.000" stop-color="#ff00af"/></linearGradient><linearGradient id="i87" gradientUnits="userSpaceOnUse" x1="1150" x2="1500" y1="0" y2="0"><stop offset="0.000" stop-color="#0026ff"/><stop offset="0.149" stop-color="#0817ff"/><stop offset="0.474" stop-color="#8800ff"/><stop offset="0.771" stop-color="#ff00f8"/><stop offset="1.000" stop-color="#ff00b1"/></linearGradient><linearGradient id="i88" gradientUnits="userSpaceOnUse" x1="1150" x2="1500" y1="0" y2="0"><stop offset="0.000" stop-color="#0025ff"/><stop offset="0.149" stop-color="#0815ff"/><stop offset="0.469" stop-color="#8300ff"/><stop offset="0.783" stop-color="#ff00f7"/><stop offset="1.000" stop-color="#ff00b4"/></linearGradient><linearGradient id="i89" gradientUnits="userSpaceOnUse" x1="1150" x2="1500" y1="0" y2="0"><stop offset="0.000" stop-color="#0023ff"/><stop offset="0.154" stop-color="#0914ff"/><stop offset="0.469" stop-color="#8100ff"/><stop offset="0.789" stop-color="#ff00f8"/><stop offset="1.000" stop-color="#ff00b6"/></linearGradient><linearGradient id="i90" gradientUnits="userSpaceOnUse" x1="1150" x2="1500" y1="0" y2="0"><stop offset="0.000" stop-color="#0022ff"/><stop offset="0.154" stop-color="#0913ff"/><stop offset="0.463" stop-color="#7d00ff"/><stop offset="0.800" stop-color="#ff00f7"/><stop offset="1.000" stop-color="#ff00b9"/></linearGradient><linearGradient id="i91" gradientUnits="userSpaceOnUse" x1="1150" x2="1500" y1="0" y2="0"><stop offset="0.000" stop-color="#0021ff"/><stop offset="0.154" stop-color="#0811ff"/><stop offset="0.469" stop-color="#7d00ff"/><stop offset="0.806" stop-color="#ff00f8"/><stop offset="1.000" stop-color="#ff00bc"/></linearGradient><linearGradient id="i92" gradientUnits="userSpaceOnUse" x1="1150" x2="1500" y1="0" y2="0"><stop offset="0.000" stop-color="#0020ff"/><stop offset="0.160" stop-color="#0910ff"/><stop offset="0.474" stop-color="#7e00ff"/><stop offset="0.817" stop-color="#ff00f7"/><stop offset="1.000" stop-color="#ff00be"/></linearGradient><linearGradient id="i93" gradientUnits="userSpaceOnUse" x1="1150" x2="1500" y1="0" y2="0"><stop offset="0.000" stop-color="#001eff"/><stop offset="0.160" stop-color="#090fff"/><stop offset="0.480" stop-color="#7e00ff"/><stop offset="0.823" stop-color="#ff00f8"/><stop offset="1.000" stop-color="#ff00c1"/></linearGradient><linearGradient id="i94" gradientUnits="userSpaceOnUse" x1="1150" x2="1500" y1="0" y2="0"><stop offset="0.000" stop-color="#001dff"/><stop offset="0.160" stop-color="#080eff"/><stop offset="0.491" stop-color="#8000ff"/><stop offset="0.834" stop-color="#ff00f7"/><stop offset="1.000" stop-color="#ff00c4"/></linearGradient><linearGradient id="i95" gradientUnits="userSpaceOnUse" x1="1150" x2="1500" y1="0" y2="0"><stop offset="0.000" stop-color="#001cff"/><stop offset="0.160" stop-color="#080dff"/><stop offset="0.509" stop-color="#8500ff"/><stop offset="0.840" stop-color="#ff00f9"/><stop offset="1.000" stop-color="#ff00c6"/></linearGradient><linearGradient id="i96" gradientUnits="userSpaceOnUse" x1="1150" x2="1500" y1="0" y2="0"><stop offset="0.000" stop-color="#001bff"/><stop offset="0.166" stop-color="#090bff"/><stop offset="0.571" stop-color="#9a00ff"/><stop offset="0.851" stop-color="#ff00f8"/><stop offset="1.000" stop-color="#ff00c9"/></linearGradient><linearGradient id="i97" gradientUnits="userSpaceOnUse" x1="1150" x2="1500" y1="0" y2="0"><stop offset="0.000" stop-color="#001aff"/><stop offset="0.166" stop-color="#090aff"/><stop offset="0.634" stop-color="#af00ff"/><stop offset="0.863" stop-color="#ff00f7"/><stop offset="1.000" stop-color="#ff00cc"/></linearGradient><linearGradient id="i98" gradientUnits="userSpaceOnUse" x1="1150" x2="1500" y1="0" y2="0"><stop offset="0.000" stop-color="#0019ff"/><stop offset="0.171" stop-color="#0a09ff"/><stop offset="0.869" stop-color="#ff00f8"/><stop offset="1.000" stop-color="#ff00ce"/></linearGradient><linearGradient id="i99" gradientUnits="userSpaceOnUse" x1="1150" x2="1500" y1="0" y2="0"><stop offset="0.000" stop-color="#0018ff"/><stop offset="0.171" stop-color="#0908ff"/><stop offset="0.880" stop-color="#ff00f7"/><stop offset="1.000" stop-color="#ff00d1"/></linearGradient><linearGradient id="i100" gradientUnits="userSpaceOnUse" x1="1150" x2="1500" y1="0" y2="0"><stop offset="0.000" stop-color="#0017ff"/><stop offset="0.171" stop-color="#0907ff"/><stop offset="0.886" stop-color="#ff00f8"/><stop offset="1.000" stop-color="#ff00d4"/></linearGradient><linearGradient id="i101" gradientUnits="userSpaceOnUse" x1="1150" x2="1500" y1="0" y2="0"><stop offset="0.000" stop-color="#0016ff"/><stop offset="0.171" stop-color="#0806ff"/><stop offset="0.897" stop-color="#ff00f7"/><stop offset="1.000" stop-color="#ff00d7"/></linearGradient><linearGradient id="i102" gradientUnits="userSpaceOnUse" x1="1150" x2="1500" y1="0" y2="0"><stop offset="0.000" stop-color="#0015ff"/><stop offset="0.177" stop-color="#0a05ff"/><stop offset="0.903" stop-color="#ff00f8"/><stop offset="1.000" stop-color="#ff00d9"/></linearGradient><linearGradient id="i103" gradientUnits="userSpaceOnUse" x1="1150" x2="1500" y1="0" y2="0"><stop offset="0.000" stop-color="#0014ff"/><stop offset="0.177" stop-color="#0904ff"/><stop offset="0.914" stop-color="#ff00f7"/><stop offset="1.000" stop-color="#ff00dc"/></linearGradient><linearGradient id="i104" gradientUnits="userSpaceOnUse" x1="1150" x2="1500" y1="0" y2="0"><stop offset="0.000" stop-color="#0013ff"/><stop offset="0.177" stop-color="#0903ff"/><stop offset="0.920" stop-color="#ff00f8"/><stop offset="1.000" stop-color="#ff00df"/></linearGradient><linearGradient id="i105" gradientUnits="userSpaceOnUse" x1="1150" x2="1500" y1="0" y2="0"><stop offset="0.000" stop-color="#0012ff"/><stop offset="0.183" stop-color="#0a02ff"/><stop offset="0.931" stop-color="#ff00f7"/><stop offset="1.000" stop-color="#ff00e2"/></linearGradient><linearGradient id="i106" gradientUnits="userSpaceOnUse" x1="1150" x2="1500" y1="0" y2="0"><stop offset="0.000" stop-color="#0011ff"/><stop offset="0.183" stop-color="#0901ff"/><stop offset="0.937" stop-color="#ff00f8"/><stop offset="1.000" stop-color="#ff00e4"/></linearGradient><linearGradient id="i107" gradientUnits="userSpaceOnUse" x1="1150" x2="1500" y1="0" y2="0"><stop offset="0.000" stop-color="#0010ff"/><stop offset="0.183" stop-color="#0901ff"/><stop offset="0.949" stop-color="#ff00f8"/><stop offset="1.000" stop-color="#ff00e7"/></linearGradient><linearGradient id="i108" gradientUnits="userSpaceOnUse" x1="1150" x2="1500" y1="0" y2="0"><stop offset="0.000" stop-color="#000fff"/><stop offset="0.183" stop-color="#0800ff"/><stop offset="0.960" stop-color="#ff00f7"/><stop offset="1.000" stop-color="#ff00ea"/></linearGradient><linearGradient id="i109" gradientUnits="userSpaceOnUse" x1="1150" x2="1500" y1="0" y2="0"><stop offset="0.000" stop-color="#000fff"/><stop offset="0.189" stop-color="#0900ff"/><stop offset="0.966" stop-color="#ff00f8"/><stop offset="1.000" stop-color="#ff00ed"/></linearGradient><linearGradient id="i110" gradientUnits="userSpaceOnUse" x1="1150" x2="1500" y1="0" y2="0"><stop offset="0.000" stop-color="#000eff"/><stop offset="0.189" stop-color="#0900ff"/><stop offset="0.977" stop-color="#ff00f7"/><stop offset="1.000" stop-color="#ff00f0"/></linearGradient><linearGradient id="i111" gradientUnits="userSpaceOnUse" x1="1150" x2="1500" y1="0" y2="0"><stop offset="0.000" stop-color="#000dff"/><stop offset="0.189" stop-color="#0800ff"/><stop offset="0.983" stop-color="#ff00f8"/><stop offset="1.000" stop-color="#ff00f2"/></linearGradient><clipPath id="hs"><path d="M1292.3 570.8 C1292.1 570.9 1292.0 571.4 1291.1 571.4 C1290.3 571.3 1289.1 571.5 1287.4 570.6 C1285.7 569.7 1284.1 568.4 1280.9 565.9 C1277.8 563.4 1274.1 560.1 1268.8 555.7 C1263.4 551.3 1257.3 546.5 1248.9 539.4 C1240.6 532.3 1227.1 520.9 1218.7 513.1 C1210.4 505.3 1206.5 501.5 1198.8 492.7 C1191.0 484.0 1181.9 473.4 1172.3 460.8 C1162.6 448.2 1151.8 433.4 1141.0 417.1 C1130.1 400.7 1118.1 381.5 1107.0 362.7 C1095.9 343.8 1084.0 323.1 1074.3 303.8 C1064.6 284.6 1055.9 264.7 1048.8 247.4 C1041.6 230.0 1035.8 213.6 1031.5 199.7 C1027.1 185.9 1024.4 174.4 1022.5 164.4 C1020.6 154.3 1020.1 146.6 1020.3 139.7 C1020.5 132.8 1021.8 127.4 1023.7 122.8 C1025.7 118.2 1028.6 114.7 1031.9 112.0 C1035.2 109.3 1039.2 107.8 1043.4 106.6 C1047.6 105.3 1052.4 104.9 1057.2 104.5 C1061.9 104.1 1067.1 104.1 1072.1 104.0 C1077.1 104.0 1082.1 104.1 1087.3 104.2 C1092.5 104.4 1097.7 104.6 1103.2 105.0 C1108.7 105.3 1114.3 105.7 1120.3 106.2 C1126.2 106.7 1132.3 107.2 1138.8 107.9 C1145.3 108.5 1152.1 109.2 1159.2 109.9 C1166.4 110.7 1173.9 111.5 1181.9 112.3 C1189.8 113.2 1198.1 114.2 1206.9 115.1 C1215.7 116.1 1224.9 117.2 1234.6 118.3 C1244.3 119.4 1254.4 120.5 1265.0 121.7 C1275.6 123.0 1286.7 124.2 1298.2 125.6 C1309.7 126.9 1321.7 128.3 1334.0 129.7 C1346.3 131.1 1359.1 132.5 1371.9 134.0 C1384.7 135.5 1398.0 137.0 1410.8 138.5 C1423.6 140.0 1436.1 141.4 1448.5 142.8 C1460.9 144.3 1473.6 145.7 1485.3 147.1 C1496.9 148.4 1503.9 149.2 1518.5 150.8 C1533.1 152.5 1557.4 155.3 1572.9 157.1 C1588.4 158.9 1600.4 160.3 1611.5 161.6 C1622.7 162.8 1632.0 163.9 1639.8 164.8 C1647.6 165.7 1651.2 166.1 1658.4 166.9 C1665.6 167.7 1678.7 169.3 1682.8 169.7Z"/></clipPath><clipPath id="tri"><path d="M1498.85 156.31 L1151.94 123.88 L1205.66 455.13Z"/></clipPath><clipPath id="plot"><rect x="1019.3" y="92.9" width="638.8" height="491"/></clipPath></defs><g clip-path="url(#plot)"><g clip-path="url(#hs)"><rect x="1018" y="100" width="641" height="3" fill="url(#o0)"/><rect x="1018" y="103" width="641" height="3" fill="url(#o1)"/><rect x="1018" y="106" width="641" height="3" fill="url(#o2)"/><rect x="1018" y="109" width="641" height="3" fill="url(#o3)"/><rect x="1018" y="112" width="641" height="3" fill="url(#o4)"/><rect x="1018" y="115" width="641" height="3" fill="url(#o5)"/><rect x="1018" y="118" width="641" height="3" fill="url(#o6)"/><rect x="1018" y="121" width="641" height="3" fill="url(#o7)"/><rect x="1018" y="124" width="641" height="3" fill="url(#o8)"/><rect x="1018" y="127" width="641" height="3" fill="url(#o9)"/><rect x="1018" y="130" width="641" height="3" fill="url(#o10)"/><rect x="1018" y="133" width="641" height="3" fill="url(#o11)"/><rect x="1018" y="136" width="641" height="3" fill="url(#o12)"/><rect x="1018" y="139" width="641" height="3" fill="url(#o13)"/><rect x="1018" y="142" width="641" height="3" fill="url(#o14)"/><rect x="1018" y="145" width="641" height="3" fill="url(#o15)"/><rect x="1018" y="148" width="641" height="3" fill="url(#o16)"/><rect x="1018" y="151" width="641" height="3" fill="url(#o17)"/><rect x="1018" y="154" width="641" height="3" fill="url(#o18)"/><rect x="1018" y="157" width="641" height="3" fill="url(#o19)"/><rect x="1018" y="160" width="641" height="3" fill="url(#o20)"/><rect x="1018" y="163" width="641" height="3" fill="url(#o21)"/><rect x="1018" y="166" width="641" height="3" fill="url(#o22)"/><rect x="1018" y="169" width="641" height="3" fill="url(#o23)"/><rect x="1018" y="172" width="641" height="3" fill="url(#o24)"/><rect x="1018" y="175" width="641" height="3" fill="url(#o25)"/><rect x="1018" y="178" width="641" height="3" fill="url(#o26)"/><rect x="1018" y="181" width="641" height="3" fill="url(#o27)"/><rect x="1018" y="184" width="641" height="3" fill="url(#o28)"/><rect x="1018" y="187" width="641" height="3" fill="url(#o29)"/><rect x="1018" y="190" width="641" height="3" fill="url(#o30)"/><rect x="1018" y="193" width="641" height="3" fill="url(#o31)"/><rect x="1018" y="196" width="641" height="3" fill="url(#o32)"/><rect x="1018" y="199" width="641" height="3" fill="url(#o33)"/><rect x="1018" y="202" width="641" height="3" fill="url(#o34)"/><rect x="1018" y="205" width="641" height="3" fill="url(#o35)"/><rect x="1018" y="208" width="641" height="3" fill="url(#o36)"/><rect x="1018" y="211" width="641" height="3" fill="url(#o37)"/><rect x="1018" y="214" width="641" height="3" fill="url(#o38)"/><rect x="1018" y="217" width="641" height="3" fill="url(#o39)"/><rect x="1018" y="220" width="641" height="3" fill="url(#o40)"/><rect x="1018" y="223" width="641" height="3" fill="url(#o41)"/><rect x="1018" y="226" width="641" height="3" fill="url(#o42)"/><rect x="1018" y="229" width="641" height="3" fill="url(#o43)"/><rect x="1018" y="232" width="641" height="3" fill="url(#o44)"/><rect x="1018" y="235" width="641" height="3" fill="url(#o45)"/><rect x="1018" y="238" width="641" height="3" fill="url(#o46)"/><rect x="1018" y="241" width="641" height="3" fill="url(#o47)"/><rect x="1018" y="244" width="641" height="3" fill="url(#o48)"/><rect x="1018" y="247" width="641" height="3" fill="url(#o49)"/><rect x="1018" y="250" width="641" height="3" fill="url(#o50)"/><rect x="1018" y="253" width="641" height="3" fill="url(#o51)"/><rect x="1018" y="256" width="641" height="3" fill="url(#o52)"/><rect x="1018" y="259" width="641" height="3" fill="url(#o53)"/><rect x="1018" y="262" width="641" height="3" fill="url(#o54)"/><rect x="1018" y="265" width="641" height="3" fill="url(#o55)"/><rect x="1018" y="268" width="641" height="3" fill="url(#o56)"/><rect x="1018" y="271" width="641" height="3" fill="url(#o57)"/><rect x="1018" y="274" width="641" height="3" fill="url(#o58)"/><rect x="1018" y="277" width="641" height="3" fill="url(#o59)"/><rect x="1018" y="280" width="641" height="3" fill="url(#o60)"/><rect x="1018" y="283" width="641" height="3" fill="url(#o61)"/><rect x="1018" y="286" width="641" height="3" fill="url(#o62)"/><rect x="1018" y="289" width="641" height="3" fill="url(#o63)"/><rect x="1018" y="292" width="641" height="3" fill="url(#o64)"/><rect x="1018" y="295" width="641" height="3" fill="url(#o65)"/><rect x="1018" y="298" width="641" height="3" fill="url(#o66)"/><rect x="1018" y="301" width="641" height="3" fill="url(#o67)"/><rect x="1018" y="304" width="641" height="3" fill="url(#o68)"/><rect x="1018" y="307" width="641" height="3" fill="url(#o69)"/><rect x="1018" y="310" width="641" height="3" fill="url(#o70)"/><rect x="1018" y="313" width="641" height="3" fill="url(#o71)"/><rect x="1018" y="316" width="641" height="3" fill="url(#o72)"/><rect x="1018" y="319" width="641" height="3" fill="url(#o73)"/><rect x="1018" y="322" width="641" height="3" fill="url(#o74)"/><rect x="1018" y="325" width="641" height="3" fill="url(#o75)"/><rect x="1018" y="328" width="641" height="3" fill="url(#o76)"/><rect x="1018" y="331" width="641" height="3" fill="url(#o77)"/><rect x="1018" y="334" width="641" height="3" fill="url(#o78)"/><rect x="1018" y="337" width="641" height="3" fill="url(#o79)"/><rect x="1018" y="340" width="641" height="3" fill="url(#o80)"/><rect x="1018" y="343" width="641" height="3" fill="url(#o81)"/><rect x="1018" y="346" width="641" height="3" fill="url(#o82)"/><rect x="1018" y="349" width="641" height="3" fill="url(#o83)"/><rect x="1018" y="352" width="641" height="3" fill="url(#o84)"/><rect x="1018" y="355" width="641" height="3" fill="url(#o85)"/><rect x="1018" y="358" width="641" height="3" fill="url(#o86)"/><rect x="1018" y="361" width="641" height="3" fill="url(#o87)"/><rect x="1018" y="364" width="641" height="3" fill="url(#o88)"/><rect x="1018" y="367" width="641" height="3" fill="url(#o89)"/><rect x="1018" y="370" width="641" height="3" fill="url(#o90)"/><rect x="1018" y="373" width="641" height="3" fill="url(#o91)"/><rect x="1018" y="376" width="641" height="3" fill="url(#o92)"/><rect x="1018" y="379" width="641" height="3" fill="url(#o93)"/><rect x="1018" y="382" width="641" height="3" fill="url(#o94)"/><rect x="1018" y="385" width="641" height="3" fill="url(#o95)"/><rect x="1018" y="388" width="641" height="3" fill="url(#o96)"/><rect x="1018" y="391" width="641" height="3" fill="url(#o97)"/><rect x="1018" y="394" width="641" height="3" fill="url(#o98)"/><rect x="1018" y="397" width="641" height="3" fill="url(#o99)"/><rect x="1018" y="400" width="641" height="3" fill="url(#o100)"/><rect x="1018" y="403" width="641" height="3" fill="url(#o101)"/><rect x="1018" y="406" width="641" height="3" fill="url(#o102)"/><rect x="1018" y="409" width="641" height="3" fill="url(#o103)"/><rect x="1018" y="412" width="641" height="3" fill="url(#o104)"/><rect x="1018" y="415" width="641" height="3" fill="url(#o105)"/><rect x="1018" y="418" width="641" height="3" fill="url(#o106)"/><rect x="1018" y="421" width="641" height="3" fill="url(#o107)"/><rect x="1018" y="424" width="641" height="3" fill="url(#o108)"/><rect x="1018" y="427" width="641" height="3" fill="url(#o109)"/><rect x="1018" y="430" width="641" height="3" fill="url(#o110)"/><rect x="1018" y="433" width="641" height="3" fill="url(#o111)"/><rect x="1018" y="436" width="641" height="3" fill="url(#o112)"/><rect x="1018" y="439" width="641" height="3" fill="url(#o113)"/><rect x="1018" y="442" width="641" height="3" fill="url(#o114)"/><rect x="1018" y="445" width="641" height="3" fill="url(#o115)"/><rect x="1018" y="448" width="641" height="3" fill="url(#o116)"/><rect x="1018" y="451" width="641" height="3" fill="url(#o117)"/><rect x="1018" y="454" width="641" height="3" fill="url(#o118)"/><rect x="1018" y="457" width="641" height="3" fill="url(#o119)"/><rect x="1018" y="460" width="641" height="3" fill="url(#o120)"/><rect x="1018" y="463" width="641" height="3" fill="url(#o121)"/><rect x="1018" y="466" width="641" height="3" fill="url(#o122)"/><rect x="1018" y="469" width="641" height="3" fill="url(#o123)"/><rect x="1018" y="472" width="641" height="3" fill="url(#o124)"/><rect x="1018" y="475" width="641" height="3" fill="url(#o125)"/><rect x="1018" y="478" width="641" height="3" fill="url(#o126)"/><rect x="1018" y="481" width="641" height="3" fill="url(#o127)"/><rect x="1018" y="484" width="641" height="3" fill="url(#o128)"/><rect x="1018" y="487" width="641" height="3" fill="url(#o129)"/><rect x="1018" y="490" width="641" height="3" fill="url(#o130)"/><rect x="1018" y="493" width="641" height="3" fill="url(#o131)"/><rect x="1018" y="496" width="641" height="3" fill="url(#o132)"/><rect x="1018" y="499" width="641" height="3" fill="url(#o133)"/><rect x="1018" y="502" width="641" height="3" fill="url(#o134)"/><rect x="1018" y="505" width="641" height="3" fill="url(#o135)"/><rect x="1018" y="508" width="641" height="3" fill="url(#o136)"/><rect x="1018" y="511" width="641" height="3" fill="url(#o137)"/><rect x="1018" y="514" width="641" height="3" fill="url(#o138)"/><rect x="1018" y="517" width="641" height="3" fill="url(#o139)"/><rect x="1018" y="520" width="641" height="3" fill="url(#o140)"/><rect x="1018" y="523" width="641" height="3" fill="url(#o141)"/><rect x="1018" y="526" width="641" height="3" fill="url(#o142)"/><rect x="1018" y="529" width="641" height="3" fill="url(#o143)"/><rect x="1018" y="532" width="641" height="3" fill="url(#o144)"/><rect x="1018" y="535" width="641" height="3" fill="url(#o145)"/><rect x="1018" y="538" width="641" height="3" fill="url(#o146)"/><rect x="1018" y="541" width="641" height="3" fill="url(#o147)"/><rect x="1018" y="544" width="641" height="3" fill="url(#o148)"/><rect x="1018" y="547" width="641" height="3" fill="url(#o149)"/><rect x="1018" y="550" width="641" height="3" fill="url(#o150)"/><rect x="1018" y="553" width="641" height="3" fill="url(#o151)"/><rect x="1018" y="556" width="641" height="3" fill="url(#o152)"/><rect x="1018" y="559" width="641" height="3" fill="url(#o153)"/><rect x="1018" y="562" width="641" height="3" fill="url(#o154)"/><rect x="1018" y="565" width="641" height="3" fill="url(#o155)"/><rect x="1018" y="568" width="641" height="3" fill="url(#o156)"/><rect x="1018" y="571" width="641" height="3" fill="url(#o157)"/><rect x="1018" y="574" width="641" height="3" fill="url(#o158)"/></g><g clip-path="url(#tri)"><rect x="1150" y="122" width="350" height="3" fill="url(#i0)"/><rect x="1150" y="125" width="350" height="3" fill="url(#i1)"/><rect x="1150" y="128" width="350" height="3" fill="url(#i2)"/><rect x="1150" y="131" width="350" height="3" fill="url(#i3)"/><rect x="1150" y="134" width="350" height="3" fill="url(#i4)"/><rect x="1150" y="137" width="350" height="3" fill="url(#i5)"/><rect x="1150" y="140" width="350" height="3" fill="url(#i6)"/><rect x="1150" y="143" width="350" height="3" fill="url(#i7)"/><rect x="1150" y="146" width="350" height="3" fill="url(#i8)"/><rect x="1150" y="149" width="350" height="3" fill="url(#i9)"/><rect x="1150" y="152" width="350" height="3" fill="url(#i10)"/><rect x="1150" y="155" width="350" height="3" fill="url(#i11)"/><rect x="1150" y="158" width="350" height="3" fill="url(#i12)"/><rect x="1150" y="161" width="350" height="3" fill="url(#i13)"/><rect x="1150" y="164" width="350" height="3" fill="url(#i14)"/><rect x="1150" y="167" width="350" height="3" fill="url(#i15)"/><rect x="1150" y="170" width="350" height="3" fill="url(#i16)"/><rect x="1150" y="173" width="350" height="3" fill="url(#i17)"/><rect x="1150" y="176" width="350" height="3" fill="url(#i18)"/><rect x="1150" y="179" width="350" height="3" fill="url(#i19)"/><rect x="1150" y="182" width="350" height="3" fill="url(#i20)"/><rect x="1150" y="185" width="350" height="3" fill="url(#i21)"/><rect x="1150" y="188" width="350" height="3" fill="url(#i22)"/><rect x="1150" y="191" width="350" height="3" fill="url(#i23)"/><rect x="1150" y="194" width="350" height="3" fill="url(#i24)"/><rect x="1150" y="197" width="350" height="3" fill="url(#i25)"/><rect x="1150" y="200" width="350" height="3" fill="url(#i26)"/><rect x="1150" y="203" width="350" height="3" fill="url(#i27)"/><rect x="1150" y="206" width="350" height="3" fill="url(#i28)"/><rect x="1150" y="209" width="350" height="3" fill="url(#i29)"/><rect x="1150" y="212" width="350" height="3" fill="url(#i30)"/><rect x="1150" y="215" width="350" height="3" fill="url(#i31)"/><rect x="1150" y="218" width="350" height="3" fill="url(#i32)"/><rect x="1150" y="221" width="350" height="3" fill="url(#i33)"/><rect x="1150" y="224" width="350" height="3" fill="url(#i34)"/><rect x="1150" y="227" width="350" height="3" fill="url(#i35)"/><rect x="1150" y="230" width="350" height="3" fill="url(#i36)"/><rect x="1150" y="233" width="350" height="3" fill="url(#i37)"/><rect x="1150" y="236" width="350" height="3" fill="url(#i38)"/><rect x="1150" y="239" width="350" height="3" fill="url(#i39)"/><rect x="1150" y="242" width="350" height="3" fill="url(#i40)"/><rect x="1150" y="245" width="350" height="3" fill="url(#i41)"/><rect x="1150" y="248" width="350" height="3" fill="url(#i42)"/><rect x="1150" y="251" width="350" height="3" fill="url(#i43)"/><rect x="1150" y="254" width="350" height="3" fill="url(#i44)"/><rect x="1150" y="257" width="350" height="3" fill="url(#i45)"/><rect x="1150" y="260" width="350" height="3" fill="url(#i46)"/><rect x="1150" y="263" width="350" height="3" fill="url(#i47)"/><rect x="1150" y="266" width="350" height="3" fill="url(#i48)"/><rect x="1150" y="269" width="350" height="3" fill="url(#i49)"/><rect x="1150" y="272" width="350" height="3" fill="url(#i50)"/><rect x="1150" y="275" width="350" height="3" fill="url(#i51)"/><rect x="1150" y="278" width="350" height="3" fill="url(#i52)"/><rect x="1150" y="281" width="350" height="3" fill="url(#i53)"/><rect x="1150" y="284" width="350" height="3" fill="url(#i54)"/><rect x="1150" y="287" width="350" height="3" fill="url(#i55)"/><rect x="1150" y="290" width="350" height="3" fill="url(#i56)"/><rect x="1150" y="293" width="350" height="3" fill="url(#i57)"/><rect x="1150" y="296" width="350" height="3" fill="url(#i58)"/><rect x="1150" y="299" width="350" height="3" fill="url(#i59)"/><rect x="1150" y="302" width="350" height="3" fill="url(#i60)"/><rect x="1150" y="305" width="350" height="3" fill="url(#i61)"/><rect x="1150" y="308" width="350" height="3" fill="url(#i62)"/><rect x="1150" y="311" width="350" height="3" fill="url(#i63)"/><rect x="1150" y="314" width="350" height="3" fill="url(#i64)"/><rect x="1150" y="317" width="350" height="3" fill="url(#i65)"/><rect x="1150" y="320" width="350" height="3" fill="url(#i66)"/><rect x="1150" y="323" width="350" height="3" fill="url(#i67)"/><rect x="1150" y="326" width="350" height="3" fill="url(#i68)"/><rect x="1150" y="329" width="350" height="3" fill="url(#i69)"/><rect x="1150" y="332" width="350" height="3" fill="url(#i70)"/><rect x="1150" y="335" width="350" height="3" fill="url(#i71)"/><rect x="1150" y="338" width="350" height="3" fill="url(#i72)"/><rect x="1150" y="341" width="350" height="3" fill="url(#i73)"/><rect x="1150" y="344" width="350" height="3" fill="url(#i74)"/><rect x="1150" y="347" width="350" height="3" fill="url(#i75)"/><rect x="1150" y="350" width="350" height="3" fill="url(#i76)"/><rect x="1150" y="353" width="350" height="3" fill="url(#i77)"/><rect x="1150" y="356" width="350" height="3" fill="url(#i78)"/><rect x="1150" y="359" width="350" height="3" fill="url(#i79)"/><rect x="1150" y="362" width="350" height="3" fill="url(#i80)"/><rect x="1150" y="365" width="350" height="3" fill="url(#i81)"/><rect x="1150" y="368" width="350" height="3" fill="url(#i82)"/><rect x="1150" y="371" width="350" height="3" fill="url(#i83)"/><rect x="1150" y="374" width="350" height="3" fill="url(#i84)"/><rect x="1150" y="377" width="350" height="3" fill="url(#i85)"/><rect x="1150" y="380" width="350" height="3" fill="url(#i86)"/><rect x="1150" y="383" width="350" height="3" fill="url(#i87)"/><rect x="1150" y="386" width="350" height="3" fill="url(#i88)"/><rect x="1150" y="389" width="350" height="3" fill="url(#i89)"/><rect x="1150" y="392" width="350" height="3" fill="url(#i90)"/><rect x="1150" y="395" width="350" height="3" fill="url(#i91)"/><rect x="1150" y="398" width="350" height="3" fill="url(#i92)"/><rect x="1150" y="401" width="350" height="3" fill="url(#i93)"/><rect x="1150" y="404" width="350" height="3" fill="url(#i94)"/><rect x="1150" y="407" width="350" height="3" fill="url(#i95)"/><rect x="1150" y="410" width="350" height="3" fill="url(#i96)"/><rect x="1150" y="413" width="350" height="3" fill="url(#i97)"/><rect x="1150" y="416" width="350" height="3" fill="url(#i98)"/><rect x="1150" y="419" width="350" height="3" fill="url(#i99)"/><rect x="1150" y="422" width="350" height="3" fill="url(#i100)"/><rect x="1150" y="425" width="350" height="3" fill="url(#i101)"/><rect x="1150" y="428" width="350" height="3" fill="url(#i102)"/><rect x="1150" y="431" width="350" height="3" fill="url(#i103)"/><rect x="1150" y="434" width="350" height="3" fill="url(#i104)"/><rect x="1150" y="437" width="350" height="3" fill="url(#i105)"/><rect x="1150" y="440" width="350" height="3" fill="url(#i106)"/><rect x="1150" y="443" width="350" height="3" fill="url(#i107)"/><rect x="1150" y="446" width="350" height="3" fill="url(#i108)"/><rect x="1150" y="449" width="350" height="3" fill="url(#i109)"/><rect x="1150" y="452" width="350" height="3" fill="url(#i110)"/><rect x="1150" y="455" width="350" height="3" fill="url(#i111)"/></g></g><rect x="1018.7" y="92.3" width="640" height="492.1" fill="none" stroke="#a0a0a0" stroke-width="1.3"/><text x="1279.6" y="87.1" font-size="14.3" textLength="84.0" lengthAdjust="spacingAndGlyphs" fill="#dcdcdc" stroke="#dcdcdc" stroke-width="0.23">CIE 1976 u'v'</text><line x1="1013.7" y1="584.4" x2="1018.7" y2="584.4" stroke="#c8c8c8" stroke-width="1.3"/><text x="1004.5" y="589.6" font-size="14.0" textLength="7.5" lengthAdjust="spacingAndGlyphs" fill="#dcdcdc" stroke="#dcdcdc" stroke-width="0.22">0</text><line x1="1013.7" y1="543.5" x2="1018.7" y2="543.5" stroke="#c8c8c8" stroke-width="1.3"/><text x="984.0" y="548.7" font-size="14.0" textLength="28.0" lengthAdjust="spacingAndGlyphs" fill="#dcdcdc" stroke="#dcdcdc" stroke-width="0.22">0,05</text><line x1="1013.7" y1="502.5" x2="1018.7" y2="502.5" stroke="#c8c8c8" stroke-width="1.3"/><text x="991.0" y="507.7" font-size="14.0" textLength="21.0" lengthAdjust="spacingAndGlyphs" fill="#dcdcdc" stroke="#dcdcdc" stroke-width="0.22">0,1</text><line x1="1013.7" y1="461.6" x2="1018.7" y2="461.6" stroke="#c8c8c8" stroke-width="1.3"/><text x="984.0" y="466.8" font-size="14.0" textLength="28.0" lengthAdjust="spacingAndGlyphs" fill="#dcdcdc" stroke="#dcdcdc" stroke-width="0.22">0,15</text><line x1="1013.7" y1="420.7" x2="1018.7" y2="420.7" stroke="#c8c8c8" stroke-width="1.3"/><text x="991.0" y="425.9" font-size="14.0" textLength="21.0" lengthAdjust="spacingAndGlyphs" fill="#dcdcdc" stroke="#dcdcdc" stroke-width="0.22">0,2</text><line x1="1013.7" y1="379.7" x2="1018.7" y2="379.7" stroke="#c8c8c8" stroke-width="1.3"/><text x="984.0" y="384.9" font-size="14.0" textLength="28.0" lengthAdjust="spacingAndGlyphs" fill="#dcdcdc" stroke="#dcdcdc" stroke-width="0.22">0,25</text><line x1="1013.7" y1="338.8" x2="1018.7" y2="338.8" stroke="#c8c8c8" stroke-width="1.3"/><text x="991.0" y="344.0" font-size="14.0" textLength="21.0" lengthAdjust="spacingAndGlyphs" fill="#dcdcdc" stroke="#dcdcdc" stroke-width="0.22">0,3</text><line x1="1013.7" y1="297.9" x2="1018.7" y2="297.9" stroke="#c8c8c8" stroke-width="1.3"/><text x="984.0" y="303.1" font-size="14.0" textLength="28.0" lengthAdjust="spacingAndGlyphs" fill="#dcdcdc" stroke="#dcdcdc" stroke-width="0.22">0,35</text><line x1="1013.7" y1="256.9" x2="1018.7" y2="256.9" stroke="#c8c8c8" stroke-width="1.3"/><text x="991.0" y="262.1" font-size="14.0" textLength="21.0" lengthAdjust="spacingAndGlyphs" fill="#dcdcdc" stroke="#dcdcdc" stroke-width="0.22">0,4</text><line x1="1013.7" y1="216.0" x2="1018.7" y2="216.0" stroke="#c8c8c8" stroke-width="1.3"/><text x="984.0" y="221.2" font-size="14.0" textLength="28.0" lengthAdjust="spacingAndGlyphs" fill="#dcdcdc" stroke="#dcdcdc" stroke-width="0.22">0,45</text><line x1="1013.7" y1="175.0" x2="1018.7" y2="175.0" stroke="#c8c8c8" stroke-width="1.3"/><text x="991.0" y="180.2" font-size="14.0" textLength="21.0" lengthAdjust="spacingAndGlyphs" fill="#dcdcdc" stroke="#dcdcdc" stroke-width="0.22">0,5</text><line x1="1013.7" y1="134.1" x2="1018.7" y2="134.1" stroke="#c8c8c8" stroke-width="1.3"/><text x="984.0" y="139.3" font-size="14.0" textLength="28.0" lengthAdjust="spacingAndGlyphs" fill="#dcdcdc" stroke="#dcdcdc" stroke-width="0.22">0,55</text><line x1="1018.8" y1="584.4" x2="1018.8" y2="590.5" stroke="#c8c8c8" stroke-width="1.5"/><text x="1015.0" y="606.2" font-size="14.0" textLength="7.5" lengthAdjust="spacingAndGlyphs" fill="#dcdcdc" stroke="#dcdcdc" stroke-width="0.22">0</text><line x1="1072.1" y1="584.4" x2="1072.1" y2="590.5" stroke="#c8c8c8" stroke-width="1.5"/><text x="1058.1" y="606.2" font-size="14.0" textLength="28.0" lengthAdjust="spacingAndGlyphs" fill="#dcdcdc" stroke="#dcdcdc" stroke-width="0.22">0,05</text><line x1="1125.3" y1="584.4" x2="1125.3" y2="590.5" stroke="#c8c8c8" stroke-width="1.5"/><text x="1114.8" y="606.2" font-size="14.0" textLength="21.0" lengthAdjust="spacingAndGlyphs" fill="#dcdcdc" stroke="#dcdcdc" stroke-width="0.22">0,1</text><line x1="1178.6" y1="584.4" x2="1178.6" y2="590.5" stroke="#c8c8c8" stroke-width="1.5"/><text x="1164.6" y="606.2" font-size="14.0" textLength="28.0" lengthAdjust="spacingAndGlyphs" fill="#dcdcdc" stroke="#dcdcdc" stroke-width="0.22">0,15</text><line x1="1231.8" y1="584.4" x2="1231.8" y2="590.5" stroke="#c8c8c8" stroke-width="1.5"/><text x="1221.3" y="606.2" font-size="14.0" textLength="21.0" lengthAdjust="spacingAndGlyphs" fill="#dcdcdc" stroke="#dcdcdc" stroke-width="0.22">0,2</text><line x1="1285.1" y1="584.4" x2="1285.1" y2="590.5" stroke="#c8c8c8" stroke-width="1.5"/><text x="1271.1" y="606.2" font-size="14.0" textLength="28.0" lengthAdjust="spacingAndGlyphs" fill="#dcdcdc" stroke="#dcdcdc" stroke-width="0.22">0,25</text><line x1="1338.3" y1="584.4" x2="1338.3" y2="590.5" stroke="#c8c8c8" stroke-width="1.5"/><text x="1327.8" y="606.2" font-size="14.0" textLength="21.0" lengthAdjust="spacingAndGlyphs" fill="#dcdcdc" stroke="#dcdcdc" stroke-width="0.22">0,3</text><line x1="1391.6" y1="584.4" x2="1391.6" y2="590.5" stroke="#c8c8c8" stroke-width="1.5"/><text x="1377.6" y="606.2" font-size="14.0" textLength="28.0" lengthAdjust="spacingAndGlyphs" fill="#dcdcdc" stroke="#dcdcdc" stroke-width="0.22">0,35</text><line x1="1444.8" y1="584.4" x2="1444.8" y2="590.5" stroke="#c8c8c8" stroke-width="1.5"/><text x="1434.3" y="606.2" font-size="14.0" textLength="21.0" lengthAdjust="spacingAndGlyphs" fill="#dcdcdc" stroke="#dcdcdc" stroke-width="0.22">0,4</text><line x1="1498.1" y1="584.4" x2="1498.1" y2="590.5" stroke="#c8c8c8" stroke-width="1.5"/><text x="1484.1" y="606.2" font-size="14.0" textLength="28.0" lengthAdjust="spacingAndGlyphs" fill="#dcdcdc" stroke="#dcdcdc" stroke-width="0.22">0,45</text><line x1="1551.3" y1="584.4" x2="1551.3" y2="590.5" stroke="#c8c8c8" stroke-width="1.5"/><text x="1540.8" y="606.2" font-size="14.0" textLength="21.0" lengthAdjust="spacingAndGlyphs" fill="#dcdcdc" stroke="#dcdcdc" stroke-width="0.22">0,5</text><line x1="1604.6" y1="584.4" x2="1604.6" y2="590.5" stroke="#c8c8c8" stroke-width="1.5"/><text x="1590.6" y="606.2" font-size="14.0" textLength="28.0" lengthAdjust="spacingAndGlyphs" fill="#dcdcdc" stroke="#dcdcdc" stroke-width="0.22">0,55</text><rect x="1145.0" y="116.0" width="12.5" height="12.5" fill="none" stroke="#ffffff" stroke-opacity="0.92" stroke-width="1.6"/><rect x="1156.8" y="127.9" width="12.5" height="12.5" fill="none" stroke="#ffffff" stroke-opacity="0.92" stroke-width="1.6"/><rect x="1169.2" y="139.8" width="12.5" height="12.5" fill="none" stroke="#ffffff" stroke-opacity="0.92" stroke-width="1.6"/><rect x="1184.0" y="155.1" width="12.5" height="12.5" fill="none" stroke="#ffffff" stroke-opacity="0.92" stroke-width="1.6"/><rect x="1202.2" y="171.8" width="12.5" height="12.5" fill="none" stroke="#ffffff" stroke-opacity="0.92" stroke-width="1.6"/><rect x="1229.8" y="124.8" width="12.5" height="12.5" fill="none" stroke="#ffffff" stroke-opacity="0.92" stroke-width="1.6"/><rect x="1228.7" y="136.6" width="12.5" height="12.5" fill="none" stroke="#ffffff" stroke-opacity="0.92" stroke-width="1.6"/><rect x="1227.7" y="147.9" width="12.5" height="12.5" fill="none" stroke="#ffffff" stroke-opacity="0.92" stroke-width="1.6"/><rect x="1226.3" y="161.2" width="12.5" height="12.5" fill="none" stroke="#ffffff" stroke-opacity="0.92" stroke-width="1.6"/><rect x="1225.0" y="176.9" width="12.5" height="12.5" fill="none" stroke="#ffffff" stroke-opacity="0.92" stroke-width="1.6"/><rect x="1159.2" y="203.9" width="12.5" height="12.5" fill="none" stroke="#ffffff" stroke-opacity="0.92" stroke-width="1.6"/><rect x="1171.0" y="201.2" width="12.5" height="12.5" fill="none" stroke="#ffffff" stroke-opacity="0.92" stroke-width="1.6"/><rect x="1184.0" y="199.2" width="12.5" height="12.5" fill="none" stroke="#ffffff" stroke-opacity="0.92" stroke-width="1.6"/><rect x="1197.2" y="197.1" width="12.5" height="12.5" fill="none" stroke="#ffffff" stroke-opacity="0.92" stroke-width="1.6"/><rect x="1209.5" y="195.7" width="12.5" height="12.5" fill="none" stroke="#ffffff" stroke-opacity="0.92" stroke-width="1.6"/><rect x="1492.2" y="148.6" width="12.5" height="12.5" fill="none" stroke="#ffffff" stroke-opacity="0.92" stroke-width="1.6"/><rect x="1428.2" y="159.2" width="12.5" height="12.5" fill="none" stroke="#ffffff" stroke-opacity="0.92" stroke-width="1.6"/><rect x="1373.2" y="169.2" width="12.5" height="12.5" fill="none" stroke="#ffffff" stroke-opacity="0.92" stroke-width="1.6"/><rect x="1324.3" y="176.2" width="12.5" height="12.5" fill="none" stroke="#ffffff" stroke-opacity="0.92" stroke-width="1.6"/><rect x="1271.5" y="185.2" width="12.5" height="12.5" fill="none" stroke="#ffffff" stroke-opacity="0.92" stroke-width="1.6"/><rect x="1337.0" y="305.9" width="12.5" height="12.5" fill="none" stroke="#ffffff" stroke-opacity="0.92" stroke-width="1.6"/><rect x="1304.2" y="275.1" width="12.5" height="12.5" fill="none" stroke="#ffffff" stroke-opacity="0.92" stroke-width="1.6"/><rect x="1278.2" y="249.2" width="12.5" height="12.5" fill="none" stroke="#ffffff" stroke-opacity="0.92" stroke-width="1.6"/><rect x="1259.3" y="229.1" width="12.5" height="12.5" fill="none" stroke="#ffffff" stroke-opacity="0.92" stroke-width="1.6"/><rect x="1240.2" y="210.1" width="12.5" height="12.5" fill="none" stroke="#ffffff" stroke-opacity="0.92" stroke-width="1.6"/><rect x="1198.8" y="447.2" width="12.5" height="12.5" fill="none" stroke="#ffffff" stroke-opacity="0.92" stroke-width="1.6"/><rect x="1206.7" y="362.6" width="12.5" height="12.5" fill="none" stroke="#ffffff" stroke-opacity="0.92" stroke-width="1.6"/><rect x="1213.5" y="305.1" width="12.5" height="12.5" fill="none" stroke="#ffffff" stroke-opacity="0.92" stroke-width="1.6"/><rect x="1217.0" y="259.8" width="12.5" height="12.5" fill="none" stroke="#ffffff" stroke-opacity="0.92" stroke-width="1.6"/><rect x="1219.8" y="222.7" width="12.5" height="12.5" fill="none" stroke="#ffffff" stroke-opacity="0.92" stroke-width="1.6"/><rect x="1222.5" y="193.3" width="12.5" height="12.5" fill="none" stroke="#000" stroke-opacity="1" stroke-width="1.6"/><circle cx="1164.8" cy="120.9" r="4.15" fill="#32af32" stroke="#000" stroke-width="1"/><circle cx="1170.0" cy="130.3" r="4.15" fill="#5bad59" stroke="#000" stroke-width="1"/><circle cx="1179.5" cy="145.5" r="4.15" fill="#6cad69" stroke="#000" stroke-width="1"/><circle cx="1193.3" cy="163.0" r="4.15" fill="#78ad74" stroke="#000" stroke-width="1"/><circle cx="1211.0" cy="185.0" r="4.15" fill="#84ac80" stroke="#000" stroke-width="1"/><circle cx="1226.4" cy="128.8" r="4.15" fill="#cdbe14" stroke="#000" stroke-width="1"/><circle cx="1227.6" cy="135.2" r="4.15" fill="#bab463" stroke="#000" stroke-width="1"/><circle cx="1227.6" cy="150.0" r="4.15" fill="#b7b270" stroke="#000" stroke-width="1"/><circle cx="1227.4" cy="168.7" r="4.15" fill="#b5b17c" stroke="#000" stroke-width="1"/><circle cx="1227.0" cy="189.1" r="4.15" fill="#b2af88" stroke="#000" stroke-width="1"/><circle cx="1176.9" cy="218.8" r="4.15" fill="#28b4b4" stroke="#000" stroke-width="1"/><circle cx="1184.8" cy="216.4" r="4.15" fill="#54b1ae" stroke="#000" stroke-width="1"/><circle cx="1194.4" cy="213.7" r="4.15" fill="#67b0ac" stroke="#000" stroke-width="1"/><circle cx="1205.4" cy="209.5" r="4.15" fill="#74afab" stroke="#000" stroke-width="1"/><circle cx="1216.5" cy="207.7" r="4.15" fill="#81aea9" stroke="#000" stroke-width="1"/><circle cx="1464.1" cy="156.5" r="4.15" fill="#a51e1e" stroke="#000" stroke-width="1"/><circle cx="1423.2" cy="164.4" r="4.15" fill="#a74e4b" stroke="#000" stroke-width="1"/><circle cx="1373.0" cy="175.6" r="4.15" fill="#a8625e" stroke="#000" stroke-width="1"/><circle cx="1323.9" cy="187.2" r="4.15" fill="#a9706c" stroke="#000" stroke-width="1"/><circle cx="1267.7" cy="196.8" r="4.15" fill="#a97e79" stroke="#000" stroke-width="1"/><circle cx="1314.3" cy="326.4" r="4.15" fill="#c328af" stroke="#000" stroke-width="1"/><circle cx="1291.4" cy="292.1" r="4.15" fill="#bb54ab" stroke="#000" stroke-width="1"/><circle cx="1270.9" cy="265.4" r="4.15" fill="#b767aa" stroke="#000" stroke-width="1"/><circle cx="1254.4" cy="243.4" r="4.15" fill="#b574a9" stroke="#000" stroke-width="1"/><circle cx="1238.0" cy="221.1" r="4.15" fill="#b381a8" stroke="#000" stroke-width="1"/><circle cx="1208.2" cy="446.2" r="4.15" fill="#3c3cb4" stroke="#000" stroke-width="1"/><circle cx="1213.4" cy="379.4" r="4.15" fill="#6262ae" stroke="#000" stroke-width="1"/><circle cx="1217.6" cy="323.5" r="4.15" fill="#7171ac" stroke="#000" stroke-width="1"/><circle cx="1221.8" cy="274.9" r="4.15" fill="#7c7cab" stroke="#000" stroke-width="1"/><circle cx="1224.4" cy="235.2" r="4.15" fill="#8888a9" stroke="#000" stroke-width="1"/><circle cx="1227.5" cy="201.5" r="4.15" fill="#ffffff" stroke="#000" stroke-width="1"/><defs><linearGradient id="insIn" gradientUnits="userSpaceOnUse" x1="1440" y1="470" x2="1652" y2="577"><stop offset="0" stop-color="#c0ff00"/><stop offset="0.45" stop-color="#ffff10"/><stop offset="1" stop-color="#ffb400"/></linearGradient><linearGradient id="insOut" gradientUnits="userSpaceOnUse" x1="1440" y1="432" x2="1652" y2="560"><stop offset="0" stop-color="#5f9400"/><stop offset="0.45" stop-color="#909a00"/><stop offset="1" stop-color="#9a7000"/></linearGradient></defs><rect x="1440.5" y="432.5" width="211.5" height="144" fill="url(#insIn)"/><path d="M1440.5 432.5 H1652 V560.5 L1440.5 447.9 Z" fill="url(#insOut)"/><rect x="1440.5" y="432.5" width="211.5" height="144" fill="none" stroke="#9a9a9a" stroke-width="1.6"/><rect x="1538.3" y="496.2" width="14" height="14" fill="none" stroke="#ffffff" stroke-opacity="0.92" stroke-width="1.6"/><circle cx="1506.0" cy="464.5" r="4.7" fill="#c8bb2a" stroke="#000" stroke-width="1"/><circle cx="1463.9" cy="528.4" r="4.7" fill="#bcbc6c" stroke="#000" stroke-width="1"/><text x="51.3" y="651.5" font-size="28.8" textLength="232.1" lengthAdjust="spacingAndGlyphs" fill="#f0f0f0" stroke="#f0f0f0" stroke-width="0.46">Avg dE2000: 3,05</text><text x="55.9" y="692.8" font-size="28.8" textLength="224.9" lengthAdjust="spacingAndGlyphs" fill="#f0f0f0" stroke="#f0f0f0" stroke-width="0.46">Max dE2000: 6,8</text><text x="15.7" y="741.1" font-size="28.2" textLength="217.8" lengthAdjust="spacingAndGlyphs" fill="#f0f0f0" stroke="#f0f0f0" stroke-width="0.45">Current Reading</text><text x="14.9" y="774.9" font-size="23.7" textLength="102.6" lengthAdjust="spacingAndGlyphs" fill="#f0f0f0" stroke="#f0f0f0" stroke-width="0.38">x: 0,4098</text><text x="172.0" y="774.9" font-size="23.7" textLength="102.1" lengthAdjust="spacingAndGlyphs" fill="#f0f0f0" stroke="#f0f0f0" stroke-width="0.38">y: 0,5192</text><text x="15.7" y="816.2" font-size="23.7" textLength="95.7" lengthAdjust="spacingAndGlyphs" fill="#f0f0f0" stroke="#f0f0f0" stroke-width="0.38">fL: 44,29</text><text x="15.7" y="850.5" font-size="23.7" textLength="158.5" lengthAdjust="spacingAndGlyphs" fill="#f0f0f0" stroke="#f0f0f0" stroke-width="0.38">cd/m²: 151,74</text><rect x="357.5" y="659.2" width="249.89999999999998" height="179.79999999999995" fill="#232323"/><line x1="352.5" y1="839.0" x2="357.5" y2="839.0" stroke="#c8c8c8" stroke-width="1.4"/><text x="335.5" y="844.0" font-size="14.0" textLength="15.5" lengthAdjust="spacingAndGlyphs" fill="#dcdcdc" stroke="#dcdcdc" stroke-width="0.22">90</text><line x1="357.5" y1="794.0" x2="607.4" y2="794.0" stroke="#8c8c8c" stroke-width="1.3"/><line x1="352.5" y1="794.0" x2="357.5" y2="794.0" stroke="#c8c8c8" stroke-width="1.4"/><text x="335.5" y="799.0" font-size="14.0" textLength="15.5" lengthAdjust="spacingAndGlyphs" fill="#dcdcdc" stroke="#dcdcdc" stroke-width="0.22">95</text><line x1="357.5" y1="749.1" x2="607.4" y2="749.1" stroke="#8c8c8c" stroke-width="1.3"/><line x1="352.5" y1="749.1" x2="357.5" y2="749.1" stroke="#c8c8c8" stroke-width="1.4"/><text x="327.6" y="754.1" font-size="14.0" textLength="23.4" lengthAdjust="spacingAndGlyphs" fill="#dcdcdc" stroke="#dcdcdc" stroke-width="0.22">100</text><line x1="357.5" y1="704.2" x2="607.4" y2="704.2" stroke="#8c8c8c" stroke-width="1.3"/><line x1="352.5" y1="704.2" x2="357.5" y2="704.2" stroke="#c8c8c8" stroke-width="1.4"/><text x="327.6" y="709.2" font-size="14.0" textLength="23.4" lengthAdjust="spacingAndGlyphs" fill="#dcdcdc" stroke="#dcdcdc" stroke-width="0.22">105</text><line x1="352.5" y1="659.2" x2="357.5" y2="659.2" stroke="#c8c8c8" stroke-width="1.4"/><text x="327.6" y="664.2" font-size="14.0" textLength="23.4" lengthAdjust="spacingAndGlyphs" fill="#dcdcdc" stroke="#dcdcdc" stroke-width="0.22">110</text><path d="M357.5 845 V659.2 H607.4 V845 M357.5 839 H607.4" fill="none" stroke="#8c8c8c" stroke-width="1.5"/><defs><linearGradient id="rbR" x1="0" y1="0" x2="0" y2="1"><stop offset="0" stop-color="#ff5050"/><stop offset="1" stop-color="#ff3c3c"/></linearGradient><linearGradient id="rbG" x1="0" y1="0" x2="0" y2="1"><stop offset="0" stop-color="#58ad58"/><stop offset="1" stop-color="#2d9430"/></linearGradient><linearGradient id="rbB" x1="0" y1="0" x2="0" y2="1"><stop offset="0" stop-color="#5858ff"/><stop offset="1" stop-color="#4c4cff"/></linearGradient></defs><rect x="382.6" y="801" width="64.1" height="38.0" fill="url(#rbR)" stroke="#000" stroke-width="1.6"/><rect x="447.90000000000003" y="757.1" width="66.1" height="81.9" fill="url(#rbG)" stroke="#000" stroke-width="1.6"/><rect x="515.2" y="805.9" width="65.2" height="33.1" fill="url(#rbB)" stroke="#000" stroke-width="1.6"/><line x1="357.5" y1="839" x2="607.4" y2="839" stroke="#8c8c8c" stroke-width="1.5"/><text x="426.2" y="654.1" font-size="14.0" textLength="82.6" lengthAdjust="spacingAndGlyphs" fill="#dcdcdc" stroke="#dcdcdc" stroke-width="0.22">RGB Balance</text><text x="465.2" y="856.0" font-size="14.0" textLength="35.3" lengthAdjust="spacingAndGlyphs" fill="#dcdcdc" stroke="#dcdcdc" stroke-width="0.22">100%</text><rect x="628" y="627.5" width="729" height="230.39999999999998" fill="#000"/><defs><linearGradient id="thg" x1="0" y1="0" x2="0" y2="1"><stop offset="0" stop-color="#303030"/><stop offset="0.45" stop-color="#2c2c2c"/><stop offset="0.5" stop-color="#161616"/><stop offset="1" stop-color="#121212"/></linearGradient></defs><rect x="629.5" y="628.8" width="726" height="31" fill="url(#thg)"/><rect x="629.5" y="659.7" width="726" height="27.9" fill="#444444"/><text x="647.3" y="680.3" font-size="18.6" textLength="86.0" lengthAdjust="spacingAndGlyphs" fill="#f2f2f2" font-weight="bold">x: CIE31</text><text x="830.2" y="680.3" font-size="18.3" textLength="68.0" lengthAdjust="spacingAndGlyphs" fill="#f2f2f2" stroke="#f2f2f2" stroke-width="0.29">0,3223</text><text x="936.4" y="680.3" font-size="18.3" textLength="68.0" lengthAdjust="spacingAndGlyphs" fill="#f2f2f2" stroke="#f2f2f2" stroke-width="0.29">0,3482</text><text x="1042.6" y="680.3" font-size="18.3" textLength="68.0" lengthAdjust="spacingAndGlyphs" fill="#f2f2f2" stroke="#f2f2f2" stroke-width="0.29">0,3754</text><text x="1148.8" y="680.3" font-size="18.3" textLength="68.0" lengthAdjust="spacingAndGlyphs" fill="#f2f2f2" stroke="#f2f2f2" stroke-width="0.29">0,4000</text><text x="1255.5" y="680.3" font-size="18.3" textLength="68.0" lengthAdjust="spacingAndGlyphs" fill="#f2f2f2" stroke="#f2f2f2" stroke-width="0.29">0,4098</text><rect x="629.5" y="687.6" width="726" height="28.3" fill="#898989"/><text x="647.3" y="708.2" font-size="18.6" textLength="86.0" lengthAdjust="spacingAndGlyphs" fill="#f2f2f2" font-weight="bold">y: CIE31</text><text x="830.2" y="708.2" font-size="18.3" textLength="68.0" lengthAdjust="spacingAndGlyphs" fill="#f2f2f2" stroke="#f2f2f2" stroke-width="0.29">0,3534</text><text x="936.4" y="708.2" font-size="18.3" textLength="68.0" lengthAdjust="spacingAndGlyphs" fill="#f2f2f2" stroke="#f2f2f2" stroke-width="0.29">0,4006</text><text x="1042.6" y="708.2" font-size="18.3" textLength="68.0" lengthAdjust="spacingAndGlyphs" fill="#f2f2f2" stroke="#f2f2f2" stroke-width="0.29">0,4508</text><text x="1148.8" y="708.2" font-size="18.3" textLength="68.0" lengthAdjust="spacingAndGlyphs" fill="#f2f2f2" stroke="#f2f2f2" stroke-width="0.29">0,4968</text><text x="1255.5" y="708.2" font-size="18.3" textLength="68.0" lengthAdjust="spacingAndGlyphs" fill="#f2f2f2" stroke="#f2f2f2" stroke-width="0.29">0,5192</text><rect x="629.5" y="715.9" width="726" height="28.6" fill="#444444"/><text x="647.3" y="736.5" font-size="18.6" textLength="13.5" lengthAdjust="spacingAndGlyphs" fill="#f2f2f2" font-weight="bold">Y</text><text x="830.2" y="736.5" font-size="18.3" textLength="93.8" lengthAdjust="spacingAndGlyphs" fill="#f2f2f2" stroke="#f2f2f2" stroke-width="0.29">167,1528</text><text x="936.4" y="736.5" font-size="18.3" textLength="93.8" lengthAdjust="spacingAndGlyphs" fill="#f2f2f2" stroke="#f2f2f2" stroke-width="0.29">163,8705</text><text x="1042.6" y="736.5" font-size="18.3" textLength="93.8" lengthAdjust="spacingAndGlyphs" fill="#f2f2f2" stroke="#f2f2f2" stroke-width="0.29">162,6393</text><text x="1148.8" y="736.5" font-size="18.3" textLength="93.8" lengthAdjust="spacingAndGlyphs" fill="#f2f2f2" stroke="#f2f2f2" stroke-width="0.29">161,5729</text><text x="1255.5" y="736.5" font-size="18.3" textLength="93.8" lengthAdjust="spacingAndGlyphs" fill="#f2f2f2" stroke="#f2f2f2" stroke-width="0.29">151,7415</text><rect x="629.5" y="744.5" width="726" height="28.0" fill="#898989"/><text x="647.3" y="765.1" font-size="18.6" textLength="156.5" lengthAdjust="spacingAndGlyphs" fill="#f2f2f2" font-weight="bold">Target x:CIE31</text><text x="830.2" y="765.1" font-size="18.3" textLength="68.0" lengthAdjust="spacingAndGlyphs" fill="#f2f2f2" stroke="#f2f2f2" stroke-width="0.29">0,3344</text><text x="936.4" y="765.1" font-size="18.3" textLength="68.0" lengthAdjust="spacingAndGlyphs" fill="#f2f2f2" stroke="#f2f2f2" stroke-width="0.29">0,3564</text><text x="1042.6" y="765.1" font-size="18.3" textLength="68.0" lengthAdjust="spacingAndGlyphs" fill="#f2f2f2" stroke="#f2f2f2" stroke-width="0.29">0,3773</text><text x="1148.8" y="765.1" font-size="18.3" textLength="68.0" lengthAdjust="spacingAndGlyphs" fill="#f2f2f2" stroke="#f2f2f2" stroke-width="0.29">0,3969</text><text x="1255.5" y="765.1" font-size="18.3" textLength="68.0" lengthAdjust="spacingAndGlyphs" fill="#f2f2f2" stroke="#f2f2f2" stroke-width="0.29">0,4193</text><rect x="629.5" y="772.5" width="726" height="28.7" fill="#3f3f3f"/><text x="647.3" y="793.1" font-size="18.6" textLength="156.5" lengthAdjust="spacingAndGlyphs" fill="#f2f2f2" font-weight="bold">Target y:CIE31</text><text x="830.2" y="793.1" font-size="18.3" textLength="68.0" lengthAdjust="spacingAndGlyphs" fill="#f2f2f2" stroke="#f2f2f2" stroke-width="0.29">0,3648</text><text x="936.4" y="793.1" font-size="18.3" textLength="68.0" lengthAdjust="spacingAndGlyphs" fill="#f2f2f2" stroke="#f2f2f2" stroke-width="0.29">0,4013</text><text x="1042.6" y="793.1" font-size="18.3" textLength="68.0" lengthAdjust="spacingAndGlyphs" fill="#f2f2f2" stroke="#f2f2f2" stroke-width="0.29">0,4358</text><text x="1148.8" y="793.1" font-size="18.3" textLength="68.0" lengthAdjust="spacingAndGlyphs" fill="#f2f2f2" stroke="#f2f2f2" stroke-width="0.29">0,4682</text><text x="1255.5" y="793.1" font-size="18.3" textLength="68.0" lengthAdjust="spacingAndGlyphs" fill="#f2f2f2" stroke="#f2f2f2" stroke-width="0.29">0,5053</text><rect x="629.5" y="801.2" width="726" height="28.1" fill="#898989"/><text x="647.3" y="821.8" font-size="18.6" textLength="91.0" lengthAdjust="spacingAndGlyphs" fill="#f2f2f2" font-weight="bold">Target Y</text><text x="830.2" y="821.8" font-size="18.3" textLength="93.8" lengthAdjust="spacingAndGlyphs" fill="#f2f2f2" stroke="#f2f2f2" stroke-width="0.29">170,9630</text><text x="936.4" y="821.8" font-size="18.3" textLength="93.8" lengthAdjust="spacingAndGlyphs" fill="#f2f2f2" stroke="#f2f2f2" stroke-width="0.29">167,9621</text><text x="1042.6" y="821.8" font-size="18.3" textLength="93.8" lengthAdjust="spacingAndGlyphs" fill="#f2f2f2" stroke="#f2f2f2" stroke-width="0.29">165,6564</text><text x="1148.8" y="821.8" font-size="18.3" textLength="93.8" lengthAdjust="spacingAndGlyphs" fill="#f2f2f2" stroke="#f2f2f2" stroke-width="0.29">163,8468</text><text x="1255.5" y="821.8" font-size="18.3" textLength="93.8" lengthAdjust="spacingAndGlyphs" fill="#f2f2f2" stroke="#f2f2f2" stroke-width="0.29">162,0973</text><rect x="629.5" y="829.3" width="726" height="28.6" fill="#3c3c3c"/><text x="647.3" y="849.9" font-size="18.6" textLength="90.0" lengthAdjust="spacingAndGlyphs" fill="#f2f2f2" font-weight="bold">ΔE 2000</text><text x="830.2" y="849.9" font-size="18.3" textLength="68.0" lengthAdjust="spacingAndGlyphs" fill="#f2f2f2" stroke="#f2f2f2" stroke-width="0.29">3,8809</text><text x="936.4" y="849.9" font-size="18.3" textLength="68.0" lengthAdjust="spacingAndGlyphs" fill="#f2f2f2" stroke="#f2f2f2" stroke-width="0.29">2,4601</text><text x="1042.6" y="849.9" font-size="18.3" textLength="68.0" lengthAdjust="spacingAndGlyphs" fill="#f2f2f2" stroke="#f2f2f2" stroke-width="0.29">2,7465</text><text x="1148.8" y="849.9" font-size="18.3" textLength="68.0" lengthAdjust="spacingAndGlyphs" fill="#f2f2f2" stroke="#f2f2f2" stroke-width="0.29">3,5102</text><text x="1255.5" y="849.9" font-size="18.3" textLength="68.0" lengthAdjust="spacingAndGlyphs" fill="#f2f2f2" stroke="#f2f2f2" stroke-width="0.29">3,1479</text><text x="857.3" y="650.5" font-size="17.5" textLength="40.0" lengthAdjust="spacingAndGlyphs" fill="#f2f2f2" font-weight="bold">20%</text><text x="963.6" y="650.5" font-size="17.5" textLength="40.0" lengthAdjust="spacingAndGlyphs" fill="#f2f2f2" font-weight="bold">40%</text><text x="1069.9" y="650.5" font-size="17.5" textLength="40.0" lengthAdjust="spacingAndGlyphs" fill="#f2f2f2" font-weight="bold">60%</text><text x="1176.2" y="650.5" font-size="17.5" textLength="40.0" lengthAdjust="spacingAndGlyphs" fill="#f2f2f2" font-weight="bold">80%</text><text x="1277.0" y="650.5" font-size="17.5" textLength="51.0" lengthAdjust="spacingAndGlyphs" fill="#f2f2f2" font-weight="bold">100%</text><defs><linearGradient id="bbtn" x1="0" y1="0" x2="0" y2="1"><stop offset="0" stop-color="#acacac"/><stop offset="0.5" stop-color="#8a8a8a"/><stop offset="1" stop-color="#5e5e5e"/></linearGradient><linearGradient id="bsel" x1="0" y1="0" x2="0" y2="1"><stop offset="0" stop-color="#1a1a1a"/><stop offset="1" stop-color="#2c2c2c"/></linearGradient><linearGradient id="bdark" x1="0" y1="0" x2="0" y2="1"><stop offset="0" stop-color="#484848"/><stop offset="1" stop-color="#282828"/></linearGradient><linearGradient id="bctl" x1="0" y1="0" x2="0" y2="1"><stop offset="0" stop-color="#b4b4b4"/><stop offset="1" stop-color="#7c7c7c"/></linearGradient><linearGradient id="bctl2" x1="0" y1="0" x2="0" y2="1"><stop offset="0" stop-color="#b8b8b8"/><stop offset="1" stop-color="#8a8a8a"/></linearGradient><linearGradient id="bcirc" x1="0" y1="0" x2="0" y2="1"><stop offset="0" stop-color="#7a7a7a"/><stop offset="1" stop-color="#a8a8a8"/></linearGradient><linearGradient id="bcirc2" x1="0" y1="0" x2="0" y2="1"><stop offset="0" stop-color="#8c8c8c"/><stop offset="1" stop-color="#b8b8b8"/></linearGradient></defs><rect x="0" y="871" width="1669" height="73" fill="#2b2b2b"/><path d="M1 944 V876 Q1 872 5 872 H53.3 Q57.3 872 57.3 876 V944 Z" fill="url(#bbtn)"/><circle cx="29.6" cy="884.3" r="9.4" fill="url(#bcirc)"/><path d="M23.8 886 L29.6 880.5 L35.2 886 Z" fill="#2a2a2a"/><rect x="7.5" y="905" width="44" height="38" rx="4" fill="#ffff00" stroke="#c8c000" stroke-width="1"/><path d="M65.0 944 V876 Q65.0 872 69.0 872 H248.4 Q252.4 872 252.4 876 V944 Z" fill="url(#bbtn)"/><rect x="72.0" y="879.4" width="173.9" height="44.5" rx="5" fill="#c0c0a2" stroke="rgba(0,0,0,0.25)" stroke-width="1"/><text x="146.3" y="943.6" font-size="14.5" textLength="24.8" lengthAdjust="spacingAndGlyphs" fill="#333333" font-weight="bold">20%</text><path d="M254.9 944 V876 Q254.9 872 258.9 872 H438.3 Q442.3 872 442.3 876 V944 Z" fill="url(#bbtn)"/><rect x="261.9" y="879.4" width="173.9" height="44.5" rx="5" fill="#c1c188" stroke="rgba(0,0,0,0.25)" stroke-width="1"/><text x="336.2" y="943.6" font-size="14.5" textLength="24.8" lengthAdjust="spacingAndGlyphs" fill="#333333" font-weight="bold">40%</text><path d="M444.8 944 V876 Q444.8 872 448.8 872 H628.2 Q632.2 872 632.2 876 V944 Z" fill="url(#bbtn)"/><rect x="451.8" y="879.4" width="173.9" height="44.5" rx="5" fill="#c1c06b" stroke="rgba(0,0,0,0.25)" stroke-width="1"/><text x="526.1" y="943.6" font-size="14.5" textLength="24.8" lengthAdjust="spacingAndGlyphs" fill="#333333" font-weight="bold">60%</text><path d="M634.7 944 V876 Q634.7 872 638.7 872 H818.1 Q822.1 872 822.1 876 V944 Z" fill="url(#bbtn)"/><rect x="641.7" y="879.4" width="173.9" height="44.5" rx="5" fill="#c0c050" stroke="rgba(0,0,0,0.25)" stroke-width="1"/><text x="716.0" y="943.6" font-size="14.5" textLength="24.8" lengthAdjust="spacingAndGlyphs" fill="#333333" font-weight="bold">80%</text><path d="M824.6 944 V876 Q824.6 872 828.6 872 H1008.0 Q1012.0 872 1012.0 876 V944 Z" fill="url(#bsel)"/><rect x="831.6" y="879.4" width="173.9" height="44.5" rx="5" fill="#c2c000" stroke="rgba(0,0,0,0.25)" stroke-width="1"/><text x="901.8" y="943.6" font-size="14.5" textLength="33.0" lengthAdjust="spacingAndGlyphs" fill="#f4f4f4" font-weight="bold">100%</text><rect x="1012.4" y="872" width="253.3" height="72" fill="url(#bdark)"/><path d="M1265.7 944 V876 Q1265.7 872 1269.7 872 H1322.5 Q1326.5 872 1326.5 876 V944 Z" fill="url(#bbtn)"/><rect x="1265.7" y="872" width="60.8" height="23" fill="url(#bctl2)"/><line x1="1265.7" y1="895" x2="1326.5" y2="895" stroke="#555" stroke-width="1.2"/><circle cx="1296.6" cy="883.5" r="9.5" fill="url(#bcirc2)"/><path d="M1290.8 886.5 L1296.6 880.8 L1302.4 886.5 Z" fill="#2a2a2a"/><rect x="1277.2" y="904" width="37" height="36" rx="5" fill="#b4b4b4" stroke="#1e1e1e" stroke-width="2.6"/><rect x="1287.8" y="914" width="17.2" height="17" fill="#0a0a0a"/><rect x="1327.3" y="871.8" width="283" height="37.6" fill="url(#bctl)"/><rect x="1610.3" y="871.8" width="58.7" height="37.6" fill="#2f2f2f"/><circle cx="1640" cy="891" r="12.5" fill="#262626"/><line x1="1385.2" y1="871.8" x2="1385.2" y2="909.4" stroke="#3c3c3c" stroke-width="1.3"/><line x1="1441.3" y1="871.8" x2="1441.3" y2="909.4" stroke="#3c3c3c" stroke-width="1.3"/><line x1="1497.7" y1="871.8" x2="1497.7" y2="909.4" stroke="#3c3c3c" stroke-width="1.3"/><line x1="1554.2" y1="871.8" x2="1554.2" y2="909.4" stroke="#3c3c3c" stroke-width="1.3"/><line x1="1327.3" y1="909.8" x2="1669" y2="909.8" stroke="#2e2e2e" stroke-width="2.2"/><circle cx="1356.2" cy="891" r="12" fill="url(#bcirc)"/><circle cx="1413.2" cy="891" r="12" fill="url(#bcirc)"/><circle cx="1469.5" cy="891" r="12" fill="url(#bcirc)"/><circle cx="1526.0" cy="891" r="12" fill="url(#bcirc)"/><circle cx="1582.2" cy="891" r="12" fill="url(#bcirc)"/><rect x="1351.2" y="886" width="10" height="10" fill="#2a2a2a"/><path d="M1409.2 884.5 L1419.2 891 L1409.2 897.5 Z" fill="#2a2a2a"/><path d="M1462.5 886.3 h4.2 v1.9 h-2.1 v7.9 h2.1 v1.9 h-4.2 Z M1476.5 886.3 h-4.2 v1.9 h2.1 v7.9 h-2.1 v1.9 h4.2 Z" fill="#2a2a2a"/><rect x="1466.9" y="891.3" width="1.8" height="1.8" fill="#2a2a2a"/><rect x="1470.3" y="891.3" width="1.8" height="1.8" fill="#2a2a2a"/><path d="M1526.0 891 C1523.0 887 1517.0 887 1517.0 891 C1517.0 895 1523.0 895 1526.0 891 C1529.0 887 1535.0 887 1535.0 891 C1535.0 895 1529.0 895 1526.0 891Z" fill="none" stroke="#2a2a2a" stroke-width="2.2"/><path d="M1576.2 889 A6.5 6.5 0 0 1 1587.2 887 M1588.2 893 A6.5 6.5 0 0 1 1577.2 895" fill="none" stroke="#2a2a2a" stroke-width="2.8"/><path d="M1584.2 884.5 L1589.8 884.5 L1588.2 890 Z M1580.2 897.5 L1574.8 897.5 L1576.2 892 Z" fill="#2a2a2a"/><path d="M1327.3 944 V915.5 Q1327.3 911.5 1331.3 911.5 H1497 V944 Z" fill="url(#bctl2)"/><path d="M1498.5 944 V911.5 H1669 V944 Z" fill="url(#bctl2)"/><line x1="1497.8" y1="911" x2="1497.8" y2="944" stroke="#2e2e2e" stroke-width="1.6"/><circle cx="1366" cy="929.7" r="12" fill="url(#bcirc)"/><circle cx="1632.6" cy="929.7" r="12" fill="url(#bcirc)"/><text x="1360.0" y="935.5" font-size="20.0" textLength="12.0" lengthAdjust="spacingAndGlyphs" fill="#2a2a2a" stroke="#2a2a2a" stroke-width="0.32">«</text><text x="1626.6" y="935.5" font-size="20.0" textLength="12.0" lengthAdjust="spacingAndGlyphs" fill="#2a2a2a" stroke="#2a2a2a" stroke-width="0.32">»</text><text x="1399.5" y="939.1" font-size="27.0" textLength="62.5" lengthAdjust="spacingAndGlyphs" fill="#303030" stroke="#303030" stroke-width="0.7">Back</text><text x="1533.3" y="939.1" font-size="27.0" textLength="63.8" lengthAdjust="spacingAndGlyphs" fill="#303030" stroke="#303030" stroke-width="0.7">Next</text><rect x="1662" y="0" width="7" height="870" fill="url(#redge)"/></svg></body></html>
